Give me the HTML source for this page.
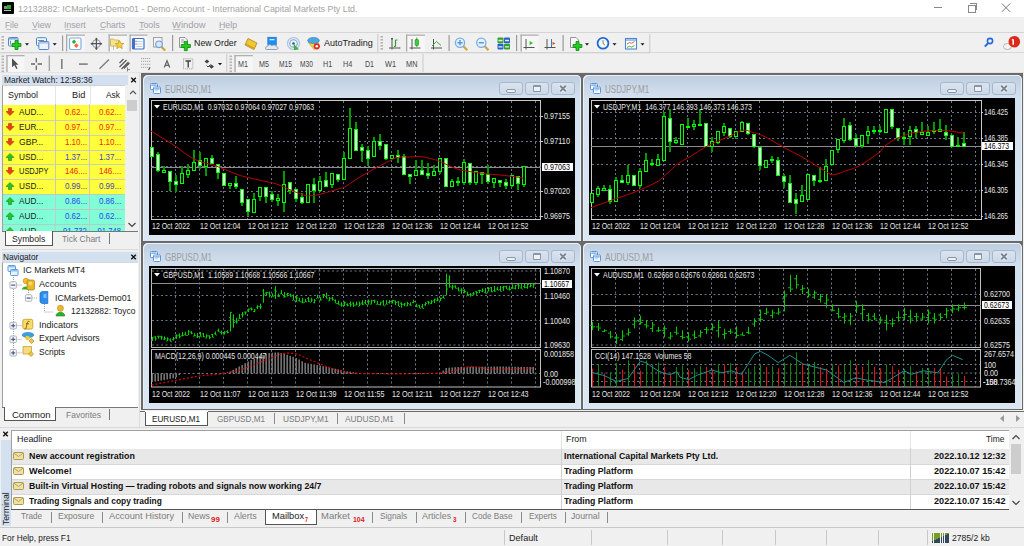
<!DOCTYPE html><html><head><meta charset="utf-8"><style>html,body{margin:0;padding:0;width:1024px;height:546px;overflow:hidden;position:relative;font-family:'Liberation Sans', sans-serif;background:#f0f0f0}</style></head><body>
<div style="position:absolute;left:0px;top:0px;width:1024px;height:546px;background:#f0f0f0"></div>
<div style="position:absolute;left:0px;top:0px;width:1024px;height:17px;background:#fff"></div>
<div style="position:absolute;left:1.5px;top:2px;width:12px;height:12px;background:#000;border-radius:1px"></div>
<div style="position:absolute;left:3.6px;top:6px;width:3px;height:3px;background:#8a8a8a"></div>
<div style="position:absolute;left:7px;top:5px;width:4px;height:4.3px;background:#20b020"></div>
<div style="position:absolute;left:3.5px;top:10px;width:7.5px;height:1px;background:#b8b8c8"></div>
<span id="t1" style="transform:scaleX(0.9036);transform-origin:0 0;position:absolute;left:17.60px;top:3.74px;font-size:9.8px;line-height:10.947px;color:#a3a3a3;font-weight:normal;white-space:nowrap;font-family:'Liberation Sans', sans-serif;">12132882: ICMarkets-Demo01 - Demo Account - International Capital Markets Pty Ltd.</span>
<div style="position:absolute;left:934px;top:7px;width:8px;height:1px;background:#888"></div>
<div style="position:absolute;left:968px;top:5px;width:6px;height:6px;border:1px solid #888;"></div>
<div style="position:absolute;left:970px;top:3px;width:6px;height:6px;border-top:1px solid #888;border-right:1px solid #888;"></div>
<svg style="position:absolute;left:1000px;top:2px" width="12" height="12"><path d="M1.8 1.5L10.2 9.9M10.2 1.5L1.8 9.9" stroke="#777" stroke-width="1"/></svg>
<span id="t2" style="transform:scaleX(0.8546);transform-origin:0 0;position:absolute;left:5.20px;top:19.94px;font-size:9.8px;line-height:10.947px;color:#a0a0a8;font-weight:normal;white-space:nowrap;font-family:'Liberation Sans', sans-serif;">File</span>
<div style="position:absolute;left:5.5px;top:29px;width:5px;height:1px;background:#c0c0c8"></div>
<span id="t3" style="transform:scaleX(0.9021);transform-origin:0 0;position:absolute;left:32.10px;top:19.94px;font-size:9.8px;line-height:10.947px;color:#a0a0a8;font-weight:normal;white-space:nowrap;font-family:'Liberation Sans', sans-serif;">View</span>
<div style="position:absolute;left:32.4px;top:29px;width:5px;height:1px;background:#c0c0c8"></div>
<span id="t4" style="transform:scaleX(0.8892);transform-origin:0 0;position:absolute;left:64.40px;top:19.94px;font-size:9.8px;line-height:10.947px;color:#a0a0a8;font-weight:normal;white-space:nowrap;font-family:'Liberation Sans', sans-serif;">Insert</span>
<div style="position:absolute;left:64.7px;top:29px;width:5px;height:1px;background:#c0c0c8"></div>
<span id="t5" style="transform:scaleX(0.8767);transform-origin:0 0;position:absolute;left:99.60px;top:19.94px;font-size:9.8px;line-height:10.947px;color:#a0a0a8;font-weight:normal;white-space:nowrap;font-family:'Liberation Sans', sans-serif;">Charts</span>
<div style="position:absolute;left:99.89999999999999px;top:29px;width:5px;height:1px;background:#c0c0c8"></div>
<span id="t6" style="transform:scaleX(0.9049);transform-origin:0 0;position:absolute;left:138.70px;top:19.94px;font-size:9.8px;line-height:10.947px;color:#a0a0a8;font-weight:normal;white-space:nowrap;font-family:'Liberation Sans', sans-serif;">Tools</span>
<div style="position:absolute;left:139.0px;top:29px;width:5px;height:1px;background:#c0c0c8"></div>
<span id="t7" style="transform:scaleX(0.9610);transform-origin:0 0;position:absolute;left:172.30px;top:19.94px;font-size:9.8px;line-height:10.947px;color:#a0a0a8;font-weight:normal;white-space:nowrap;font-family:'Liberation Sans', sans-serif;">Window</span>
<div style="position:absolute;left:172.60000000000002px;top:29px;width:8px;height:1px;background:#c0c0c8"></div>
<span id="t8" style="transform:scaleX(0.8980);transform-origin:0 0;position:absolute;left:219.10px;top:19.94px;font-size:9.8px;line-height:10.947px;color:#a0a0a8;font-weight:normal;white-space:nowrap;font-family:'Liberation Sans', sans-serif;">Help</span>
<div style="position:absolute;left:219.4px;top:29px;width:5px;height:1px;background:#c0c0c8"></div>
<div style="position:absolute;left:0px;top:32px;width:1024px;height:1px;background:#d5d5d5"></div>
<div style="position:absolute;left:0px;top:52px;width:1024px;height:1px;background:#d9d9d9"></div>
<div style="position:absolute;left:0px;top:72px;width:1024px;height:1px;background:#e3e3e3"></div>
<div style="position:absolute;left:2px;top:75px;width:125.5px;height:9.5px;background:#d2e0f0"></div>
<span id="t9" style="transform:scaleX(0.8557);transform-origin:0 0;position:absolute;left:4.00px;top:74.64px;font-size:9.8px;line-height:10.947px;color:#1a1a1a;font-weight:normal;white-space:nowrap;font-family:'Liberation Sans', sans-serif;">Market Watch: 12:58:36</span>
<svg style="position:absolute;left:130px;top:77px" width="8" height="7"><path d="M1.3 0.8L5.8 5.3M5.8 0.8L1.3 5.3" stroke="#111" stroke-width="1.4"/></svg>
<div style="position:absolute;left:2px;top:85px;width:123px;height:146px;background:#fff;border-left:1px solid #a0a0a0;border-top:1px solid #d0d0d0;box-sizing:border-box"></div>
<span id="t10" style="transform:scaleX(0.9182);transform-origin:0 0;position:absolute;left:7.70px;top:90.34px;font-size:9.8px;line-height:10.947px;color:#1a1a1a;font-weight:normal;white-space:nowrap;font-family:'Liberation Sans', sans-serif;">Symbol</span>
<span id="t11" style="transform:scaleX(0.9385);transform-origin:0 0;position:absolute;left:72.00px;top:90.34px;font-size:9.8px;line-height:10.947px;color:#1a1a1a;font-weight:normal;white-space:nowrap;font-family:'Liberation Sans', sans-serif;">Bid</span>
<span id="t12" style="transform:scaleX(0.8566);transform-origin:0 0;position:absolute;left:106.00px;top:90.34px;font-size:9.8px;line-height:10.947px;color:#1a1a1a;font-weight:normal;white-space:nowrap;font-family:'Liberation Sans', sans-serif;">Ask</span>
<div style="position:absolute;left:55px;top:86px;width:1px;height:18px;background:#e6e6e6"></div>
<div style="position:absolute;left:89.5px;top:86px;width:1px;height:18px;background:#e6e6e6"></div>
<div style="position:absolute;left:3px;top:104px;width:122px;height:127px;overflow:hidden">
<div style="position:absolute;left:0px;top:0.7999999999999972px;width:122px;height:15px;background:#ffff3c"></div>
<svg style="position:absolute;left:3.2px;top:3.799999999999997px" width="9" height="8"><path d="M2.5 0.5H5.5V3.5H8L4 7.5L0 3.5H2.5Z" fill="#e8401a" stroke="#b82a10" stroke-width="0.6"/></svg>
<span id="t13" style="transform:scaleX(0.8385);transform-origin:0 0;position:absolute;left:15.50px;top:2.84px;font-size:9.8px;line-height:10.947px;color:#1a1a1a;font-weight:normal;white-space:nowrap;font-family:'Liberation Sans', sans-serif;">AUD...</span>
<div style="position:absolute;left:83.80px;top:2.84px;width:0;height:0"><span id="t14" style="transform:scaleX(0.8188);transform-origin:100% 0;position:absolute;right:0;top:0;font-size:9.8px;line-height:10.947px;color:#f02a10;font-weight:normal;white-space:nowrap;font-family:'Liberation Sans', sans-serif;">0.62...</span></div>
<div style="position:absolute;left:118.00px;top:2.84px;width:0;height:0"><span id="t15" style="transform:scaleX(0.8188);transform-origin:100% 0;position:absolute;right:0;top:0;font-size:9.8px;line-height:10.947px;color:#f02a10;font-weight:normal;white-space:nowrap;font-family:'Liberation Sans', sans-serif;">0.62...</span></div>
<div style="position:absolute;left:0px;top:15.700000000000003px;width:122px;height:15px;background:#ffff3c"></div>
<div style="position:absolute;left:0px;top:15.700000000000003px;width:122px;height:1px;background:#cfcfb8"></div>
<svg style="position:absolute;left:3.2px;top:18.700000000000003px" width="9" height="8"><path d="M2.5 0.5H5.5V3.5H8L4 7.5L0 3.5H2.5Z" fill="#e8401a" stroke="#b82a10" stroke-width="0.6"/></svg>
<span id="t16" style="transform:scaleX(0.8385);transform-origin:0 0;position:absolute;left:15.50px;top:17.74px;font-size:9.8px;line-height:10.947px;color:#1a1a1a;font-weight:normal;white-space:nowrap;font-family:'Liberation Sans', sans-serif;">EUR...</span>
<div style="position:absolute;left:83.80px;top:17.74px;width:0;height:0"><span id="t17" style="transform:scaleX(0.8188);transform-origin:100% 0;position:absolute;right:0;top:0;font-size:9.8px;line-height:10.947px;color:#f02a10;font-weight:normal;white-space:nowrap;font-family:'Liberation Sans', sans-serif;">0.97...</span></div>
<div style="position:absolute;left:118.00px;top:17.74px;width:0;height:0"><span id="t18" style="transform:scaleX(0.8188);transform-origin:100% 0;position:absolute;right:0;top:0;font-size:9.8px;line-height:10.947px;color:#f02a10;font-weight:normal;white-space:nowrap;font-family:'Liberation Sans', sans-serif;">0.97...</span></div>
<div style="position:absolute;left:0px;top:30.599999999999994px;width:122px;height:15px;background:#ffff3c"></div>
<div style="position:absolute;left:0px;top:30.599999999999994px;width:122px;height:1px;background:#cfcfb8"></div>
<svg style="position:absolute;left:3.2px;top:33.599999999999994px" width="9" height="8"><path d="M2.5 0.5H5.5V3.5H8L4 7.5L0 3.5H2.5Z" fill="#e8401a" stroke="#b82a10" stroke-width="0.6"/></svg>
<span id="t19" style="transform:scaleX(0.8770);transform-origin:0 0;position:absolute;left:15.50px;top:32.64px;font-size:9.8px;line-height:10.947px;color:#1a1a1a;font-weight:normal;white-space:nowrap;font-family:'Liberation Sans', sans-serif;">GBP...</span>
<div style="position:absolute;left:83.80px;top:32.64px;width:0;height:0"><span id="t20" style="transform:scaleX(0.8188);transform-origin:100% 0;position:absolute;right:0;top:0;font-size:9.8px;line-height:10.947px;color:#f02a10;font-weight:normal;white-space:nowrap;font-family:'Liberation Sans', sans-serif;">1.10...</span></div>
<div style="position:absolute;left:118.00px;top:32.64px;width:0;height:0"><span id="t21" style="transform:scaleX(0.8188);transform-origin:100% 0;position:absolute;right:0;top:0;font-size:9.8px;line-height:10.947px;color:#f02a10;font-weight:normal;white-space:nowrap;font-family:'Liberation Sans', sans-serif;">1.10...</span></div>
<div style="position:absolute;left:0px;top:45.5px;width:122px;height:15px;background:#ffff3c"></div>
<div style="position:absolute;left:0px;top:45.5px;width:122px;height:1px;background:#cfcfb8"></div>
<svg style="position:absolute;left:3.2px;top:48.5px" width="9" height="8"><path d="M2.5 7.5H5.5V4.5H8L4 0.5L0 4.5H2.5Z" fill="#2cc22c" stroke="#138813" stroke-width="0.6"/></svg>
<span id="t22" style="transform:scaleX(0.8385);transform-origin:0 0;position:absolute;left:15.50px;top:47.54px;font-size:9.8px;line-height:10.947px;color:#1a1a1a;font-weight:normal;white-space:nowrap;font-family:'Liberation Sans', sans-serif;">USD...</span>
<div style="position:absolute;left:83.80px;top:47.54px;width:0;height:0"><span id="t23" style="transform:scaleX(0.8188);transform-origin:100% 0;position:absolute;right:0;top:0;font-size:9.8px;line-height:10.947px;color:#4646c0;font-weight:normal;white-space:nowrap;font-family:'Liberation Sans', sans-serif;">1.37...</span></div>
<div style="position:absolute;left:118.00px;top:47.54px;width:0;height:0"><span id="t24" style="transform:scaleX(0.8188);transform-origin:100% 0;position:absolute;right:0;top:0;font-size:9.8px;line-height:10.947px;color:#4646c0;font-weight:normal;white-space:nowrap;font-family:'Liberation Sans', sans-serif;">1.37...</span></div>
<div style="position:absolute;left:0px;top:60.400000000000006px;width:122px;height:15px;background:#ffff3c"></div>
<div style="position:absolute;left:0px;top:60.400000000000006px;width:122px;height:1px;background:#cfcfb8"></div>
<svg style="position:absolute;left:3.2px;top:63.400000000000006px" width="9" height="8"><path d="M2.5 0.5H5.5V3.5H8L4 7.5L0 3.5H2.5Z" fill="#e8401a" stroke="#b82a10" stroke-width="0.6"/></svg>
<span id="t25" style="transform:scaleX(0.7605);transform-origin:0 0;position:absolute;left:15.50px;top:62.44px;font-size:9.8px;line-height:10.947px;color:#1a1a1a;font-weight:normal;white-space:nowrap;font-family:'Liberation Sans', sans-serif;">USDJPY</span>
<div style="position:absolute;left:83.80px;top:62.44px;width:0;height:0"><span id="t26" style="transform:scaleX(0.8188);transform-origin:100% 0;position:absolute;right:0;top:0;font-size:9.8px;line-height:10.947px;color:#f02a10;font-weight:normal;white-space:nowrap;font-family:'Liberation Sans', sans-serif;">146....</span></div>
<div style="position:absolute;left:118.00px;top:62.44px;width:0;height:0"><span id="t27" style="transform:scaleX(0.8188);transform-origin:100% 0;position:absolute;right:0;top:0;font-size:9.8px;line-height:10.947px;color:#f02a10;font-weight:normal;white-space:nowrap;font-family:'Liberation Sans', sans-serif;">146....</span></div>
<div style="position:absolute;left:0px;top:75.30000000000001px;width:122px;height:15px;background:#ffff3c"></div>
<div style="position:absolute;left:0px;top:75.30000000000001px;width:122px;height:1px;background:#cfcfb8"></div>
<svg style="position:absolute;left:3.2px;top:78.30000000000001px" width="9" height="8"><path d="M2.5 7.5H5.5V4.5H8L4 0.5L0 4.5H2.5Z" fill="#2cc22c" stroke="#138813" stroke-width="0.6"/></svg>
<span id="t28" style="transform:scaleX(0.8385);transform-origin:0 0;position:absolute;left:15.50px;top:77.34px;font-size:9.8px;line-height:10.947px;color:#1a1a1a;font-weight:normal;white-space:nowrap;font-family:'Liberation Sans', sans-serif;">USD...</span>
<div style="position:absolute;left:83.80px;top:77.34px;width:0;height:0"><span id="t29" style="transform:scaleX(0.8188);transform-origin:100% 0;position:absolute;right:0;top:0;font-size:9.8px;line-height:10.947px;color:#4646c0;font-weight:normal;white-space:nowrap;font-family:'Liberation Sans', sans-serif;">0.99...</span></div>
<div style="position:absolute;left:118.00px;top:77.34px;width:0;height:0"><span id="t30" style="transform:scaleX(0.8188);transform-origin:100% 0;position:absolute;right:0;top:0;font-size:9.8px;line-height:10.947px;color:#4646c0;font-weight:normal;white-space:nowrap;font-family:'Liberation Sans', sans-serif;">0.99...</span></div>
<div style="position:absolute;left:0px;top:90.19999999999999px;width:122px;height:15px;background:#80ffd6"></div>
<div style="position:absolute;left:0px;top:90.19999999999999px;width:122px;height:1px;background:#b4ccc4"></div>
<svg style="position:absolute;left:3.2px;top:93.19999999999999px" width="9" height="8"><path d="M2.5 7.5H5.5V4.5H8L4 0.5L0 4.5H2.5Z" fill="#2cc22c" stroke="#138813" stroke-width="0.6"/></svg>
<span id="t31" style="transform:scaleX(0.8385);transform-origin:0 0;position:absolute;left:15.50px;top:92.24px;font-size:9.8px;line-height:10.947px;color:#1a1a1a;font-weight:normal;white-space:nowrap;font-family:'Liberation Sans', sans-serif;">AUD...</span>
<div style="position:absolute;left:83.80px;top:92.24px;width:0;height:0"><span id="t32" style="transform:scaleX(0.8188);transform-origin:100% 0;position:absolute;right:0;top:0;font-size:9.8px;line-height:10.947px;color:#2a46ee;font-weight:normal;white-space:nowrap;font-family:'Liberation Sans', sans-serif;">0.86...</span></div>
<div style="position:absolute;left:118.00px;top:92.24px;width:0;height:0"><span id="t33" style="transform:scaleX(0.8188);transform-origin:100% 0;position:absolute;right:0;top:0;font-size:9.8px;line-height:10.947px;color:#2a46ee;font-weight:normal;white-space:nowrap;font-family:'Liberation Sans', sans-serif;">0.86...</span></div>
<div style="position:absolute;left:0px;top:105.1px;width:122px;height:15px;background:#80ffd6"></div>
<div style="position:absolute;left:0px;top:105.1px;width:122px;height:1px;background:#b4ccc4"></div>
<svg style="position:absolute;left:3.2px;top:108.1px" width="9" height="8"><path d="M2.5 7.5H5.5V4.5H8L4 0.5L0 4.5H2.5Z" fill="#2cc22c" stroke="#138813" stroke-width="0.6"/></svg>
<span id="t34" style="transform:scaleX(0.8385);transform-origin:0 0;position:absolute;left:15.50px;top:107.14px;font-size:9.8px;line-height:10.947px;color:#1a1a1a;font-weight:normal;white-space:nowrap;font-family:'Liberation Sans', sans-serif;">AUD...</span>
<div style="position:absolute;left:83.80px;top:107.14px;width:0;height:0"><span id="t35" style="transform:scaleX(0.8188);transform-origin:100% 0;position:absolute;right:0;top:0;font-size:9.8px;line-height:10.947px;color:#2a46ee;font-weight:normal;white-space:nowrap;font-family:'Liberation Sans', sans-serif;">0.62...</span></div>
<div style="position:absolute;left:118.00px;top:107.14px;width:0;height:0"><span id="t36" style="transform:scaleX(0.8188);transform-origin:100% 0;position:absolute;right:0;top:0;font-size:9.8px;line-height:10.947px;color:#2a46ee;font-weight:normal;white-space:nowrap;font-family:'Liberation Sans', sans-serif;">0.62...</span></div>
<div style="position:absolute;left:0px;top:120.0px;width:122px;height:15px;background:#80ffd6"></div>
<div style="position:absolute;left:0px;top:120.0px;width:122px;height:1px;background:#b4ccc4"></div>
<svg style="position:absolute;left:3.2px;top:123.0px" width="9" height="8"><path d="M2.5 7.5H5.5V4.5H8L4 0.5L0 4.5H2.5Z" fill="#2cc22c" stroke="#138813" stroke-width="0.6"/></svg>
<span id="t37" style="transform:scaleX(0.8385);transform-origin:0 0;position:absolute;left:15.50px;top:122.04px;font-size:9.8px;line-height:10.947px;color:#1a1a1a;font-weight:normal;white-space:nowrap;font-family:'Liberation Sans', sans-serif;">AUD...</span>
<div style="position:absolute;left:83.80px;top:122.04px;width:0;height:0"><span id="t38" style="transform:scaleX(0.8008);transform-origin:100% 0;position:absolute;right:0;top:0;font-size:9.8px;line-height:10.947px;color:#2a46ee;font-weight:normal;white-space:nowrap;font-family:'Liberation Sans', sans-serif;">91.732</span></div>
<div style="position:absolute;left:118.00px;top:122.04px;width:0;height:0"><span id="t39" style="transform:scaleX(0.7808);transform-origin:100% 0;position:absolute;right:0;top:0;font-size:9.8px;line-height:10.947px;color:#2a46ee;font-weight:normal;white-space:nowrap;font-family:'Liberation Sans', sans-serif;">91.748</span></div>
<div style="position:absolute;left:51.7px;top:0px;width:1px;height:127px;background:#c8c8c8"></div>
<div style="position:absolute;left:85.9px;top:0px;width:1px;height:127px;background:#c8c8c8"></div>
</div>
<div style="position:absolute;left:125px;top:85px;width:13px;height:146px;background:#f0f0f0"></div>
<svg style="position:absolute;left:128px;top:89px" width="10" height="7"><path d="M2 5L5 2L8 5" stroke="#555" fill="none" stroke-width="1.1"/></svg>
<div style="position:absolute;left:126.5px;top:100px;width:10px;height:11px;background:#cdcdcd"></div>
<svg style="position:absolute;left:127px;top:221px" width="10" height="7"><path d="M1.5 2L5 5.5L8.5 2" stroke="#444" fill="none" stroke-width="1.2"/></svg>
<div style="position:absolute;left:2px;top:231px;width:136px;height:16px;background:#f0f0f0"></div>
<div style="position:absolute;left:2px;top:231px;width:136px;height:1px;background:#777"></div>
<div style="position:absolute;left:4.5px;top:231px;width:48.5px;height:14.5px;background:#fff;border:1px solid #555;border-top:none;box-sizing:border-box"></div>
<span id="t40" style="transform:scaleX(0.8862);transform-origin:0 0;position:absolute;left:12.00px;top:233.54px;font-size:9.8px;line-height:10.947px;color:#1a1a1a;font-weight:normal;white-space:nowrap;font-family:'Liberation Sans', sans-serif;">Symbols</span>
<span id="t41" style="transform:scaleX(0.8649);transform-origin:0 0;position:absolute;left:61.70px;top:233.54px;font-size:9.8px;line-height:10.947px;color:#7c7c7c;font-weight:normal;white-space:nowrap;font-family:'Liberation Sans', sans-serif;">Tick Chart</span>
<div style="position:absolute;left:108.5px;top:233px;width:1px;height:11px;background:#777"></div>
<div style="position:absolute;left:2px;top:249px;width:136px;height:1px;background:#dadada"></div>
<div style="position:absolute;left:139px;top:72px;width:1px;height:355px;background:#dcdcdc"></div>
<div style="position:absolute;left:2px;top:252px;width:136px;height:10px;background:#d2e0f0"></div>
<span id="t42" style="transform:scaleX(0.8393);transform-origin:0 0;position:absolute;left:3.40px;top:252.04px;font-size:9.8px;line-height:10.947px;color:#1a1a1a;font-weight:normal;white-space:nowrap;font-family:'Liberation Sans', sans-serif;">Navigator</span>
<svg style="position:absolute;left:130px;top:254px" width="8" height="7"><path d="M1.3 0.8L5.8 5.3M5.8 0.8L1.3 5.3" stroke="#111" stroke-width="1.4"/></svg>
<div style="position:absolute;left:2px;top:262px;width:136px;height:145px;background:#fff;border-left:1px solid #a0a0a0;border-top:1px solid #d8d8d8;box-sizing:border-box"></div>
<span id="t43" style="transform:scaleX(0.8897);transform-origin:0 0;position:absolute;left:23.00px;top:265.44px;font-size:9.8px;line-height:10.947px;color:#1a1a1a;font-weight:normal;white-space:nowrap;font-family:'Liberation Sans', sans-serif;">IC Markets MT4</span>
<span id="t44" style="transform:scaleX(0.9302);transform-origin:0 0;position:absolute;left:39.00px;top:279.04px;font-size:9.8px;line-height:10.947px;color:#1a1a1a;font-weight:normal;white-space:nowrap;font-family:'Liberation Sans', sans-serif;">Accounts</span>
<span id="t45" style="transform:scaleX(0.9007);transform-origin:0 0;position:absolute;left:54.50px;top:292.54px;font-size:9.8px;line-height:10.947px;color:#1a1a1a;font-weight:normal;white-space:nowrap;font-family:'Liberation Sans', sans-serif;">ICMarkets-Demo01</span>
<span id="t46" style="transform:scaleX(0.8663);transform-origin:0 0;position:absolute;left:70.50px;top:306.04px;font-size:9.8px;line-height:10.947px;color:#1a1a1a;font-weight:normal;white-space:nowrap;font-family:'Liberation Sans', sans-serif;">12132882: Toyco</span>
<span id="t47" style="transform:scaleX(0.9180);transform-origin:0 0;position:absolute;left:39.00px;top:319.64px;font-size:9.8px;line-height:10.947px;color:#1a1a1a;font-weight:normal;white-space:nowrap;font-family:'Liberation Sans', sans-serif;">Indicators</span>
<span id="t48" style="transform:scaleX(0.8918);transform-origin:0 0;position:absolute;left:39.00px;top:333.04px;font-size:9.8px;line-height:10.947px;color:#1a1a1a;font-weight:normal;white-space:nowrap;font-family:'Liberation Sans', sans-serif;">Expert Advisors</span>
<span id="t49" style="transform:scaleX(0.8680);transform-origin:0 0;position:absolute;left:39.00px;top:346.64px;font-size:9.8px;line-height:10.947px;color:#1a1a1a;font-weight:normal;white-space:nowrap;font-family:'Liberation Sans', sans-serif;">Scripts</span>
<div style="position:absolute;left:2px;top:407px;width:136px;height:1px;background:#777"></div>
<div style="position:absolute;left:4.4px;top:407px;width:52px;height:14px;background:#fff;border:1px solid #555;border-top:none;box-sizing:border-box"></div>
<span id="t50" style="transform:scaleX(0.9686);transform-origin:0 0;position:absolute;left:12.00px;top:409.54px;font-size:9.8px;line-height:10.947px;color:#1a1a1a;font-weight:normal;white-space:nowrap;font-family:'Liberation Sans', sans-serif;">Common</span>
<span id="t51" style="transform:scaleX(0.8686);transform-origin:0 0;position:absolute;left:65.70px;top:409.54px;font-size:9.8px;line-height:10.947px;color:#7c7c7c;font-weight:normal;white-space:nowrap;font-family:'Liberation Sans', sans-serif;">Favorites</span>
<div style="position:absolute;left:108.7px;top:409px;width:1px;height:11px;background:#777"></div>
<div style="position:absolute;left:141px;top:73px;width:882px;height:338px;background:#6a6a6a"></div>
<div style="position:absolute;left:143px;top:75px;width:438px;height:166px;border-radius:5px 5px 0 0;background:linear-gradient(#bccddf 0px,#cad8e8 12px,#d3e0ee 23px,#dbe6f2 100%);box-shadow:inset 1px 1px 0 #e9f0f8, inset -1px 0 0 #e9f0f8"></div>
<svg style="position:absolute;left:150px;top:83px" width="12" height="12"><rect x="0.5" y="0.5" width="7" height="6" rx="1" fill="#fff" stroke="#5a94dc"/><rect x="3.5" y="4" width="7" height="6.5" rx="1" fill="#fff" stroke="#5a94dc"/><rect x="1.3" y="1.3" width="5.4" height="1.8" fill="#8ab8ec"/><rect x="4.3" y="4.8" width="5.4" height="1.8" fill="#8ab8ec"/><rect x="5" y="7.3" width="3" height="1" fill="#a8c8f0"/></svg>
<span id="t52" style="transform:scaleX(0.7343);transform-origin:0 0;position:absolute;left:164.50px;top:83.09px;font-size:10.8px;line-height:12.064px;color:#9c9c9c;font-weight:normal;white-space:nowrap;font-family:'Liberation Sans', sans-serif;">EURUSD,M1</span>
<div style="position:absolute;left:551px;top:82px;width:24px;height:13px;box-sizing:border-box;border:1px solid #a8b8cc;border-radius:3px;background:linear-gradient(#d9e4f0,#cbd8e7)"></div>
<svg style="position:absolute;left:558px;top:84px" width="10" height="9"><path d="M2.2 1.8L7.8 7.4M7.8 1.8L2.2 7.4" stroke="#f4f6f8" stroke-width="3.6"/><path d="M2.2 1.8L7.8 7.4M7.8 1.8L2.2 7.4" stroke="#7a8594" stroke-width="2"/></svg>
<div style="position:absolute;left:525px;top:82px;width:24px;height:13px;box-sizing:border-box;border:1px solid #a8b8cc;border-radius:3px;background:linear-gradient(#d9e4f0,#cbd8e7)"></div>
<div style="position:absolute;left:533px;top:85px;width:8px;height:7px;box-sizing:border-box;border:1.5px solid #8a96a4;border-top-width:2.5px;background:#eef2f6;border-radius:1px"></div>
<div style="position:absolute;left:499px;top:82px;width:24px;height:13px;box-sizing:border-box;border:1px solid #a8b8cc;border-radius:3px;background:linear-gradient(#d9e4f0,#cbd8e7)"></div>
<div style="position:absolute;left:506px;top:89px;width:10px;height:4px;box-sizing:border-box;border:1px solid #8a96a4;background:#eef2f6;border-radius:2px"></div>
<div style="position:absolute;left:583px;top:75px;width:439px;height:166px;border-radius:5px 5px 0 0;background:linear-gradient(#bccddf 0px,#cad8e8 12px,#d3e0ee 23px,#dbe6f2 100%);box-shadow:inset 1px 1px 0 #e9f0f8, inset -1px 0 0 #e9f0f8"></div>
<svg style="position:absolute;left:590px;top:83px" width="12" height="12"><rect x="0.5" y="0.5" width="7" height="6" rx="1" fill="#fff" stroke="#5a94dc"/><rect x="3.5" y="4" width="7" height="6.5" rx="1" fill="#fff" stroke="#5a94dc"/><rect x="1.3" y="1.3" width="5.4" height="1.8" fill="#8ab8ec"/><rect x="4.3" y="4.8" width="5.4" height="1.8" fill="#8ab8ec"/><rect x="5" y="7.3" width="3" height="1" fill="#a8c8f0"/></svg>
<span id="t53" style="transform:scaleX(0.7481);transform-origin:0 0;position:absolute;left:604.50px;top:83.09px;font-size:10.8px;line-height:12.064px;color:#9c9c9c;font-weight:normal;white-space:nowrap;font-family:'Liberation Sans', sans-serif;">USDJPY,M1</span>
<div style="position:absolute;left:992px;top:82px;width:24px;height:13px;box-sizing:border-box;border:1px solid #a8b8cc;border-radius:3px;background:linear-gradient(#d9e4f0,#cbd8e7)"></div>
<svg style="position:absolute;left:999px;top:84px" width="10" height="9"><path d="M2.2 1.8L7.8 7.4M7.8 1.8L2.2 7.4" stroke="#f4f6f8" stroke-width="3.6"/><path d="M2.2 1.8L7.8 7.4M7.8 1.8L2.2 7.4" stroke="#7a8594" stroke-width="2"/></svg>
<div style="position:absolute;left:966px;top:82px;width:24px;height:13px;box-sizing:border-box;border:1px solid #a8b8cc;border-radius:3px;background:linear-gradient(#d9e4f0,#cbd8e7)"></div>
<div style="position:absolute;left:974px;top:85px;width:8px;height:7px;box-sizing:border-box;border:1.5px solid #8a96a4;border-top-width:2.5px;background:#eef2f6;border-radius:1px"></div>
<div style="position:absolute;left:940px;top:82px;width:24px;height:13px;box-sizing:border-box;border:1px solid #a8b8cc;border-radius:3px;background:linear-gradient(#d9e4f0,#cbd8e7)"></div>
<div style="position:absolute;left:947px;top:89px;width:10px;height:4px;box-sizing:border-box;border:1px solid #8a96a4;background:#eef2f6;border-radius:2px"></div>
<div style="position:absolute;left:143px;top:243px;width:438px;height:166px;border-radius:5px 5px 0 0;background:linear-gradient(#bccddf 0px,#cad8e8 12px,#d3e0ee 23px,#dbe6f2 100%);box-shadow:inset 1px 1px 0 #e9f0f8, inset -1px 0 0 #e9f0f8"></div>
<svg style="position:absolute;left:150px;top:251px" width="12" height="12"><rect x="0.5" y="0.5" width="7" height="6" rx="1" fill="#fff" stroke="#5a94dc"/><rect x="3.5" y="4" width="7" height="6.5" rx="1" fill="#fff" stroke="#5a94dc"/><rect x="1.3" y="1.3" width="5.4" height="1.8" fill="#8ab8ec"/><rect x="4.3" y="4.8" width="5.4" height="1.8" fill="#8ab8ec"/><rect x="5" y="7.3" width="3" height="1" fill="#a8c8f0"/></svg>
<span id="t54" style="transform:scaleX(0.7389);transform-origin:0 0;position:absolute;left:164.50px;top:251.09px;font-size:10.8px;line-height:12.064px;color:#9c9c9c;font-weight:normal;white-space:nowrap;font-family:'Liberation Sans', sans-serif;">GBPUSD,M1</span>
<div style="position:absolute;left:551px;top:250px;width:24px;height:13px;box-sizing:border-box;border:1px solid #a8b8cc;border-radius:3px;background:linear-gradient(#d9e4f0,#cbd8e7)"></div>
<svg style="position:absolute;left:558px;top:252px" width="10" height="9"><path d="M2.2 1.8L7.8 7.4M7.8 1.8L2.2 7.4" stroke="#f4f6f8" stroke-width="3.6"/><path d="M2.2 1.8L7.8 7.4M7.8 1.8L2.2 7.4" stroke="#7a8594" stroke-width="2"/></svg>
<div style="position:absolute;left:525px;top:250px;width:24px;height:13px;box-sizing:border-box;border:1px solid #a8b8cc;border-radius:3px;background:linear-gradient(#d9e4f0,#cbd8e7)"></div>
<div style="position:absolute;left:533px;top:253px;width:8px;height:7px;box-sizing:border-box;border:1.5px solid #8a96a4;border-top-width:2.5px;background:#eef2f6;border-radius:1px"></div>
<div style="position:absolute;left:499px;top:250px;width:24px;height:13px;box-sizing:border-box;border:1px solid #a8b8cc;border-radius:3px;background:linear-gradient(#d9e4f0,#cbd8e7)"></div>
<div style="position:absolute;left:506px;top:257px;width:10px;height:4px;box-sizing:border-box;border:1px solid #8a96a4;background:#eef2f6;border-radius:2px"></div>
<div style="position:absolute;left:583px;top:243px;width:439px;height:166px;border-radius:5px 5px 0 0;background:linear-gradient(#bccddf 0px,#cad8e8 12px,#d3e0ee 23px,#dbe6f2 100%);box-shadow:inset 1px 1px 0 #e9f0f8, inset -1px 0 0 #e9f0f8"></div>
<svg style="position:absolute;left:590px;top:251px" width="12" height="12"><rect x="0.5" y="0.5" width="7" height="6" rx="1" fill="#fff" stroke="#5a94dc"/><rect x="3.5" y="4" width="7" height="6.5" rx="1" fill="#fff" stroke="#5a94dc"/><rect x="1.3" y="1.3" width="5.4" height="1.8" fill="#8ab8ec"/><rect x="4.3" y="4.8" width="5.4" height="1.8" fill="#8ab8ec"/><rect x="5" y="7.3" width="3" height="1" fill="#a8c8f0"/></svg>
<span id="t55" style="transform:scaleX(0.7674);transform-origin:0 0;position:absolute;left:604.50px;top:251.09px;font-size:10.8px;line-height:12.064px;color:#9c9c9c;font-weight:normal;white-space:nowrap;font-family:'Liberation Sans', sans-serif;">AUDUSD,M1</span>
<div style="position:absolute;left:992px;top:250px;width:24px;height:13px;box-sizing:border-box;border:1px solid #a8b8cc;border-radius:3px;background:linear-gradient(#d9e4f0,#cbd8e7)"></div>
<svg style="position:absolute;left:999px;top:252px" width="10" height="9"><path d="M2.2 1.8L7.8 7.4M7.8 1.8L2.2 7.4" stroke="#f4f6f8" stroke-width="3.6"/><path d="M2.2 1.8L7.8 7.4M7.8 1.8L2.2 7.4" stroke="#7a8594" stroke-width="2"/></svg>
<div style="position:absolute;left:966px;top:250px;width:24px;height:13px;box-sizing:border-box;border:1px solid #a8b8cc;border-radius:3px;background:linear-gradient(#d9e4f0,#cbd8e7)"></div>
<div style="position:absolute;left:974px;top:253px;width:8px;height:7px;box-sizing:border-box;border:1.5px solid #8a96a4;border-top-width:2.5px;background:#eef2f6;border-radius:1px"></div>
<div style="position:absolute;left:940px;top:250px;width:24px;height:13px;box-sizing:border-box;border:1px solid #a8b8cc;border-radius:3px;background:linear-gradient(#d9e4f0,#cbd8e7)"></div>
<div style="position:absolute;left:947px;top:257px;width:10px;height:4px;box-sizing:border-box;border:1px solid #8a96a4;background:#eef2f6;border-radius:2px"></div>
<div style="position:absolute;left:149px;top:98px;width:426px;height:137px;background:#000"></div>
<div style="position:absolute;left:589px;top:98px;width:426px;height:137px;background:#000"></div>
<div style="position:absolute;left:149px;top:266px;width:426px;height:137px;background:#000"></div>
<div style="position:absolute;left:589px;top:266px;width:426px;height:137px;background:#000"></div>
<div style="position:absolute;left:140px;top:410px;width:884px;height:18px;background:#f0f0f0"></div>
<div style="position:absolute;left:144.8px;top:411.5px;width:63px;height:14.3px;background:#fff;border:1px solid #555;border-top:none;box-sizing:border-box"></div>
<div style="position:absolute;left:140px;top:411px;width:884px;height:1px;background:#6a6a6a"></div>
<div style="position:absolute;left:144.8px;top:411px;width:63px;height:1px;background:#fff"></div>
<span id="t56" style="transform:scaleX(0.8318);transform-origin:0 0;position:absolute;left:152.00px;top:413.54px;font-size:9.8px;line-height:10.947px;color:#1a1a1a;font-weight:normal;white-space:nowrap;font-family:'Liberation Sans', sans-serif;">EURUSD,M1</span>
<span id="t57" style="transform:scaleX(0.8316);transform-origin:0 0;position:absolute;left:217.00px;top:413.54px;font-size:9.8px;line-height:10.947px;color:#7c7c7c;font-weight:normal;white-space:nowrap;font-family:'Liberation Sans', sans-serif;">GBPUSD,M1</span>
<div style="position:absolute;left:273.7px;top:413px;width:1px;height:11px;background:#8a8a8a"></div>
<span id="t58" style="transform:scaleX(0.8468);transform-origin:0 0;position:absolute;left:283.00px;top:413.54px;font-size:9.8px;line-height:10.947px;color:#7c7c7c;font-weight:normal;white-space:nowrap;font-family:'Liberation Sans', sans-serif;">USDJPY,M1</span>
<div style="position:absolute;left:337px;top:413px;width:1px;height:11px;background:#8a8a8a"></div>
<span id="t59" style="transform:scaleX(0.8492);transform-origin:0 0;position:absolute;left:345.00px;top:413.54px;font-size:9.8px;line-height:10.947px;color:#7c7c7c;font-weight:normal;white-space:nowrap;font-family:'Liberation Sans', sans-serif;">AUDUSD,M1</span>
<div style="position:absolute;left:404px;top:413px;width:1px;height:11px;background:#8a8a8a"></div>
<svg style="position:absolute;left:998px;top:414px" width="24" height="9"><path d="M6 1L2 4.5L6 8Z" fill="#999"/><path d="M18 1L22 4.5L18 8Z" fill="#999"/></svg>
<div style="position:absolute;left:0px;top:427px;width:1024px;height:1px;background:#d9d9d9"></div>
<div style="position:absolute;left:0px;top:428px;width:1024px;height:99px;background:#f0f0f0"></div>
<svg style="position:absolute;left:2px;top:431px" width="8" height="7"><path d="M1.3 0.8L5.8 5.3M5.8 0.8L1.3 5.3" stroke="#111" stroke-width="1.4"/></svg>
<div style="position:absolute;left:1px;top:440px;width:10px;height:86px;background:#d2e0f0"></div>
<div style="position:absolute;left:1px;top:526px;width:86px;height:10px;transform-origin:0 0;transform:rotate(-90deg);font-family:'Liberation Sans', sans-serif;font-size:9.6px;line-height:10px;color:#1a1a1a;white-space:nowrap"><span style="display:inline-block;transform:scaleX(0.9);transform-origin:0 0;margin-left:1px">Terminal</span></div>
<div style="position:absolute;left:11px;top:430px;width:998px;height:79px;background:#fff;border-top:1px solid #a0a0a0;border-left:1px solid #a0a0a0;box-sizing:border-box"></div>
<span id="t60" style="transform:scaleX(0.9102);transform-origin:0 0;position:absolute;left:16.60px;top:434.34px;font-size:9.8px;line-height:10.947px;color:#1a1a1a;font-weight:normal;white-space:nowrap;font-family:'Liberation Sans', sans-serif;">Headline</span>
<span id="t61" style="transform:scaleX(0.9012);transform-origin:0 0;position:absolute;left:565.80px;top:434.34px;font-size:9.8px;line-height:10.947px;color:#1a1a1a;font-weight:normal;white-space:nowrap;font-family:'Liberation Sans', sans-serif;">From</span>
<span id="t62" style="transform:scaleX(0.8636);transform-origin:0 0;position:absolute;left:985.70px;top:434.34px;font-size:9.8px;line-height:10.947px;color:#1a1a1a;font-weight:normal;white-space:nowrap;font-family:'Liberation Sans', sans-serif;">Time</span>
<div style="position:absolute;left:560.5px;top:431px;width:1px;height:17px;background:#e5e5e5"></div>
<div style="position:absolute;left:910px;top:431px;width:1px;height:17px;background:#e5e5e5"></div>
<div style="position:absolute;left:12px;top:448.5px;width:997px;height:15px;background:#e8e8e8"></div>
<svg style="position:absolute;left:13px;top:452.0px" width="11" height="8"><rect x="0.5" y="0.5" width="10" height="7" rx="1" fill="#efe0a8" stroke="#b09a50" stroke-width="1"/><path d="M0.8 1L5.5 4.5L10.2 1" stroke="#b09a50" fill="none" stroke-width="0.9"/></svg>
<span id="t63" style="transform:scaleX(0.9048);transform-origin:0 0;position:absolute;left:28.60px;top:451.04px;font-size:9.8px;line-height:10.947px;color:#111;font-weight:bold;white-space:nowrap;font-family:'Liberation Sans', sans-serif;">New account registration</span>
<span id="t64" style="transform:scaleX(0.8935);transform-origin:0 0;position:absolute;left:564.40px;top:451.04px;font-size:9.8px;line-height:10.947px;color:#111;font-weight:bold;white-space:nowrap;font-family:'Liberation Sans', sans-serif;">International Capital Markets Pty Ltd.</span>
<span id="t65" style="transform:scaleX(0.9308);transform-origin:0 0;position:absolute;left:934.30px;top:451.04px;font-size:9.8px;line-height:10.947px;color:#111;font-weight:bold;white-space:nowrap;font-family:'Liberation Sans', sans-serif;">2022.10.12 12:32</span>
<div style="position:absolute;left:12px;top:463.5px;width:997px;height:15px;background:#fff"></div>
<div style="position:absolute;left:12px;top:463.5px;width:997px;height:1px;background:#d8d8d8"></div>
<svg style="position:absolute;left:13px;top:467.0px" width="11" height="8"><rect x="0.5" y="0.5" width="10" height="7" rx="1" fill="#efe0a8" stroke="#b09a50" stroke-width="1"/><path d="M0.8 1L5.5 4.5L10.2 1" stroke="#b09a50" fill="none" stroke-width="0.9"/></svg>
<span id="t66" style="transform:scaleX(0.9282);transform-origin:0 0;position:absolute;left:28.60px;top:466.04px;font-size:9.8px;line-height:10.947px;color:#111;font-weight:bold;white-space:nowrap;font-family:'Liberation Sans', sans-serif;">Welcome!</span>
<span id="t67" style="transform:scaleX(0.8877);transform-origin:0 0;position:absolute;left:564.40px;top:466.04px;font-size:9.8px;line-height:10.947px;color:#111;font-weight:bold;white-space:nowrap;font-family:'Liberation Sans', sans-serif;">Trading Platform</span>
<span id="t68" style="transform:scaleX(0.9308);transform-origin:0 0;position:absolute;left:934.30px;top:466.04px;font-size:9.8px;line-height:10.947px;color:#111;font-weight:bold;white-space:nowrap;font-family:'Liberation Sans', sans-serif;">2022.10.07 15:42</span>
<div style="position:absolute;left:12px;top:478.5px;width:997px;height:15px;background:#e8e8e8"></div>
<div style="position:absolute;left:12px;top:478.5px;width:997px;height:1px;background:#d8d8d8"></div>
<svg style="position:absolute;left:13px;top:482.0px" width="11" height="8"><rect x="0.5" y="0.5" width="10" height="7" rx="1" fill="#efe0a8" stroke="#b09a50" stroke-width="1"/><path d="M0.8 1L5.5 4.5L10.2 1" stroke="#b09a50" fill="none" stroke-width="0.9"/></svg>
<span id="t69" style="transform:scaleX(0.8899);transform-origin:0 0;position:absolute;left:28.60px;top:481.04px;font-size:9.8px;line-height:10.947px;color:#111;font-weight:bold;white-space:nowrap;font-family:'Liberation Sans', sans-serif;">Built-in Virtual Hosting &mdash; trading robots and signals now working 24/7</span>
<span id="t70" style="transform:scaleX(0.8877);transform-origin:0 0;position:absolute;left:564.40px;top:481.04px;font-size:9.8px;line-height:10.947px;color:#111;font-weight:bold;white-space:nowrap;font-family:'Liberation Sans', sans-serif;">Trading Platform</span>
<span id="t71" style="transform:scaleX(0.9308);transform-origin:0 0;position:absolute;left:934.30px;top:481.04px;font-size:9.8px;line-height:10.947px;color:#111;font-weight:bold;white-space:nowrap;font-family:'Liberation Sans', sans-serif;">2022.10.07 15:42</span>
<div style="position:absolute;left:12px;top:493.5px;width:997px;height:15px;background:#fff"></div>
<div style="position:absolute;left:12px;top:493.5px;width:997px;height:1px;background:#d8d8d8"></div>
<svg style="position:absolute;left:13px;top:497.0px" width="11" height="8"><rect x="0.5" y="0.5" width="10" height="7" rx="1" fill="#efe0a8" stroke="#b09a50" stroke-width="1"/><path d="M0.8 1L5.5 4.5L10.2 1" stroke="#b09a50" fill="none" stroke-width="0.9"/></svg>
<span id="t72" style="transform:scaleX(0.8590);transform-origin:0 0;position:absolute;left:28.60px;top:496.04px;font-size:9.8px;line-height:10.947px;color:#111;font-weight:bold;white-space:nowrap;font-family:'Liberation Sans', sans-serif;">Trading Signals and copy trading</span>
<span id="t73" style="transform:scaleX(0.8877);transform-origin:0 0;position:absolute;left:564.40px;top:496.04px;font-size:9.8px;line-height:10.947px;color:#111;font-weight:bold;white-space:nowrap;font-family:'Liberation Sans', sans-serif;">Trading Platform</span>
<span id="t74" style="transform:scaleX(0.9308);transform-origin:0 0;position:absolute;left:934.30px;top:496.04px;font-size:9.8px;line-height:10.947px;color:#111;font-weight:bold;white-space:nowrap;font-family:'Liberation Sans', sans-serif;">2022.10.07 15:42</span>
<div style="position:absolute;left:560.5px;top:448px;width:1px;height:61px;background:#d0d0d0"></div>
<div style="position:absolute;left:910px;top:448px;width:1px;height:61px;background:#d0d0d0"></div>
<div style="position:absolute;left:11px;top:508.5px;width:998px;height:1.5px;background:#555"></div>
<div style="position:absolute;left:1009px;top:430px;width:13px;height:79px;background:#f0f0f0"></div>
<svg style="position:absolute;left:1011px;top:434px" width="10" height="7"><path d="M1.5 5L5 1.5L8.5 5" stroke="#444" fill="none" stroke-width="1.2"/></svg>
<div style="position:absolute;left:1010.5px;top:443.5px;width:10px;height:30px;background:#cdcdcd"></div>
<svg style="position:absolute;left:1011px;top:499px" width="10" height="7"><path d="M1.5 2L5 5.5L8.5 2" stroke="#444" fill="none" stroke-width="1.2"/></svg>
<div style="position:absolute;left:264.8px;top:509.5px;width:52px;height:15.5px;background:#fff;border:1px solid #555;border-top:none;box-sizing:border-box"></div>
<span id="t75" style="transform:scaleX(0.8322);transform-origin:0 0;position:absolute;left:21.00px;top:511.34px;font-size:9.8px;line-height:10.947px;color:#7c7c7c;font-weight:normal;white-space:nowrap;font-family:'Liberation Sans', sans-serif;">Trade</span>
<div style="position:absolute;left:50.5px;top:512px;width:1px;height:11px;background:#8a8a8a"></div>
<span id="t76" style="transform:scaleX(0.8746);transform-origin:0 0;position:absolute;left:57.80px;top:511.34px;font-size:9.8px;line-height:10.947px;color:#7c7c7c;font-weight:normal;white-space:nowrap;font-family:'Liberation Sans', sans-serif;">Exposure</span>
<div style="position:absolute;left:101.6px;top:512px;width:1px;height:11px;background:#8a8a8a"></div>
<span id="t77" style="transform:scaleX(0.9488);transform-origin:0 0;position:absolute;left:108.60px;top:511.34px;font-size:9.8px;line-height:10.947px;color:#7c7c7c;font-weight:normal;white-space:nowrap;font-family:'Liberation Sans', sans-serif;">Account History</span>
<div style="position:absolute;left:181.6px;top:512px;width:1px;height:11px;background:#8a8a8a"></div>
<span id="t78" style="transform:scaleX(0.8939);transform-origin:0 0;position:absolute;left:188.30px;top:511.34px;font-size:9.8px;line-height:10.947px;color:#7c7c7c;font-weight:normal;white-space:nowrap;font-family:'Liberation Sans', sans-serif;">News</span>
<span id="t79" style="transform:scaleX(1.1287);transform-origin:0 0;position:absolute;left:211.00px;top:515.87px;font-size:7px;line-height:7.819px;color:#e02020;font-weight:bold;white-space:nowrap;font-family:'Liberation Sans', sans-serif;">99</span>
<div style="position:absolute;left:227px;top:512px;width:1px;height:11px;background:#8a8a8a"></div>
<span id="t80" style="transform:scaleX(0.9023);transform-origin:0 0;position:absolute;left:234.00px;top:511.34px;font-size:9.8px;line-height:10.947px;color:#7c7c7c;font-weight:normal;white-space:nowrap;font-family:'Liberation Sans', sans-serif;">Alerts</span>
<span id="t81" style="transform:scaleX(0.9507);transform-origin:0 0;position:absolute;left:271.70px;top:511.34px;font-size:9.8px;line-height:10.947px;color:#1a1a1a;font-weight:normal;white-space:nowrap;font-family:'Liberation Sans', sans-serif;">Mailbox</span>
<span id="t82" style="transform:scaleX(0.7680);transform-origin:0 0;position:absolute;left:305.00px;top:515.87px;font-size:7px;line-height:7.819px;color:#e02020;font-weight:bold;white-space:nowrap;font-family:'Liberation Sans', sans-serif;">7</span>
<span id="t83" style="transform:scaleX(0.9682);transform-origin:0 0;position:absolute;left:321.40px;top:511.34px;font-size:9.8px;line-height:10.947px;color:#7c7c7c;font-weight:normal;white-space:nowrap;font-family:'Liberation Sans', sans-serif;">Market</span>
<span id="t84" style="transform:scaleX(0.9925);transform-origin:0 0;position:absolute;left:353.30px;top:515.87px;font-size:7px;line-height:7.819px;color:#e02020;font-weight:bold;white-space:nowrap;font-family:'Liberation Sans', sans-serif;">104</span>
<div style="position:absolute;left:372.2px;top:512px;width:1px;height:11px;background:#8a8a8a"></div>
<span id="t85" style="transform:scaleX(0.8463);transform-origin:0 0;position:absolute;left:379.80px;top:511.34px;font-size:9.8px;line-height:10.947px;color:#7c7c7c;font-weight:normal;white-space:nowrap;font-family:'Liberation Sans', sans-serif;">Signals</span>
<div style="position:absolute;left:415.9px;top:512px;width:1px;height:11px;background:#8a8a8a"></div>
<span id="t86" style="transform:scaleX(0.9089);transform-origin:0 0;position:absolute;left:422.30px;top:511.34px;font-size:9.8px;line-height:10.947px;color:#7c7c7c;font-weight:normal;white-space:nowrap;font-family:'Liberation Sans', sans-serif;">Articles</span>
<span id="t87" style="transform:scaleX(0.8960);transform-origin:0 0;position:absolute;left:453.00px;top:515.87px;font-size:7px;line-height:7.819px;color:#e02020;font-weight:bold;white-space:nowrap;font-family:'Liberation Sans', sans-serif;">3</span>
<div style="position:absolute;left:464.5px;top:512px;width:1px;height:11px;background:#8a8a8a"></div>
<span id="t88" style="transform:scaleX(0.8353);transform-origin:0 0;position:absolute;left:472.10px;top:511.34px;font-size:9.8px;line-height:10.947px;color:#7c7c7c;font-weight:normal;white-space:nowrap;font-family:'Liberation Sans', sans-serif;">Code Base</span>
<div style="position:absolute;left:521px;top:512px;width:1px;height:11px;background:#8a8a8a"></div>
<span id="t89" style="transform:scaleX(0.8399);transform-origin:0 0;position:absolute;left:528.60px;top:511.34px;font-size:9.8px;line-height:10.947px;color:#7c7c7c;font-weight:normal;white-space:nowrap;font-family:'Liberation Sans', sans-serif;">Experts</span>
<div style="position:absolute;left:564.7px;top:512px;width:1px;height:11px;background:#8a8a8a"></div>
<span id="t90" style="transform:scaleX(0.8898);transform-origin:0 0;position:absolute;left:571.40px;top:511.34px;font-size:9.8px;line-height:10.947px;color:#7c7c7c;font-weight:normal;white-space:nowrap;font-family:'Liberation Sans', sans-serif;">Journal</span>
<div style="position:absolute;left:607.3px;top:512px;width:1px;height:11px;background:#8a8a8a"></div>
<div style="position:absolute;left:0px;top:527px;width:1024px;height:1px;background:#c9c9c9"></div>
<div style="position:absolute;left:0px;top:528px;width:1024px;height:18px;background:#f0f0f0"></div>
<span id="t91" style="transform:scaleX(0.8444);transform-origin:0 0;position:absolute;left:1.80px;top:533.04px;font-size:9.8px;line-height:10.947px;color:#222;font-weight:normal;white-space:nowrap;font-family:'Liberation Sans', sans-serif;">For Help, press F1</span>
<div style="position:absolute;left:504.3px;top:530px;width:1px;height:15px;background:#c8c8c8"></div>
<div style="position:absolute;left:591.3px;top:530px;width:1px;height:15px;background:#c8c8c8"></div>
<div style="position:absolute;left:667px;top:530px;width:1px;height:15px;background:#c8c8c8"></div>
<div style="position:absolute;left:722px;top:530px;width:1px;height:15px;background:#c8c8c8"></div>
<div style="position:absolute;left:775px;top:530px;width:1px;height:15px;background:#c8c8c8"></div>
<div style="position:absolute;left:825.5px;top:530px;width:1px;height:15px;background:#c8c8c8"></div>
<div style="position:absolute;left:878.2px;top:530px;width:1px;height:15px;background:#c8c8c8"></div>
<div style="position:absolute;left:927px;top:530px;width:1px;height:15px;background:#c8c8c8"></div>
<span id="t92" style="transform:scaleX(0.9276);transform-origin:0 0;position:absolute;left:508.70px;top:533.04px;font-size:9.8px;line-height:10.947px;color:#222;font-weight:normal;white-space:nowrap;font-family:'Liberation Sans', sans-serif;">Default</span>
<span id="t93" style="transform:scaleX(0.8758);transform-origin:0 0;position:absolute;left:952.00px;top:533.04px;font-size:9.8px;line-height:10.947px;color:#222;font-weight:normal;white-space:nowrap;font-family:'Liberation Sans', sans-serif;">2785/2 kb</span>
<div style="position:absolute;left:931.8px;top:533px;width:1.5px;height:8.0px;background:#7a9a2a"></div>
<div style="position:absolute;left:931.8px;top:541.0px;width:1.5px;height:2.0px;background:#2e4a60"></div>
<div style="position:absolute;left:934.0px;top:533px;width:1.5px;height:6.95px;background:#7a9a2a"></div>
<div style="position:absolute;left:934.0px;top:539.95px;width:1.5px;height:3.05px;background:#2e4a60"></div>
<div style="position:absolute;left:936.1999999999999px;top:533px;width:1.5px;height:5.9px;background:#7a9a2a"></div>
<div style="position:absolute;left:936.1999999999999px;top:538.9px;width:1.5px;height:4.1px;background:#2e4a60"></div>
<div style="position:absolute;left:938.4px;top:533px;width:1.5px;height:4.85px;background:#7a9a2a"></div>
<div style="position:absolute;left:938.4px;top:537.85px;width:1.5px;height:5.15px;background:#2e4a60"></div>
<div style="position:absolute;left:940.5999999999999px;top:533px;width:1.5px;height:3.8px;background:#7a9a2a"></div>
<div style="position:absolute;left:940.5999999999999px;top:536.8px;width:1.5px;height:6.2px;background:#2e4a60"></div>
<div style="position:absolute;left:942.8px;top:533px;width:1.5px;height:2.75px;background:#7a9a2a"></div>
<div style="position:absolute;left:942.8px;top:535.75px;width:1.5px;height:7.25px;background:#2e4a60"></div>
<div style="position:absolute;left:945.0px;top:533px;width:1.5px;height:1.6999999999999993px;background:#7a9a2a"></div>
<div style="position:absolute;left:945.0px;top:534.7px;width:1.5px;height:8.3px;background:#2e4a60"></div>
<div style="position:absolute;left:947.1999999999999px;top:533px;width:1.5px;height:0.6499999999999986px;background:#7a9a2a"></div>
<div style="position:absolute;left:947.1999999999999px;top:533.65px;width:1.5px;height:9.350000000000001px;background:#2e4a60"></div>
<svg style="position:absolute;left:0;top:0" width="1024" height="546" shape-rendering="crispEdges"><line x1="175.5" y1="101" x2="175.5" y2="219" stroke="#6a7484" stroke-width="1" stroke-dasharray="2,2.5"/><line x1="199.5" y1="101" x2="199.5" y2="219" stroke="#6a7484" stroke-width="1" stroke-dasharray="2,2.5"/><line x1="223.5" y1="101" x2="223.5" y2="219" stroke="#6a7484" stroke-width="1" stroke-dasharray="2,2.5"/><line x1="247.5" y1="101" x2="247.5" y2="219" stroke="#6a7484" stroke-width="1" stroke-dasharray="2,2.5"/><line x1="271.5" y1="101" x2="271.5" y2="219" stroke="#6a7484" stroke-width="1" stroke-dasharray="2,2.5"/><line x1="295.5" y1="101" x2="295.5" y2="219" stroke="#6a7484" stroke-width="1" stroke-dasharray="2,2.5"/><line x1="319.5" y1="101" x2="319.5" y2="219" stroke="#6a7484" stroke-width="1" stroke-dasharray="2,2.5"/><line x1="343.5" y1="101" x2="343.5" y2="219" stroke="#6a7484" stroke-width="1" stroke-dasharray="2,2.5"/><line x1="367.5" y1="101" x2="367.5" y2="219" stroke="#6a7484" stroke-width="1" stroke-dasharray="2,2.5"/><line x1="391.5" y1="101" x2="391.5" y2="219" stroke="#6a7484" stroke-width="1" stroke-dasharray="2,2.5"/><line x1="415.5" y1="101" x2="415.5" y2="219" stroke="#6a7484" stroke-width="1" stroke-dasharray="2,2.5"/><line x1="439.5" y1="101" x2="439.5" y2="219" stroke="#6a7484" stroke-width="1" stroke-dasharray="2,2.5"/><line x1="463.5" y1="101" x2="463.5" y2="219" stroke="#6a7484" stroke-width="1" stroke-dasharray="2,2.5"/><line x1="487.5" y1="101" x2="487.5" y2="219" stroke="#6a7484" stroke-width="1" stroke-dasharray="2,2.5"/><line x1="511.5" y1="101" x2="511.5" y2="219" stroke="#6a7484" stroke-width="1" stroke-dasharray="2,2.5"/><line x1="535.5" y1="101" x2="535.5" y2="219" stroke="#6a7484" stroke-width="1" stroke-dasharray="2,2.5"/><line x1="152" y1="116.5" x2="540" y2="116.5" stroke="#6a7484" stroke-width="1" stroke-dasharray="2,2.5"/><line x1="152" y1="141.5" x2="540" y2="141.5" stroke="#6a7484" stroke-width="1" stroke-dasharray="2,2.5"/><line x1="152" y1="166.5" x2="540" y2="166.5" stroke="#6a7484" stroke-width="1" stroke-dasharray="2,2.5"/><line x1="152" y1="191.5" x2="540" y2="191.5" stroke="#6a7484" stroke-width="1" stroke-dasharray="2,2.5"/><line x1="152" y1="216.5" x2="540" y2="216.5" stroke="#6a7484" stroke-width="1" stroke-dasharray="2,2.5"/><rect x="151.5" y="100.5" width="389" height="119" fill="none" stroke="#c8c8c8" stroke-width="1"/><rect x="151" y="167" width="390" height="1" fill="#8c8c8c"/><rect x="151" y="147" width="2" height="9" fill="#009a00"/><rect x="150" y="147" width="4" height="10" fill="#00ff00"/><rect x="151" y="148" width="2" height="8" fill="#fff"/><rect x="157" y="152" width="2" height="20" fill="#009a00"/><rect x="156" y="154" width="4" height="17" fill="#00ff00"/><rect x="157" y="155" width="2" height="15" fill="#fff"/><rect x="163" y="166" width="2" height="6" fill="#009a00"/><rect x="162" y="170" width="4" height="3" fill="#00ff00"/><rect x="163" y="171" width="2" height="1" fill="#000"/><rect x="169" y="171" width="2" height="20" fill="#009a00"/><rect x="168" y="171" width="4" height="11" fill="#00ff00"/><rect x="169" y="172" width="2" height="9" fill="#fff"/><rect x="175" y="175" width="2" height="17" fill="#009a00"/><rect x="174" y="181" width="4" height="4" fill="#00ff00"/><rect x="175" y="182" width="2" height="2" fill="#fff"/><rect x="181" y="166" width="2" height="17" fill="#009a00"/><rect x="180" y="173" width="4" height="11" fill="#00ff00"/><rect x="181" y="174" width="2" height="9" fill="#000"/><rect x="187" y="164" width="2" height="14" fill="#009a00"/><rect x="186" y="170" width="4" height="5" fill="#00ff00"/><rect x="187" y="171" width="2" height="3" fill="#000"/><rect x="193" y="150" width="2" height="20" fill="#009a00"/><rect x="192" y="162" width="4" height="9" fill="#00ff00"/><rect x="193" y="163" width="2" height="7" fill="#000"/><rect x="199" y="152" width="2" height="17" fill="#009a00"/><rect x="198" y="160" width="4" height="6" fill="#00ff00"/><rect x="199" y="161" width="2" height="4" fill="#fff"/><rect x="205" y="158" width="2" height="18" fill="#009a00"/><rect x="204" y="158" width="4" height="9" fill="#00ff00"/><rect x="205" y="159" width="2" height="7" fill="#000"/><rect x="211" y="155" width="2" height="8" fill="#009a00"/><rect x="210" y="158" width="4" height="6" fill="#00ff00"/><rect x="211" y="159" width="2" height="4" fill="#fff"/><rect x="217" y="164" width="2" height="15" fill="#009a00"/><rect x="216" y="164" width="4" height="9" fill="#00ff00"/><rect x="217" y="165" width="2" height="7" fill="#fff"/><rect x="223" y="173" width="2" height="12" fill="#009a00"/><rect x="222" y="173" width="4" height="13" fill="#00ff00"/><rect x="223" y="174" width="2" height="11" fill="#fff"/><rect x="229" y="183" width="2" height="6" fill="#009a00"/><rect x="228" y="183" width="4" height="3" fill="#00ff00"/><rect x="229" y="184" width="2" height="1" fill="#000"/><rect x="235" y="176" width="2" height="13" fill="#009a00"/><rect x="234" y="183" width="4" height="4" fill="#00ff00"/><rect x="235" y="184" width="2" height="2" fill="#fff"/><rect x="241" y="189" width="2" height="17" fill="#009a00"/><rect x="240" y="189" width="4" height="14" fill="#00ff00"/><rect x="241" y="190" width="2" height="12" fill="#fff"/><rect x="247" y="199" width="2" height="17" fill="#009a00"/><rect x="246" y="199" width="4" height="13" fill="#00ff00"/><rect x="247" y="200" width="2" height="11" fill="#fff"/><rect x="253" y="193" width="2" height="20" fill="#009a00"/><rect x="252" y="199" width="4" height="14" fill="#00ff00"/><rect x="253" y="200" width="2" height="12" fill="#000"/><rect x="259" y="187" width="2" height="14" fill="#009a00"/><rect x="258" y="187" width="4" height="10" fill="#00ff00"/><rect x="259" y="188" width="2" height="8" fill="#000"/><rect x="265" y="187" width="2" height="16" fill="#009a00"/><rect x="264" y="187" width="4" height="10" fill="#00ff00"/><rect x="265" y="188" width="2" height="8" fill="#fff"/><rect x="271" y="191" width="2" height="11" fill="#009a00"/><rect x="270" y="194" width="4" height="6" fill="#00ff00"/><rect x="271" y="195" width="2" height="4" fill="#fff"/><rect x="277" y="194" width="2" height="12" fill="#009a00"/><rect x="276" y="198" width="4" height="3" fill="#00ff00"/><rect x="277" y="199" width="2" height="1" fill="#000"/><rect x="283" y="171" width="2" height="41" fill="#009a00"/><rect x="282" y="184" width="4" height="19" fill="#00ff00"/><rect x="283" y="185" width="2" height="17" fill="#000"/><rect x="289" y="182" width="2" height="12" fill="#009a00"/><rect x="288" y="182" width="4" height="9" fill="#00ff00"/><rect x="289" y="183" width="2" height="7" fill="#fff"/><rect x="295" y="189" width="2" height="13" fill="#009a00"/><rect x="294" y="189" width="4" height="10" fill="#00ff00"/><rect x="295" y="190" width="2" height="8" fill="#fff"/><rect x="301" y="193" width="2" height="11" fill="#009a00"/><rect x="300" y="197" width="4" height="6" fill="#00ff00"/><rect x="301" y="198" width="2" height="4" fill="#fff"/><rect x="307" y="184" width="2" height="18" fill="#009a00"/><rect x="306" y="184" width="4" height="19" fill="#00ff00"/><rect x="307" y="185" width="2" height="17" fill="#000"/><rect x="313" y="178" width="2" height="25" fill="#009a00"/><rect x="312" y="184" width="4" height="7" fill="#00ff00"/><rect x="313" y="185" width="2" height="5" fill="#fff"/><rect x="319" y="176" width="2" height="14" fill="#009a00"/><rect x="318" y="181" width="4" height="10" fill="#00ff00"/><rect x="319" y="182" width="2" height="8" fill="#000"/><rect x="325" y="172" width="2" height="15" fill="#009a00"/><rect x="324" y="180" width="4" height="7" fill="#00ff00"/><rect x="325" y="181" width="2" height="5" fill="#fff"/><rect x="331" y="173" width="2" height="15" fill="#009a00"/><rect x="330" y="173" width="4" height="12" fill="#00ff00"/><rect x="331" y="174" width="2" height="10" fill="#000"/><rect x="337" y="174" width="2" height="8" fill="#009a00"/><rect x="336" y="174" width="4" height="6" fill="#00ff00"/><rect x="337" y="175" width="2" height="4" fill="#fff"/><rect x="343" y="152" width="2" height="27" fill="#009a00"/><rect x="342" y="158" width="4" height="22" fill="#00ff00"/><rect x="343" y="159" width="2" height="20" fill="#000"/><rect x="349" y="108" width="2" height="50" fill="#009a00"/><rect x="348" y="128" width="4" height="31" fill="#00ff00"/><rect x="349" y="129" width="2" height="29" fill="#000"/><rect x="355" y="122" width="2" height="28" fill="#009a00"/><rect x="354" y="129" width="4" height="22" fill="#00ff00"/><rect x="355" y="130" width="2" height="20" fill="#fff"/><rect x="361" y="144" width="2" height="18" fill="#009a00"/><rect x="360" y="147" width="4" height="4" fill="#00ff00"/><rect x="361" y="148" width="2" height="2" fill="#fff"/><rect x="367" y="146" width="2" height="20" fill="#009a00"/><rect x="366" y="150" width="4" height="9" fill="#00ff00"/><rect x="367" y="151" width="2" height="7" fill="#fff"/><rect x="373" y="137" width="2" height="19" fill="#009a00"/><rect x="372" y="141" width="4" height="16" fill="#00ff00"/><rect x="373" y="142" width="2" height="14" fill="#000"/><rect x="379" y="134" width="2" height="16" fill="#009a00"/><rect x="378" y="141" width="4" height="5" fill="#00ff00"/><rect x="379" y="142" width="2" height="3" fill="#fff"/><rect x="385" y="144" width="2" height="16" fill="#009a00"/><rect x="384" y="144" width="4" height="15" fill="#00ff00"/><rect x="385" y="145" width="2" height="13" fill="#fff"/><rect x="391" y="155" width="2" height="4" fill="#009a00"/><rect x="390" y="155" width="4" height="4" fill="#00ff00"/><rect x="391" y="156" width="2" height="2" fill="#000"/><rect x="397" y="150" width="2" height="13" fill="#009a00"/><rect x="396" y="155" width="4" height="3" fill="#00ff00"/><rect x="397" y="156" width="2" height="1" fill="#fff"/><rect x="403" y="154" width="2" height="20" fill="#009a00"/><rect x="402" y="156" width="4" height="19" fill="#00ff00"/><rect x="403" y="157" width="2" height="17" fill="#fff"/><rect x="409" y="174" width="2" height="10" fill="#009a00"/><rect x="408" y="174" width="4" height="3" fill="#00ff00"/><rect x="409" y="175" width="2" height="1" fill="#fff"/><rect x="415" y="160" width="2" height="15" fill="#009a00"/><rect x="414" y="170" width="4" height="6" fill="#00ff00"/><rect x="415" y="171" width="2" height="4" fill="#000"/><rect x="421" y="160" width="2" height="15" fill="#009a00"/><rect x="420" y="170" width="4" height="5" fill="#00ff00"/><rect x="421" y="171" width="2" height="3" fill="#fff"/><rect x="427" y="163" width="2" height="16" fill="#009a00"/><rect x="426" y="173" width="4" height="3" fill="#00ff00"/><rect x="427" y="174" width="2" height="1" fill="#fff"/><rect x="433" y="165" width="2" height="10" fill="#009a00"/><rect x="432" y="171" width="4" height="5" fill="#00ff00"/><rect x="433" y="172" width="2" height="3" fill="#000"/><rect x="439" y="158" width="2" height="16" fill="#009a00"/><rect x="438" y="158" width="4" height="14" fill="#00ff00"/><rect x="439" y="159" width="2" height="12" fill="#000"/><rect x="445" y="158" width="2" height="28" fill="#009a00"/><rect x="444" y="158" width="4" height="29" fill="#00ff00"/><rect x="445" y="159" width="2" height="27" fill="#fff"/><rect x="451" y="179" width="2" height="7" fill="#009a00"/><rect x="450" y="181" width="4" height="6" fill="#00ff00"/><rect x="451" y="182" width="2" height="4" fill="#000"/><rect x="457" y="177" width="2" height="9" fill="#009a00"/><rect x="456" y="181" width="4" height="2" fill="#00ff00"/><rect x="463" y="159" width="2" height="26" fill="#009a00"/><rect x="462" y="162" width="4" height="21" fill="#00ff00"/><rect x="463" y="163" width="2" height="19" fill="#000"/><rect x="469" y="163" width="2" height="22" fill="#009a00"/><rect x="468" y="163" width="4" height="20" fill="#00ff00"/><rect x="469" y="164" width="2" height="18" fill="#fff"/><rect x="475" y="171" width="2" height="14" fill="#009a00"/><rect x="474" y="171" width="4" height="12" fill="#00ff00"/><rect x="475" y="172" width="2" height="10" fill="#000"/><rect x="481" y="172" width="2" height="12" fill="#009a00"/><rect x="480" y="172" width="4" height="3" fill="#00ff00"/><rect x="481" y="173" width="2" height="1" fill="#fff"/><rect x="487" y="165" width="2" height="19" fill="#009a00"/><rect x="486" y="174" width="4" height="8" fill="#00ff00"/><rect x="487" y="175" width="2" height="6" fill="#fff"/><rect x="493" y="178" width="2" height="10" fill="#009a00"/><rect x="492" y="178" width="4" height="5" fill="#00ff00"/><rect x="493" y="179" width="2" height="3" fill="#000"/><rect x="499" y="180" width="2" height="7" fill="#009a00"/><rect x="498" y="180" width="4" height="3" fill="#00ff00"/><rect x="499" y="181" width="2" height="1" fill="#fff"/><rect x="505" y="179" width="2" height="10" fill="#009a00"/><rect x="504" y="182" width="4" height="4" fill="#00ff00"/><rect x="505" y="183" width="2" height="2" fill="#fff"/><rect x="511" y="175" width="2" height="12" fill="#009a00"/><rect x="510" y="175" width="4" height="11" fill="#00ff00"/><rect x="511" y="176" width="2" height="9" fill="#000"/><rect x="517" y="176" width="2" height="14" fill="#009a00"/><rect x="516" y="176" width="4" height="8" fill="#00ff00"/><rect x="517" y="177" width="2" height="6" fill="#fff"/><rect x="523" y="166" width="2" height="21" fill="#009a00"/><rect x="522" y="166" width="4" height="19" fill="#00ff00"/><rect x="523" y="167" width="2" height="17" fill="#000"/><line x1="615.5" y1="101" x2="615.5" y2="219" stroke="#6a7484" stroke-width="1" stroke-dasharray="2,2.5"/><line x1="639.5" y1="101" x2="639.5" y2="219" stroke="#6a7484" stroke-width="1" stroke-dasharray="2,2.5"/><line x1="663.5" y1="101" x2="663.5" y2="219" stroke="#6a7484" stroke-width="1" stroke-dasharray="2,2.5"/><line x1="687.5" y1="101" x2="687.5" y2="219" stroke="#6a7484" stroke-width="1" stroke-dasharray="2,2.5"/><line x1="711.5" y1="101" x2="711.5" y2="219" stroke="#6a7484" stroke-width="1" stroke-dasharray="2,2.5"/><line x1="735.5" y1="101" x2="735.5" y2="219" stroke="#6a7484" stroke-width="1" stroke-dasharray="2,2.5"/><line x1="759.5" y1="101" x2="759.5" y2="219" stroke="#6a7484" stroke-width="1" stroke-dasharray="2,2.5"/><line x1="783.5" y1="101" x2="783.5" y2="219" stroke="#6a7484" stroke-width="1" stroke-dasharray="2,2.5"/><line x1="807.5" y1="101" x2="807.5" y2="219" stroke="#6a7484" stroke-width="1" stroke-dasharray="2,2.5"/><line x1="831.5" y1="101" x2="831.5" y2="219" stroke="#6a7484" stroke-width="1" stroke-dasharray="2,2.5"/><line x1="855.5" y1="101" x2="855.5" y2="219" stroke="#6a7484" stroke-width="1" stroke-dasharray="2,2.5"/><line x1="879.5" y1="101" x2="879.5" y2="219" stroke="#6a7484" stroke-width="1" stroke-dasharray="2,2.5"/><line x1="903.5" y1="101" x2="903.5" y2="219" stroke="#6a7484" stroke-width="1" stroke-dasharray="2,2.5"/><line x1="927.5" y1="101" x2="927.5" y2="219" stroke="#6a7484" stroke-width="1" stroke-dasharray="2,2.5"/><line x1="951.5" y1="101" x2="951.5" y2="219" stroke="#6a7484" stroke-width="1" stroke-dasharray="2,2.5"/><line x1="975.5" y1="101" x2="975.5" y2="219" stroke="#6a7484" stroke-width="1" stroke-dasharray="2,2.5"/><line x1="592" y1="112.5" x2="980" y2="112.5" stroke="#6a7484" stroke-width="1" stroke-dasharray="2,2.5"/><line x1="592" y1="138.5" x2="980" y2="138.5" stroke="#6a7484" stroke-width="1" stroke-dasharray="2,2.5"/><line x1="592" y1="164.5" x2="980" y2="164.5" stroke="#6a7484" stroke-width="1" stroke-dasharray="2,2.5"/><line x1="592" y1="190.5" x2="980" y2="190.5" stroke="#6a7484" stroke-width="1" stroke-dasharray="2,2.5"/><line x1="592" y1="215.5" x2="980" y2="215.5" stroke="#6a7484" stroke-width="1" stroke-dasharray="2,2.5"/><rect x="591.5" y="100.5" width="389.5" height="119" fill="none" stroke="#c8c8c8" stroke-width="1"/><rect x="591" y="146" width="390" height="1" fill="#8c8c8c"/><rect x="591" y="193" width="2" height="9" fill="#009a00"/><rect x="590" y="193" width="4" height="10" fill="#00ff00"/><rect x="591" y="194" width="2" height="8" fill="#000"/><rect x="597" y="186" width="2" height="11" fill="#009a00"/><rect x="596" y="188" width="4" height="7" fill="#00ff00"/><rect x="597" y="189" width="2" height="5" fill="#000"/><rect x="603" y="185" width="2" height="5" fill="#009a00"/><rect x="602" y="188" width="4" height="3" fill="#00ff00"/><rect x="603" y="189" width="2" height="1" fill="#000"/><rect x="609" y="185" width="2" height="19" fill="#009a00"/><rect x="608" y="189" width="4" height="13" fill="#00ff00"/><rect x="609" y="190" width="2" height="11" fill="#fff"/><rect x="615" y="177" width="2" height="24" fill="#009a00"/><rect x="614" y="180" width="4" height="22" fill="#00ff00"/><rect x="615" y="181" width="2" height="20" fill="#000"/><rect x="621" y="175" width="2" height="7" fill="#009a00"/><rect x="620" y="180" width="4" height="3" fill="#00ff00"/><rect x="621" y="181" width="2" height="1" fill="#fff"/><rect x="627" y="165" width="2" height="20" fill="#009a00"/><rect x="626" y="175" width="4" height="8" fill="#00ff00"/><rect x="627" y="176" width="2" height="6" fill="#000"/><rect x="633" y="175" width="2" height="10" fill="#009a00"/><rect x="632" y="175" width="4" height="11" fill="#00ff00"/><rect x="633" y="176" width="2" height="9" fill="#fff"/><rect x="639" y="168" width="2" height="20" fill="#009a00"/><rect x="638" y="171" width="4" height="15" fill="#00ff00"/><rect x="639" y="172" width="2" height="13" fill="#000"/><rect x="645" y="153" width="2" height="18" fill="#009a00"/><rect x="644" y="160" width="4" height="12" fill="#00ff00"/><rect x="645" y="161" width="2" height="10" fill="#000"/><rect x="651" y="159" width="2" height="7" fill="#009a00"/><rect x="650" y="163" width="4" height="2" fill="#00ff00"/><rect x="657" y="154" width="2" height="12" fill="#009a00"/><rect x="656" y="159" width="4" height="7" fill="#00ff00"/><rect x="657" y="160" width="2" height="5" fill="#000"/><rect x="663" y="112" width="2" height="48" fill="#009a00"/><rect x="662" y="116" width="4" height="45" fill="#00ff00"/><rect x="663" y="117" width="2" height="43" fill="#000"/><rect x="669" y="109" width="2" height="43" fill="#009a00"/><rect x="668" y="118" width="4" height="24" fill="#00ff00"/><rect x="669" y="119" width="2" height="22" fill="#fff"/><rect x="675" y="137" width="2" height="7" fill="#009a00"/><rect x="674" y="140" width="4" height="3" fill="#00ff00"/><rect x="675" y="141" width="2" height="1" fill="#000"/><rect x="681" y="124" width="2" height="21" fill="#009a00"/><rect x="680" y="124" width="4" height="21" fill="#00ff00"/><rect x="681" y="125" width="2" height="19" fill="#000"/><rect x="687" y="118" width="2" height="10" fill="#009a00"/><rect x="686" y="126" width="4" height="2" fill="#00ff00"/><rect x="693" y="120" width="2" height="10" fill="#009a00"/><rect x="692" y="124" width="4" height="3" fill="#00ff00"/><rect x="693" y="125" width="2" height="1" fill="#000"/><rect x="699" y="109" width="2" height="17" fill="#009a00"/><rect x="698" y="124" width="4" height="2" fill="#00ff00"/><rect x="705" y="123" width="2" height="23" fill="#009a00"/><rect x="704" y="123" width="4" height="24" fill="#00ff00"/><rect x="705" y="124" width="2" height="22" fill="#fff"/><rect x="711" y="137" width="2" height="15" fill="#009a00"/><rect x="710" y="141" width="4" height="6" fill="#00ff00"/><rect x="711" y="142" width="2" height="4" fill="#000"/><rect x="717" y="131" width="2" height="13" fill="#009a00"/><rect x="716" y="131" width="4" height="12" fill="#00ff00"/><rect x="717" y="132" width="2" height="10" fill="#000"/><rect x="723" y="123" width="2" height="13" fill="#009a00"/><rect x="722" y="126" width="4" height="7" fill="#00ff00"/><rect x="723" y="127" width="2" height="5" fill="#000"/><rect x="729" y="128" width="2" height="10" fill="#009a00"/><rect x="728" y="128" width="4" height="9" fill="#00ff00"/><rect x="729" y="129" width="2" height="7" fill="#fff"/><rect x="735" y="131" width="2" height="6" fill="#009a00"/><rect x="734" y="131" width="4" height="6" fill="#00ff00"/><rect x="735" y="132" width="2" height="4" fill="#000"/><rect x="741" y="121" width="2" height="10" fill="#009a00"/><rect x="740" y="122" width="4" height="10" fill="#00ff00"/><rect x="741" y="123" width="2" height="8" fill="#000"/><rect x="747" y="123" width="2" height="12" fill="#009a00"/><rect x="746" y="123" width="4" height="11" fill="#00ff00"/><rect x="747" y="124" width="2" height="9" fill="#fff"/><rect x="753" y="134" width="2" height="14" fill="#009a00"/><rect x="752" y="134" width="4" height="13" fill="#00ff00"/><rect x="753" y="135" width="2" height="11" fill="#fff"/><rect x="759" y="147" width="2" height="23" fill="#009a00"/><rect x="758" y="147" width="4" height="19" fill="#00ff00"/><rect x="759" y="148" width="2" height="17" fill="#fff"/><rect x="765" y="160" width="2" height="8" fill="#009a00"/><rect x="764" y="160" width="4" height="8" fill="#00ff00"/><rect x="765" y="161" width="2" height="6" fill="#000"/><rect x="771" y="156" width="2" height="7" fill="#009a00"/><rect x="770" y="159" width="4" height="2" fill="#00ff00"/><rect x="777" y="157" width="2" height="18" fill="#009a00"/><rect x="776" y="160" width="4" height="16" fill="#00ff00"/><rect x="777" y="161" width="2" height="14" fill="#fff"/><rect x="783" y="174" width="2" height="14" fill="#009a00"/><rect x="782" y="176" width="4" height="6" fill="#00ff00"/><rect x="783" y="177" width="2" height="4" fill="#fff"/><rect x="789" y="175" width="2" height="27" fill="#009a00"/><rect x="788" y="183" width="4" height="20" fill="#00ff00"/><rect x="789" y="184" width="2" height="18" fill="#fff"/><rect x="795" y="193" width="2" height="21" fill="#009a00"/><rect x="794" y="199" width="4" height="5" fill="#00ff00"/><rect x="795" y="200" width="2" height="3" fill="#fff"/><rect x="801" y="185" width="2" height="16" fill="#009a00"/><rect x="800" y="195" width="4" height="7" fill="#00ff00"/><rect x="801" y="196" width="2" height="5" fill="#000"/><rect x="807" y="174" width="2" height="25" fill="#009a00"/><rect x="806" y="174" width="4" height="26" fill="#00ff00"/><rect x="807" y="175" width="2" height="24" fill="#000"/><rect x="813" y="175" width="2" height="11" fill="#009a00"/><rect x="812" y="175" width="4" height="6" fill="#00ff00"/><rect x="813" y="176" width="2" height="4" fill="#fff"/><rect x="819" y="167" width="2" height="16" fill="#009a00"/><rect x="818" y="180" width="4" height="2" fill="#00ff00"/><rect x="825" y="159" width="2" height="21" fill="#009a00"/><rect x="824" y="166" width="4" height="15" fill="#00ff00"/><rect x="825" y="167" width="2" height="13" fill="#000"/><rect x="831" y="150" width="2" height="14" fill="#009a00"/><rect x="830" y="150" width="4" height="15" fill="#00ff00"/><rect x="831" y="151" width="2" height="13" fill="#000"/><rect x="837" y="139" width="2" height="14" fill="#009a00"/><rect x="836" y="139" width="4" height="11" fill="#00ff00"/><rect x="837" y="140" width="2" height="9" fill="#000"/><rect x="843" y="118" width="2" height="25" fill="#009a00"/><rect x="842" y="126" width="4" height="15" fill="#00ff00"/><rect x="843" y="127" width="2" height="13" fill="#000"/><rect x="849" y="122" width="2" height="19" fill="#009a00"/><rect x="848" y="125" width="4" height="15" fill="#00ff00"/><rect x="849" y="126" width="2" height="13" fill="#fff"/><rect x="855" y="134" width="2" height="11" fill="#009a00"/><rect x="854" y="138" width="4" height="8" fill="#00ff00"/><rect x="855" y="139" width="2" height="6" fill="#fff"/><rect x="861" y="135" width="2" height="13" fill="#009a00"/><rect x="860" y="135" width="4" height="11" fill="#00ff00"/><rect x="861" y="136" width="2" height="9" fill="#000"/><rect x="867" y="126" width="2" height="18" fill="#009a00"/><rect x="866" y="131" width="4" height="5" fill="#00ff00"/><rect x="867" y="132" width="2" height="3" fill="#000"/><rect x="873" y="126" width="2" height="8" fill="#009a00"/><rect x="872" y="130" width="4" height="2" fill="#00ff00"/><rect x="879" y="126" width="2" height="7" fill="#009a00"/><rect x="878" y="130" width="4" height="2" fill="#00ff00"/><rect x="885" y="109" width="2" height="23" fill="#009a00"/><rect x="884" y="109" width="4" height="24" fill="#00ff00"/><rect x="885" y="110" width="2" height="22" fill="#000"/><rect x="891" y="109" width="2" height="20" fill="#009a00"/><rect x="890" y="109" width="4" height="18" fill="#00ff00"/><rect x="891" y="110" width="2" height="16" fill="#fff"/><rect x="897" y="128" width="2" height="13" fill="#009a00"/><rect x="896" y="128" width="4" height="10" fill="#00ff00"/><rect x="897" y="129" width="2" height="8" fill="#fff"/><rect x="903" y="132" width="2" height="13" fill="#009a00"/><rect x="902" y="137" width="4" height="2" fill="#00ff00"/><rect x="909" y="126" width="2" height="19" fill="#009a00"/><rect x="908" y="130" width="4" height="7" fill="#00ff00"/><rect x="909" y="131" width="2" height="5" fill="#000"/><rect x="915" y="126" width="2" height="12" fill="#009a00"/><rect x="914" y="129" width="4" height="4" fill="#00ff00"/><rect x="915" y="130" width="2" height="2" fill="#fff"/><rect x="921" y="122" width="2" height="12" fill="#009a00"/><rect x="920" y="132" width="4" height="3" fill="#00ff00"/><rect x="921" y="133" width="2" height="1" fill="#000"/><rect x="927" y="126" width="2" height="9" fill="#009a00"/><rect x="926" y="132" width="4" height="4" fill="#00ff00"/><rect x="927" y="133" width="2" height="2" fill="#000"/><rect x="933" y="122" width="2" height="12" fill="#009a00"/><rect x="932" y="130" width="4" height="2" fill="#00ff00"/><rect x="939" y="119" width="2" height="12" fill="#009a00"/><rect x="938" y="129" width="4" height="3" fill="#00ff00"/><rect x="939" y="130" width="2" height="1" fill="#000"/><rect x="945" y="125" width="2" height="15" fill="#009a00"/><rect x="944" y="132" width="4" height="4" fill="#00ff00"/><rect x="945" y="133" width="2" height="2" fill="#fff"/><rect x="951" y="135" width="2" height="11" fill="#009a00"/><rect x="950" y="135" width="4" height="12" fill="#00ff00"/><rect x="951" y="136" width="2" height="10" fill="#fff"/><rect x="957" y="137" width="2" height="9" fill="#009a00"/><rect x="956" y="145" width="4" height="2" fill="#00ff00"/><rect x="963" y="132" width="2" height="14" fill="#009a00"/><rect x="962" y="143" width="4" height="4" fill="#00ff00"/><rect x="963" y="144" width="2" height="2" fill="#fff"/></svg>
<svg style="position:absolute;left:0;top:0" width="1024" height="546"><line x1="175.5" y1="269" x2="175.5" y2="347" stroke="#6a7484" stroke-dasharray="2,2.5"/><line x1="175.5" y1="350" x2="175.5" y2="387" stroke="#6a7484" stroke-dasharray="2,2.5"/><line x1="199.5" y1="269" x2="199.5" y2="347" stroke="#6a7484" stroke-dasharray="2,2.5"/><line x1="199.5" y1="350" x2="199.5" y2="387" stroke="#6a7484" stroke-dasharray="2,2.5"/><line x1="223.5" y1="269" x2="223.5" y2="347" stroke="#6a7484" stroke-dasharray="2,2.5"/><line x1="223.5" y1="350" x2="223.5" y2="387" stroke="#6a7484" stroke-dasharray="2,2.5"/><line x1="247.5" y1="269" x2="247.5" y2="347" stroke="#6a7484" stroke-dasharray="2,2.5"/><line x1="247.5" y1="350" x2="247.5" y2="387" stroke="#6a7484" stroke-dasharray="2,2.5"/><line x1="271.5" y1="269" x2="271.5" y2="347" stroke="#6a7484" stroke-dasharray="2,2.5"/><line x1="271.5" y1="350" x2="271.5" y2="387" stroke="#6a7484" stroke-dasharray="2,2.5"/><line x1="295.5" y1="269" x2="295.5" y2="347" stroke="#6a7484" stroke-dasharray="2,2.5"/><line x1="295.5" y1="350" x2="295.5" y2="387" stroke="#6a7484" stroke-dasharray="2,2.5"/><line x1="319.5" y1="269" x2="319.5" y2="347" stroke="#6a7484" stroke-dasharray="2,2.5"/><line x1="319.5" y1="350" x2="319.5" y2="387" stroke="#6a7484" stroke-dasharray="2,2.5"/><line x1="343.5" y1="269" x2="343.5" y2="347" stroke="#6a7484" stroke-dasharray="2,2.5"/><line x1="343.5" y1="350" x2="343.5" y2="387" stroke="#6a7484" stroke-dasharray="2,2.5"/><line x1="367.5" y1="269" x2="367.5" y2="347" stroke="#6a7484" stroke-dasharray="2,2.5"/><line x1="367.5" y1="350" x2="367.5" y2="387" stroke="#6a7484" stroke-dasharray="2,2.5"/><line x1="391.5" y1="269" x2="391.5" y2="347" stroke="#6a7484" stroke-dasharray="2,2.5"/><line x1="391.5" y1="350" x2="391.5" y2="387" stroke="#6a7484" stroke-dasharray="2,2.5"/><line x1="415.5" y1="269" x2="415.5" y2="347" stroke="#6a7484" stroke-dasharray="2,2.5"/><line x1="415.5" y1="350" x2="415.5" y2="387" stroke="#6a7484" stroke-dasharray="2,2.5"/><line x1="439.5" y1="269" x2="439.5" y2="347" stroke="#6a7484" stroke-dasharray="2,2.5"/><line x1="439.5" y1="350" x2="439.5" y2="387" stroke="#6a7484" stroke-dasharray="2,2.5"/><line x1="463.5" y1="269" x2="463.5" y2="347" stroke="#6a7484" stroke-dasharray="2,2.5"/><line x1="463.5" y1="350" x2="463.5" y2="387" stroke="#6a7484" stroke-dasharray="2,2.5"/><line x1="487.5" y1="269" x2="487.5" y2="347" stroke="#6a7484" stroke-dasharray="2,2.5"/><line x1="487.5" y1="350" x2="487.5" y2="387" stroke="#6a7484" stroke-dasharray="2,2.5"/><line x1="511.5" y1="269" x2="511.5" y2="347" stroke="#6a7484" stroke-dasharray="2,2.5"/><line x1="511.5" y1="350" x2="511.5" y2="387" stroke="#6a7484" stroke-dasharray="2,2.5"/><line x1="535.5" y1="269" x2="535.5" y2="347" stroke="#6a7484" stroke-dasharray="2,2.5"/><line x1="535.5" y1="350" x2="535.5" y2="387" stroke="#6a7484" stroke-dasharray="2,2.5"/><line x1="152" y1="271" x2="540" y2="271" stroke="#6a7484" stroke-dasharray="2,2.5"/><line x1="152" y1="295.5" x2="540" y2="295.5" stroke="#6a7484" stroke-dasharray="2,2.5"/><line x1="152" y1="320.5" x2="540" y2="320.5" stroke="#6a7484" stroke-dasharray="2,2.5"/><line x1="152" y1="345" x2="540" y2="345" stroke="#6a7484" stroke-dasharray="2,2.5"/><line x1="152" y1="373.5" x2="540" y2="373.5" stroke="#6a7484" stroke-dasharray="2,2.5"/><rect x="151.5" y="268.5" width="389" height="79" fill="none" stroke="#c0c0c0"/><rect x="151.5" y="349.5" width="389" height="37.5" fill="none" stroke="#c0c0c0"/><rect x="151" y="283" width="390" height="1" fill="#8c8c8c"/><line x1="615.5" y1="269" x2="615.5" y2="347" stroke="#6a7484" stroke-dasharray="2,2.5"/><line x1="615.5" y1="350" x2="615.5" y2="387" stroke="#6a7484" stroke-dasharray="2,2.5"/><line x1="639.5" y1="269" x2="639.5" y2="347" stroke="#6a7484" stroke-dasharray="2,2.5"/><line x1="639.5" y1="350" x2="639.5" y2="387" stroke="#6a7484" stroke-dasharray="2,2.5"/><line x1="663.5" y1="269" x2="663.5" y2="347" stroke="#6a7484" stroke-dasharray="2,2.5"/><line x1="663.5" y1="350" x2="663.5" y2="387" stroke="#6a7484" stroke-dasharray="2,2.5"/><line x1="687.5" y1="269" x2="687.5" y2="347" stroke="#6a7484" stroke-dasharray="2,2.5"/><line x1="687.5" y1="350" x2="687.5" y2="387" stroke="#6a7484" stroke-dasharray="2,2.5"/><line x1="711.5" y1="269" x2="711.5" y2="347" stroke="#6a7484" stroke-dasharray="2,2.5"/><line x1="711.5" y1="350" x2="711.5" y2="387" stroke="#6a7484" stroke-dasharray="2,2.5"/><line x1="735.5" y1="269" x2="735.5" y2="347" stroke="#6a7484" stroke-dasharray="2,2.5"/><line x1="735.5" y1="350" x2="735.5" y2="387" stroke="#6a7484" stroke-dasharray="2,2.5"/><line x1="759.5" y1="269" x2="759.5" y2="347" stroke="#6a7484" stroke-dasharray="2,2.5"/><line x1="759.5" y1="350" x2="759.5" y2="387" stroke="#6a7484" stroke-dasharray="2,2.5"/><line x1="783.5" y1="269" x2="783.5" y2="347" stroke="#6a7484" stroke-dasharray="2,2.5"/><line x1="783.5" y1="350" x2="783.5" y2="387" stroke="#6a7484" stroke-dasharray="2,2.5"/><line x1="807.5" y1="269" x2="807.5" y2="347" stroke="#6a7484" stroke-dasharray="2,2.5"/><line x1="807.5" y1="350" x2="807.5" y2="387" stroke="#6a7484" stroke-dasharray="2,2.5"/><line x1="831.5" y1="269" x2="831.5" y2="347" stroke="#6a7484" stroke-dasharray="2,2.5"/><line x1="831.5" y1="350" x2="831.5" y2="387" stroke="#6a7484" stroke-dasharray="2,2.5"/><line x1="855.5" y1="269" x2="855.5" y2="347" stroke="#6a7484" stroke-dasharray="2,2.5"/><line x1="855.5" y1="350" x2="855.5" y2="387" stroke="#6a7484" stroke-dasharray="2,2.5"/><line x1="879.5" y1="269" x2="879.5" y2="347" stroke="#6a7484" stroke-dasharray="2,2.5"/><line x1="879.5" y1="350" x2="879.5" y2="387" stroke="#6a7484" stroke-dasharray="2,2.5"/><line x1="903.5" y1="269" x2="903.5" y2="347" stroke="#6a7484" stroke-dasharray="2,2.5"/><line x1="903.5" y1="350" x2="903.5" y2="387" stroke="#6a7484" stroke-dasharray="2,2.5"/><line x1="927.5" y1="269" x2="927.5" y2="347" stroke="#6a7484" stroke-dasharray="2,2.5"/><line x1="927.5" y1="350" x2="927.5" y2="387" stroke="#6a7484" stroke-dasharray="2,2.5"/><line x1="951.5" y1="269" x2="951.5" y2="347" stroke="#6a7484" stroke-dasharray="2,2.5"/><line x1="951.5" y1="350" x2="951.5" y2="387" stroke="#6a7484" stroke-dasharray="2,2.5"/><line x1="975.5" y1="269" x2="975.5" y2="347" stroke="#6a7484" stroke-dasharray="2,2.5"/><line x1="975.5" y1="350" x2="975.5" y2="387" stroke="#6a7484" stroke-dasharray="2,2.5"/><line x1="592" y1="294.5" x2="980" y2="294.5" stroke="#6a7484" stroke-dasharray="2,2.5"/><line x1="592" y1="320.5" x2="980" y2="320.5" stroke="#6a7484" stroke-dasharray="2,2.5"/><line x1="592" y1="345" x2="980" y2="345" stroke="#6a7484" stroke-dasharray="2,2.5"/><line x1="592" y1="364.5" x2="980" y2="364.5" stroke="#6a7484" stroke-dasharray="2,2.5"/><line x1="592" y1="373" x2="980" y2="373" stroke="#6a7484" stroke-dasharray="2,2.5"/><line x1="592" y1="381.5" x2="980" y2="381.5" stroke="#6a7484" stroke-dasharray="2,2.5"/><rect x="591.5" y="268.5" width="389" height="79" fill="none" stroke="#c0c0c0"/><rect x="591.5" y="349.5" width="389" height="37.5" fill="none" stroke="#c0c0c0"/><rect x="591" y="305" width="390" height="1" fill="#8c8c8c"/><rect x="152" y="337.0" width="1" height="4.0" fill="#00d400"/><rect x="151" y="339.6" width="1" height="1" fill="#00b000"/><rect x="153" y="337.3" width="1" height="1" fill="#00b000"/><rect x="155" y="336.1" width="1" height="4.6" fill="#00d400"/><rect x="154" y="336.4" width="1" height="1" fill="#00b000"/><rect x="156" y="338.4" width="1" height="1" fill="#00b000"/><rect x="158" y="335.6" width="1" height="3.1" fill="#00d400"/><rect x="157" y="335.8" width="1" height="1" fill="#00b000"/><rect x="159" y="335.8" width="1" height="1" fill="#00b000"/><rect x="161" y="335.7" width="1" height="4.1" fill="#00d400"/><rect x="160" y="336.2" width="1" height="1" fill="#00b000"/><rect x="162" y="336.6" width="1" height="1" fill="#00b000"/><rect x="164" y="336.4" width="1" height="3.8" fill="#00d400"/><rect x="163" y="338.6" width="1" height="1" fill="#00b000"/><rect x="165" y="337.9" width="1" height="1" fill="#00b000"/><rect x="167" y="337.3" width="1" height="3.7" fill="#00d400"/><rect x="166" y="340.5" width="1" height="1" fill="#00b000"/><rect x="168" y="338.4" width="1" height="1" fill="#00b000"/><rect x="170" y="338.4" width="1" height="3.4" fill="#00d400"/><rect x="169" y="339.5" width="1" height="1" fill="#00b000"/><rect x="171" y="341.2" width="1" height="1" fill="#00b000"/><rect x="173" y="336.9" width="1" height="3.5" fill="#00d400"/><rect x="172" y="339.2" width="1" height="1" fill="#00b000"/><rect x="174" y="338.3" width="1" height="1" fill="#00b000"/><rect x="176" y="334.3" width="1" height="4.6" fill="#00d400"/><rect x="175" y="334.6" width="1" height="1" fill="#00b000"/><rect x="177" y="335.3" width="1" height="1" fill="#00b000"/><rect x="179" y="333.3" width="1" height="5.0" fill="#00d400"/><rect x="178" y="334.8" width="1" height="1" fill="#00b000"/><rect x="180" y="336.2" width="1" height="1" fill="#00b000"/><rect x="182" y="331.9" width="1" height="4.4" fill="#00d400"/><rect x="181" y="335.3" width="1" height="1" fill="#00b000"/><rect x="183" y="334.9" width="1" height="1" fill="#00b000"/><rect x="185" y="331.9" width="1" height="3.7" fill="#00d400"/><rect x="184" y="333.8" width="1" height="1" fill="#00b000"/><rect x="186" y="335.1" width="1" height="1" fill="#00b000"/><rect x="188" y="330.1" width="1" height="4.9" fill="#00d400"/><rect x="187" y="334.9" width="1" height="1" fill="#00b000"/><rect x="189" y="330.7" width="1" height="1" fill="#00b000"/><rect x="191" y="331.1" width="1" height="3.1" fill="#00d400"/><rect x="190" y="331.6" width="1" height="1" fill="#00b000"/><rect x="192" y="332.7" width="1" height="1" fill="#00b000"/><rect x="194" y="333.2" width="1" height="3.1" fill="#00d400"/><rect x="193" y="335.6" width="1" height="1" fill="#00b000"/><rect x="195" y="335.0" width="1" height="1" fill="#00b000"/><rect x="197" y="333.0" width="1" height="4.9" fill="#00d400"/><rect x="196" y="336.5" width="1" height="1" fill="#00b000"/><rect x="198" y="336.0" width="1" height="1" fill="#00b000"/><rect x="200" y="332.0" width="1" height="4.6" fill="#00d400"/><rect x="199" y="335.9" width="1" height="1" fill="#00b000"/><rect x="201" y="336.3" width="1" height="1" fill="#00b000"/><rect x="203" y="333.1" width="1" height="4.3" fill="#00d400"/><rect x="202" y="333.4" width="1" height="1" fill="#00b000"/><rect x="204" y="336.1" width="1" height="1" fill="#00b000"/><rect x="206" y="334.2" width="1" height="4.1" fill="#00d400"/><rect x="205" y="337.6" width="1" height="1" fill="#00b000"/><rect x="207" y="335.4" width="1" height="1" fill="#00b000"/><rect x="209" y="335.3" width="1" height="3.8" fill="#00d400"/><rect x="208" y="335.4" width="1" height="1" fill="#00b000"/><rect x="210" y="337.1" width="1" height="1" fill="#00b000"/><rect x="212" y="333.9" width="1" height="3.5" fill="#00d400"/><rect x="211" y="334.1" width="1" height="1" fill="#00b000"/><rect x="213" y="336.6" width="1" height="1" fill="#00b000"/><rect x="215" y="331.5" width="1" height="3.4" fill="#00d400"/><rect x="214" y="332.9" width="1" height="1" fill="#00b000"/><rect x="216" y="334.5" width="1" height="1" fill="#00b000"/><rect x="218" y="328.6" width="1" height="3.2" fill="#00d400"/><rect x="217" y="330.3" width="1" height="1" fill="#00b000"/><rect x="219" y="331.4" width="1" height="1" fill="#00b000"/><rect x="221" y="330.7" width="1" height="3.8" fill="#00d400"/><rect x="220" y="331.8" width="1" height="1" fill="#00b000"/><rect x="222" y="332.3" width="1" height="1" fill="#00b000"/><rect x="224" y="331.1" width="1" height="3.4" fill="#00d400"/><rect x="223" y="334.3" width="1" height="1" fill="#00b000"/><rect x="225" y="331.6" width="1" height="1" fill="#00b000"/><rect x="227" y="330.3" width="1" height="3.1" fill="#00d400"/><rect x="226" y="331.0" width="1" height="1" fill="#00b000"/><rect x="228" y="331.8" width="1" height="1" fill="#00b000"/><rect x="230" y="311.8" width="1" height="19.7" fill="#00d400"/><rect x="229" y="317.0" width="1" height="1" fill="#00b000"/><rect x="231" y="311.9" width="1" height="1" fill="#00b000"/><rect x="233" y="314.4" width="1" height="13.4" fill="#00d400"/><rect x="232" y="319.3" width="1" height="1" fill="#00b000"/><rect x="234" y="322.0" width="1" height="1" fill="#00b000"/><rect x="236" y="317.8" width="1" height="5.9" fill="#00d400"/><rect x="235" y="320.8" width="1" height="1" fill="#00b000"/><rect x="237" y="321.4" width="1" height="1" fill="#00b000"/><rect x="239" y="313.9" width="1" height="5.0" fill="#00d400"/><rect x="238" y="318.5" width="1" height="1" fill="#00b000"/><rect x="240" y="317.9" width="1" height="1" fill="#00b000"/><rect x="242" y="312.0" width="1" height="5.6" fill="#00d400"/><rect x="241" y="314.2" width="1" height="1" fill="#00b000"/><rect x="243" y="314.3" width="1" height="1" fill="#00b000"/><rect x="245" y="311.4" width="1" height="3.3" fill="#00d400"/><rect x="244" y="311.6" width="1" height="1" fill="#00b000"/><rect x="246" y="311.6" width="1" height="1" fill="#00b000"/><rect x="248" y="308.5" width="1" height="3.6" fill="#00d400"/><rect x="247" y="309.8" width="1" height="1" fill="#00b000"/><rect x="249" y="308.7" width="1" height="1" fill="#00b000"/><rect x="251" y="307.5" width="1" height="3.0" fill="#00d400"/><rect x="250" y="307.8" width="1" height="1" fill="#00b000"/><rect x="252" y="308.6" width="1" height="1" fill="#00b000"/><rect x="254" y="309.1" width="1" height="3.1" fill="#00d400"/><rect x="253" y="311.0" width="1" height="1" fill="#00b000"/><rect x="255" y="309.5" width="1" height="1" fill="#00b000"/><rect x="257" y="305.3" width="1" height="3.8" fill="#00d400"/><rect x="256" y="306.7" width="1" height="1" fill="#00b000"/><rect x="258" y="305.8" width="1" height="1" fill="#00b000"/><rect x="260" y="303.7" width="1" height="5.5" fill="#00d400"/><rect x="259" y="306.2" width="1" height="1" fill="#00b000"/><rect x="261" y="306.3" width="1" height="1" fill="#00b000"/><rect x="263" y="289.0" width="1" height="13.8" fill="#00d400"/><rect x="262" y="290.4" width="1" height="1" fill="#00b000"/><rect x="264" y="293.7" width="1" height="1" fill="#00b000"/><rect x="266" y="291.9" width="1" height="3.8" fill="#00d400"/><rect x="265" y="292.5" width="1" height="1" fill="#00b000"/><rect x="267" y="292.0" width="1" height="1" fill="#00b000"/><rect x="269" y="291.6" width="1" height="5.9" fill="#00d400"/><rect x="268" y="292.5" width="1" height="1" fill="#00b000"/><rect x="270" y="294.8" width="1" height="1" fill="#00b000"/><rect x="272" y="293.4" width="1" height="3.1" fill="#00d400"/><rect x="271" y="296.5" width="1" height="1" fill="#00b000"/><rect x="273" y="296.1" width="1" height="1" fill="#00b000"/><rect x="275" y="286.1" width="1" height="12.9" fill="#00d400"/><rect x="274" y="289.5" width="1" height="1" fill="#00b000"/><rect x="276" y="290.8" width="1" height="1" fill="#00b000"/><rect x="278" y="293.5" width="1" height="3.5" fill="#00d400"/><rect x="277" y="295.3" width="1" height="1" fill="#00b000"/><rect x="279" y="296.2" width="1" height="1" fill="#00b000"/><rect x="281" y="290.1" width="1" height="4.0" fill="#00d400"/><rect x="280" y="293.3" width="1" height="1" fill="#00b000"/><rect x="282" y="294.0" width="1" height="1" fill="#00b000"/><rect x="284" y="292.0" width="1" height="5.6" fill="#00d400"/><rect x="283" y="296.5" width="1" height="1" fill="#00b000"/><rect x="285" y="296.1" width="1" height="1" fill="#00b000"/><rect x="287" y="292.8" width="1" height="3.7" fill="#00d400"/><rect x="286" y="294.1" width="1" height="1" fill="#00b000"/><rect x="288" y="292.9" width="1" height="1" fill="#00b000"/><rect x="290" y="293.6" width="1" height="3.1" fill="#00d400"/><rect x="289" y="294.4" width="1" height="1" fill="#00b000"/><rect x="291" y="295.7" width="1" height="1" fill="#00b000"/><rect x="293" y="294.4" width="1" height="5.9" fill="#00d400"/><rect x="292" y="299.9" width="1" height="1" fill="#00b000"/><rect x="294" y="300.2" width="1" height="1" fill="#00b000"/><rect x="296" y="296.1" width="1" height="5.9" fill="#00d400"/><rect x="295" y="297.4" width="1" height="1" fill="#00b000"/><rect x="297" y="297.5" width="1" height="1" fill="#00b000"/><rect x="299" y="297.9" width="1" height="3.6" fill="#00d400"/><rect x="298" y="300.2" width="1" height="1" fill="#00b000"/><rect x="300" y="301.2" width="1" height="1" fill="#00b000"/><rect x="302" y="297.8" width="1" height="5.5" fill="#00d400"/><rect x="301" y="301.4" width="1" height="1" fill="#00b000"/><rect x="303" y="302.2" width="1" height="1" fill="#00b000"/><rect x="305" y="298.8" width="1" height="3.3" fill="#00d400"/><rect x="304" y="301.8" width="1" height="1" fill="#00b000"/><rect x="306" y="301.3" width="1" height="1" fill="#00b000"/><rect x="308" y="297.0" width="1" height="4.9" fill="#00d400"/><rect x="307" y="297.9" width="1" height="1" fill="#00b000"/><rect x="309" y="300.8" width="1" height="1" fill="#00b000"/><rect x="311" y="297.9" width="1" height="4.0" fill="#00d400"/><rect x="310" y="301.8" width="1" height="1" fill="#00b000"/><rect x="312" y="299.5" width="1" height="1" fill="#00b000"/><rect x="314" y="299.1" width="1" height="4.2" fill="#00d400"/><rect x="313" y="302.2" width="1" height="1" fill="#00b000"/><rect x="315" y="299.8" width="1" height="1" fill="#00b000"/><rect x="317" y="294.8" width="1" height="3.4" fill="#00d400"/><rect x="316" y="297.8" width="1" height="1" fill="#00b000"/><rect x="318" y="297.5" width="1" height="1" fill="#00b000"/><rect x="320" y="297.2" width="1" height="3.4" fill="#00d400"/><rect x="319" y="300.5" width="1" height="1" fill="#00b000"/><rect x="321" y="299.4" width="1" height="1" fill="#00b000"/><rect x="323" y="294.0" width="1" height="4.1" fill="#00d400"/><rect x="322" y="294.5" width="1" height="1" fill="#00b000"/><rect x="324" y="294.0" width="1" height="1" fill="#00b000"/><rect x="326" y="292.7" width="1" height="5.9" fill="#00d400"/><rect x="325" y="295.8" width="1" height="1" fill="#00b000"/><rect x="327" y="298.2" width="1" height="1" fill="#00b000"/><rect x="329" y="296.9" width="1" height="4.3" fill="#00d400"/><rect x="328" y="300.4" width="1" height="1" fill="#00b000"/><rect x="330" y="297.8" width="1" height="1" fill="#00b000"/><rect x="332" y="296.7" width="1" height="3.8" fill="#00d400"/><rect x="331" y="297.6" width="1" height="1" fill="#00b000"/><rect x="333" y="298.9" width="1" height="1" fill="#00b000"/><rect x="335" y="299.4" width="1" height="3.8" fill="#00d400"/><rect x="334" y="299.9" width="1" height="1" fill="#00b000"/><rect x="336" y="302.9" width="1" height="1" fill="#00b000"/><rect x="338" y="300.6" width="1" height="4.1" fill="#00d400"/><rect x="337" y="303.0" width="1" height="1" fill="#00b000"/><rect x="339" y="304.3" width="1" height="1" fill="#00b000"/><rect x="341" y="302.3" width="1" height="4.3" fill="#00d400"/><rect x="340" y="304.5" width="1" height="1" fill="#00b000"/><rect x="342" y="304.6" width="1" height="1" fill="#00b000"/><rect x="344" y="301.4" width="1" height="4.6" fill="#00d400"/><rect x="343" y="303.4" width="1" height="1" fill="#00b000"/><rect x="345" y="302.3" width="1" height="1" fill="#00b000"/><rect x="347" y="303.3" width="1" height="3.0" fill="#00d400"/><rect x="346" y="303.9" width="1" height="1" fill="#00b000"/><rect x="348" y="304.8" width="1" height="1" fill="#00b000"/><rect x="350" y="301.5" width="1" height="5.2" fill="#00d400"/><rect x="349" y="303.2" width="1" height="1" fill="#00b000"/><rect x="351" y="304.2" width="1" height="1" fill="#00b000"/><rect x="353" y="302.2" width="1" height="4.7" fill="#00d400"/><rect x="352" y="302.7" width="1" height="1" fill="#00b000"/><rect x="354" y="304.8" width="1" height="1" fill="#00b000"/><rect x="356" y="301.6" width="1" height="3.7" fill="#00d400"/><rect x="355" y="304.5" width="1" height="1" fill="#00b000"/><rect x="357" y="303.5" width="1" height="1" fill="#00b000"/><rect x="359" y="301.6" width="1" height="4.7" fill="#00d400"/><rect x="358" y="305.8" width="1" height="1" fill="#00b000"/><rect x="360" y="303.6" width="1" height="1" fill="#00b000"/><rect x="362" y="300.2" width="1" height="4.8" fill="#00d400"/><rect x="361" y="302.7" width="1" height="1" fill="#00b000"/><rect x="363" y="303.6" width="1" height="1" fill="#00b000"/><rect x="365" y="299.8" width="1" height="4.4" fill="#00d400"/><rect x="364" y="301.9" width="1" height="1" fill="#00b000"/><rect x="366" y="303.9" width="1" height="1" fill="#00b000"/><rect x="368" y="299.5" width="1" height="5.1" fill="#00d400"/><rect x="367" y="304.3" width="1" height="1" fill="#00b000"/><rect x="369" y="300.8" width="1" height="1" fill="#00b000"/><rect x="371" y="299.7" width="1" height="4.7" fill="#00d400"/><rect x="370" y="303.7" width="1" height="1" fill="#00b000"/><rect x="372" y="300.4" width="1" height="1" fill="#00b000"/><rect x="374" y="299.7" width="1" height="3.4" fill="#00d400"/><rect x="373" y="300.0" width="1" height="1" fill="#00b000"/><rect x="375" y="300.5" width="1" height="1" fill="#00b000"/><rect x="377" y="301.2" width="1" height="3.2" fill="#00d400"/><rect x="376" y="303.8" width="1" height="1" fill="#00b000"/><rect x="378" y="304.1" width="1" height="1" fill="#00b000"/><rect x="380" y="301.8" width="1" height="3.5" fill="#00d400"/><rect x="379" y="304.1" width="1" height="1" fill="#00b000"/><rect x="381" y="302.3" width="1" height="1" fill="#00b000"/><rect x="383" y="300.1" width="1" height="5.6" fill="#00d400"/><rect x="382" y="301.3" width="1" height="1" fill="#00b000"/><rect x="384" y="305.5" width="1" height="1" fill="#00b000"/><rect x="386" y="300.2" width="1" height="4.2" fill="#00d400"/><rect x="385" y="304.4" width="1" height="1" fill="#00b000"/><rect x="387" y="303.7" width="1" height="1" fill="#00b000"/><rect x="389" y="300.1" width="1" height="3.5" fill="#00d400"/><rect x="388" y="301.9" width="1" height="1" fill="#00b000"/><rect x="390" y="301.2" width="1" height="1" fill="#00b000"/><rect x="392" y="299.9" width="1" height="3.6" fill="#00d400"/><rect x="391" y="302.5" width="1" height="1" fill="#00b000"/><rect x="393" y="300.0" width="1" height="1" fill="#00b000"/><rect x="395" y="300.5" width="1" height="4.7" fill="#00d400"/><rect x="394" y="300.5" width="1" height="1" fill="#00b000"/><rect x="396" y="302.0" width="1" height="1" fill="#00b000"/><rect x="398" y="301.2" width="1" height="4.9" fill="#00d400"/><rect x="397" y="301.5" width="1" height="1" fill="#00b000"/><rect x="399" y="306.0" width="1" height="1" fill="#00b000"/><rect x="401" y="302.3" width="1" height="5.4" fill="#00d400"/><rect x="400" y="302.9" width="1" height="1" fill="#00b000"/><rect x="402" y="303.8" width="1" height="1" fill="#00b000"/><rect x="404" y="303.0" width="1" height="3.1" fill="#00d400"/><rect x="403" y="303.8" width="1" height="1" fill="#00b000"/><rect x="405" y="303.4" width="1" height="1" fill="#00b000"/><rect x="407" y="301.9" width="1" height="4.3" fill="#00d400"/><rect x="406" y="305.4" width="1" height="1" fill="#00b000"/><rect x="408" y="303.0" width="1" height="1" fill="#00b000"/><rect x="410" y="302.3" width="1" height="3.4" fill="#00d400"/><rect x="409" y="304.3" width="1" height="1" fill="#00b000"/><rect x="411" y="304.8" width="1" height="1" fill="#00b000"/><rect x="413" y="299.7" width="1" height="3.3" fill="#00d400"/><rect x="412" y="302.0" width="1" height="1" fill="#00b000"/><rect x="414" y="301.1" width="1" height="1" fill="#00b000"/><rect x="416" y="303.7" width="1" height="3.2" fill="#00d400"/><rect x="415" y="305.7" width="1" height="1" fill="#00b000"/><rect x="417" y="306.3" width="1" height="1" fill="#00b000"/><rect x="419" y="304.9" width="1" height="3.3" fill="#00d400"/><rect x="418" y="305.1" width="1" height="1" fill="#00b000"/><rect x="420" y="307.7" width="1" height="1" fill="#00b000"/><rect x="422" y="304.0" width="1" height="4.4" fill="#00d400"/><rect x="421" y="306.4" width="1" height="1" fill="#00b000"/><rect x="423" y="308.0" width="1" height="1" fill="#00b000"/><rect x="425" y="302.2" width="1" height="3.8" fill="#00d400"/><rect x="424" y="304.2" width="1" height="1" fill="#00b000"/><rect x="426" y="303.1" width="1" height="1" fill="#00b000"/><rect x="428" y="301.1" width="1" height="3.3" fill="#00d400"/><rect x="427" y="301.3" width="1" height="1" fill="#00b000"/><rect x="429" y="301.8" width="1" height="1" fill="#00b000"/><rect x="431" y="300.1" width="1" height="3.9" fill="#00d400"/><rect x="430" y="303.1" width="1" height="1" fill="#00b000"/><rect x="432" y="301.2" width="1" height="1" fill="#00b000"/><rect x="434" y="298.6" width="1" height="4.5" fill="#00d400"/><rect x="433" y="300.2" width="1" height="1" fill="#00b000"/><rect x="435" y="298.7" width="1" height="1" fill="#00b000"/><rect x="437" y="297.4" width="1" height="3.8" fill="#00d400"/><rect x="436" y="300.1" width="1" height="1" fill="#00b000"/><rect x="438" y="299.4" width="1" height="1" fill="#00b000"/><rect x="440" y="297.5" width="1" height="3.6" fill="#00d400"/><rect x="439" y="300.8" width="1" height="1" fill="#00b000"/><rect x="441" y="297.9" width="1" height="1" fill="#00b000"/><rect x="443" y="295.3" width="1" height="3.0" fill="#00d400"/><rect x="442" y="296.8" width="1" height="1" fill="#00b000"/><rect x="444" y="297.8" width="1" height="1" fill="#00b000"/><rect x="446" y="273.7" width="1" height="21.5" fill="#00d400"/><rect x="445" y="284.6" width="1" height="1" fill="#00b000"/><rect x="447" y="288.5" width="1" height="1" fill="#00b000"/><rect x="449" y="275.2" width="1" height="12.5" fill="#00d400"/><rect x="448" y="279.5" width="1" height="1" fill="#00b000"/><rect x="450" y="285.6" width="1" height="1" fill="#00b000"/><rect x="452" y="284.6" width="1" height="5.1" fill="#00d400"/><rect x="451" y="286.7" width="1" height="1" fill="#00b000"/><rect x="453" y="286.4" width="1" height="1" fill="#00b000"/><rect x="455" y="285.3" width="1" height="3.2" fill="#00d400"/><rect x="454" y="285.6" width="1" height="1" fill="#00b000"/><rect x="456" y="287.7" width="1" height="1" fill="#00b000"/><rect x="458" y="287.4" width="1" height="3.8" fill="#00d400"/><rect x="457" y="287.7" width="1" height="1" fill="#00b000"/><rect x="459" y="290.6" width="1" height="1" fill="#00b000"/><rect x="461" y="288.2" width="1" height="5.6" fill="#00d400"/><rect x="460" y="289.8" width="1" height="1" fill="#00b000"/><rect x="462" y="289.6" width="1" height="1" fill="#00b000"/><rect x="464" y="289.3" width="1" height="3.9" fill="#00d400"/><rect x="463" y="289.9" width="1" height="1" fill="#00b000"/><rect x="465" y="291.0" width="1" height="1" fill="#00b000"/><rect x="467" y="291.8" width="1" height="3.8" fill="#00d400"/><rect x="466" y="295.5" width="1" height="1" fill="#00b000"/><rect x="468" y="293.9" width="1" height="1" fill="#00b000"/><rect x="470" y="293.0" width="1" height="3.7" fill="#00d400"/><rect x="469" y="294.2" width="1" height="1" fill="#00b000"/><rect x="471" y="294.3" width="1" height="1" fill="#00b000"/><rect x="473" y="291.9" width="1" height="3.0" fill="#00d400"/><rect x="472" y="293.3" width="1" height="1" fill="#00b000"/><rect x="474" y="293.4" width="1" height="1" fill="#00b000"/><rect x="476" y="291.1" width="1" height="3.6" fill="#00d400"/><rect x="475" y="291.2" width="1" height="1" fill="#00b000"/><rect x="477" y="292.1" width="1" height="1" fill="#00b000"/><rect x="479" y="289.8" width="1" height="3.3" fill="#00d400"/><rect x="478" y="290.0" width="1" height="1" fill="#00b000"/><rect x="480" y="289.9" width="1" height="1" fill="#00b000"/><rect x="482" y="288.3" width="1" height="3.9" fill="#00d400"/><rect x="481" y="290.6" width="1" height="1" fill="#00b000"/><rect x="483" y="290.4" width="1" height="1" fill="#00b000"/><rect x="485" y="288.1" width="1" height="5.3" fill="#00d400"/><rect x="484" y="291.9" width="1" height="1" fill="#00b000"/><rect x="486" y="292.8" width="1" height="1" fill="#00b000"/><rect x="488" y="287.3" width="1" height="4.2" fill="#00d400"/><rect x="487" y="291.4" width="1" height="1" fill="#00b000"/><rect x="489" y="287.9" width="1" height="1" fill="#00b000"/><rect x="491" y="287.0" width="1" height="5.2" fill="#00d400"/><rect x="490" y="287.2" width="1" height="1" fill="#00b000"/><rect x="492" y="291.3" width="1" height="1" fill="#00b000"/><rect x="494" y="286.0" width="1" height="5.7" fill="#00d400"/><rect x="493" y="290.2" width="1" height="1" fill="#00b000"/><rect x="495" y="290.6" width="1" height="1" fill="#00b000"/><rect x="497" y="286.8" width="1" height="3.4" fill="#00d400"/><rect x="496" y="288.5" width="1" height="1" fill="#00b000"/><rect x="498" y="289.6" width="1" height="1" fill="#00b000"/><rect x="500" y="286.0" width="1" height="5.4" fill="#00d400"/><rect x="499" y="289.2" width="1" height="1" fill="#00b000"/><rect x="501" y="290.8" width="1" height="1" fill="#00b000"/><rect x="503" y="285.9" width="1" height="5.0" fill="#00d400"/><rect x="502" y="287.1" width="1" height="1" fill="#00b000"/><rect x="504" y="286.1" width="1" height="1" fill="#00b000"/><rect x="506" y="285.8" width="1" height="3.4" fill="#00d400"/><rect x="505" y="286.2" width="1" height="1" fill="#00b000"/><rect x="507" y="288.6" width="1" height="1" fill="#00b000"/><rect x="509" y="285.7" width="1" height="4.7" fill="#00d400"/><rect x="508" y="288.6" width="1" height="1" fill="#00b000"/><rect x="510" y="288.9" width="1" height="1" fill="#00b000"/><rect x="512" y="284.3" width="1" height="4.5" fill="#00d400"/><rect x="511" y="287.9" width="1" height="1" fill="#00b000"/><rect x="513" y="287.6" width="1" height="1" fill="#00b000"/><rect x="515" y="284.8" width="1" height="4.5" fill="#00d400"/><rect x="514" y="287.8" width="1" height="1" fill="#00b000"/><rect x="516" y="285.1" width="1" height="1" fill="#00b000"/><rect x="518" y="283.8" width="1" height="5.2" fill="#00d400"/><rect x="517" y="284.2" width="1" height="1" fill="#00b000"/><rect x="519" y="285.2" width="1" height="1" fill="#00b000"/><rect x="521" y="283.5" width="1" height="5.2" fill="#00d400"/><rect x="520" y="287.4" width="1" height="1" fill="#00b000"/><rect x="522" y="288.6" width="1" height="1" fill="#00b000"/><rect x="524" y="283.8" width="1" height="4.5" fill="#00d400"/><rect x="523" y="285.9" width="1" height="1" fill="#00b000"/><rect x="525" y="286.9" width="1" height="1" fill="#00b000"/><rect x="527" y="283.5" width="1" height="5.3" fill="#00d400"/><rect x="526" y="286.9" width="1" height="1" fill="#00b000"/><rect x="528" y="283.9" width="1" height="1" fill="#00b000"/><rect x="530" y="283.8" width="1" height="3.4" fill="#00d400"/><rect x="529" y="286.3" width="1" height="1" fill="#00b000"/><rect x="531" y="284.8" width="1" height="1" fill="#00b000"/><rect x="533" y="283.1" width="1" height="4.7" fill="#00d400"/><rect x="532" y="283.3" width="1" height="1" fill="#00b000"/><rect x="534" y="284.3" width="1" height="1" fill="#00b000"/><rect x="151.5" y="373.5" width="1.3" height="8.5" fill="#8e8e8e"/><rect x="154.5" y="373.5" width="1.3" height="8.0" fill="#8e8e8e"/><rect x="157.5" y="373.5" width="1.3" height="7.6" fill="#8e8e8e"/><rect x="160.5" y="373.5" width="1.3" height="7.1" fill="#8e8e8e"/><rect x="163.5" y="373.5" width="1.3" height="6.7" fill="#8e8e8e"/><rect x="166.5" y="373.5" width="1.3" height="6.0" fill="#8e8e8e"/><rect x="169.5" y="373.5" width="1.3" height="5.3" fill="#8e8e8e"/><rect x="172.5" y="373.5" width="1.3" height="4.6" fill="#8e8e8e"/><rect x="175.5" y="373.5" width="1.3" height="3.9" fill="#8e8e8e"/><rect x="178.5" y="373.5" width="1.3" height="1.6" fill="#8e8e8e"/><rect x="229.5" y="371.5" width="1.3" height="2.0" fill="#8e8e8e"/><rect x="232.5" y="369.8" width="1.3" height="3.7" fill="#8e8e8e"/><rect x="235.5" y="368.2" width="1.3" height="5.3" fill="#8e8e8e"/><rect x="238.5" y="366.5" width="1.3" height="7.0" fill="#8e8e8e"/><rect x="241.5" y="364.9" width="1.3" height="8.6" fill="#8e8e8e"/><rect x="244.5" y="363.2" width="1.3" height="10.3" fill="#8e8e8e"/><rect x="247.5" y="361.5" width="1.3" height="12.0" fill="#8e8e8e"/><rect x="250.5" y="359.9" width="1.3" height="13.6" fill="#8e8e8e"/><rect x="253.5" y="358.5" width="1.3" height="15.0" fill="#8e8e8e"/><rect x="256.5" y="357.2" width="1.3" height="16.3" fill="#8e8e8e"/><rect x="259.5" y="355.9" width="1.3" height="17.6" fill="#8e8e8e"/><rect x="262.5" y="354.9" width="1.3" height="18.6" fill="#8e8e8e"/><rect x="265.5" y="353.9" width="1.3" height="19.6" fill="#8e8e8e"/><rect x="268.5" y="353.0" width="1.3" height="20.5" fill="#8e8e8e"/><rect x="271.5" y="352.7" width="1.3" height="20.8" fill="#8e8e8e"/><rect x="274.5" y="352.5" width="1.3" height="21.0" fill="#8e8e8e"/><rect x="277.5" y="352.4" width="1.3" height="21.1" fill="#8e8e8e"/><rect x="280.5" y="353.1" width="1.3" height="20.4" fill="#8e8e8e"/><rect x="283.5" y="353.9" width="1.3" height="19.6" fill="#8e8e8e"/><rect x="286.5" y="354.7" width="1.3" height="18.8" fill="#8e8e8e"/><rect x="289.5" y="355.8" width="1.3" height="17.7" fill="#8e8e8e"/><rect x="292.5" y="356.8" width="1.3" height="16.7" fill="#8e8e8e"/><rect x="295.5" y="357.9" width="1.3" height="15.6" fill="#8e8e8e"/><rect x="298.5" y="359.5" width="1.3" height="14.0" fill="#8e8e8e"/><rect x="301.5" y="361.2" width="1.3" height="12.3" fill="#8e8e8e"/><rect x="304.5" y="362.8" width="1.3" height="10.7" fill="#8e8e8e"/><rect x="307.5" y="363.4" width="1.3" height="10.1" fill="#8e8e8e"/><rect x="310.5" y="363.9" width="1.3" height="9.6" fill="#8e8e8e"/><rect x="313.5" y="364.4" width="1.3" height="9.1" fill="#8e8e8e"/><rect x="316.5" y="365.0" width="1.3" height="8.5" fill="#8e8e8e"/><rect x="319.5" y="365.6" width="1.3" height="7.9" fill="#8e8e8e"/><rect x="322.5" y="366.2" width="1.3" height="7.3" fill="#8e8e8e"/><rect x="325.5" y="366.7" width="1.3" height="6.8" fill="#8e8e8e"/><rect x="328.5" y="367.3" width="1.3" height="6.2" fill="#8e8e8e"/><rect x="331.5" y="368.0" width="1.3" height="5.5" fill="#8e8e8e"/><rect x="334.5" y="368.7" width="1.3" height="4.8" fill="#8e8e8e"/><rect x="337.5" y="369.4" width="1.3" height="4.1" fill="#8e8e8e"/><rect x="340.5" y="370.1" width="1.3" height="3.4" fill="#8e8e8e"/><rect x="343.5" y="370.8" width="1.3" height="2.7" fill="#8e8e8e"/><rect x="346.5" y="371.3" width="1.3" height="2.2" fill="#8e8e8e"/><rect x="349.5" y="371.7" width="1.3" height="1.8" fill="#8e8e8e"/><rect x="352.5" y="372.2" width="1.3" height="1.3" fill="#8e8e8e"/><rect x="355.5" y="372.6" width="1.3" height="0.9" fill="#8e8e8e"/><rect x="442.5" y="370.6" width="1.3" height="2.9" fill="#8e8e8e"/><rect x="445.5" y="368.0" width="1.3" height="5.5" fill="#8e8e8e"/><rect x="448.5" y="367.7" width="1.3" height="5.8" fill="#8e8e8e"/><rect x="451.5" y="367.5" width="1.3" height="6.0" fill="#8e8e8e"/><rect x="454.5" y="367.2" width="1.3" height="6.3" fill="#8e8e8e"/><rect x="457.5" y="367.0" width="1.3" height="6.5" fill="#8e8e8e"/><rect x="460.5" y="366.8" width="1.3" height="6.7" fill="#8e8e8e"/><rect x="463.5" y="366.8" width="1.3" height="6.7" fill="#8e8e8e"/><rect x="466.5" y="366.7" width="1.3" height="6.8" fill="#8e8e8e"/><rect x="469.5" y="366.7" width="1.3" height="6.8" fill="#8e8e8e"/><rect x="472.5" y="366.7" width="1.3" height="6.8" fill="#8e8e8e"/><rect x="475.5" y="366.7" width="1.3" height="6.8" fill="#8e8e8e"/><rect x="478.5" y="366.7" width="1.3" height="6.8" fill="#8e8e8e"/><rect x="481.5" y="366.6" width="1.3" height="6.9" fill="#8e8e8e"/><rect x="484.5" y="366.6" width="1.3" height="6.9" fill="#8e8e8e"/><rect x="487.5" y="366.6" width="1.3" height="6.9" fill="#8e8e8e"/><rect x="490.5" y="366.6" width="1.3" height="6.9" fill="#8e8e8e"/><rect x="493.5" y="366.5" width="1.3" height="7.0" fill="#8e8e8e"/><rect x="496.5" y="366.5" width="1.3" height="7.0" fill="#8e8e8e"/><rect x="499.5" y="366.5" width="1.3" height="7.0" fill="#8e8e8e"/><rect x="502.5" y="366.5" width="1.3" height="7.0" fill="#8e8e8e"/><rect x="505.5" y="366.6" width="1.3" height="6.9" fill="#8e8e8e"/><rect x="508.5" y="366.6" width="1.3" height="6.9" fill="#8e8e8e"/><rect x="511.5" y="366.7" width="1.3" height="6.8" fill="#8e8e8e"/><rect x="514.5" y="366.7" width="1.3" height="6.8" fill="#8e8e8e"/><rect x="517.5" y="366.8" width="1.3" height="6.7" fill="#8e8e8e"/><rect x="520.5" y="366.8" width="1.3" height="6.7" fill="#8e8e8e"/><rect x="523.5" y="366.9" width="1.3" height="6.6" fill="#8e8e8e"/><rect x="526.5" y="366.9" width="1.3" height="6.6" fill="#8e8e8e"/><rect x="529.5" y="367.0" width="1.3" height="6.5" fill="#8e8e8e"/><rect x="532.5" y="367.0" width="1.3" height="6.5" fill="#8e8e8e"/><rect x="592" y="322.0" width="1" height="8.2" fill="#00cc00"/><rect x="590" y="324.8" width="2" height="1" fill="#00b800"/><rect x="593" y="326.3" width="2" height="1" fill="#00b800"/><rect x="598" y="323.0" width="1" height="8.0" fill="#00cc00"/><rect x="596" y="326.4" width="2" height="1" fill="#00b800"/><rect x="599" y="327.5" width="2" height="1" fill="#00b800"/><rect x="604" y="329.3" width="1" height="2.7" fill="#00cc00"/><rect x="602" y="330.9" width="2" height="1" fill="#00b800"/><rect x="605" y="329.9" width="2" height="1" fill="#00b800"/><rect x="610" y="331.0" width="1" height="7.5" fill="#00cc00"/><rect x="608" y="332.6" width="2" height="1" fill="#00b800"/><rect x="611" y="336.3" width="2" height="1" fill="#00b800"/><rect x="616" y="333.9" width="1" height="10.1" fill="#00cc00"/><rect x="614" y="337.5" width="2" height="1" fill="#00b800"/><rect x="617" y="337.3" width="2" height="1" fill="#00b800"/><rect x="622" y="330.2" width="1" height="11.0" fill="#00cc00"/><rect x="620" y="339.0" width="2" height="1" fill="#00b800"/><rect x="623" y="335.5" width="2" height="1" fill="#00b800"/><rect x="628" y="328.4" width="1" height="7.3" fill="#00cc00"/><rect x="626" y="333.5" width="2" height="1" fill="#00b800"/><rect x="629" y="331.9" width="2" height="1" fill="#00b800"/><rect x="634" y="317.4" width="1" height="11.0" fill="#00cc00"/><rect x="632" y="323.8" width="2" height="1" fill="#00b800"/><rect x="635" y="320.6" width="2" height="1" fill="#00b800"/><rect x="640" y="315.6" width="1" height="9.1" fill="#00cc00"/><rect x="638" y="320.9" width="2" height="1" fill="#00b800"/><rect x="641" y="322.2" width="2" height="1" fill="#00b800"/><rect x="646" y="320.0" width="1" height="8.4" fill="#00cc00"/><rect x="644" y="324.3" width="2" height="1" fill="#00b800"/><rect x="647" y="325.4" width="2" height="1" fill="#00b800"/><rect x="652" y="322.0" width="1" height="10.0" fill="#00cc00"/><rect x="650" y="328.0" width="2" height="1" fill="#00b800"/><rect x="653" y="324.4" width="2" height="1" fill="#00b800"/><rect x="658" y="327.0" width="1" height="5.0" fill="#00cc00"/><rect x="656" y="330.3" width="2" height="1" fill="#00b800"/><rect x="659" y="329.8" width="2" height="1" fill="#00b800"/><rect x="664" y="325.6" width="1" height="11.9" fill="#00cc00"/><rect x="662" y="330.1" width="2" height="1" fill="#00b800"/><rect x="665" y="328.2" width="2" height="1" fill="#00b800"/><rect x="670" y="332.0" width="1" height="7.4" fill="#00cc00"/><rect x="668" y="337.3" width="2" height="1" fill="#00b800"/><rect x="671" y="335.6" width="2" height="1" fill="#00b800"/><rect x="676" y="326.6" width="1" height="8.2" fill="#00cc00"/><rect x="674" y="331.8" width="2" height="1" fill="#00b800"/><rect x="677" y="332.6" width="2" height="1" fill="#00b800"/><rect x="682" y="330.2" width="1" height="9.2" fill="#00cc00"/><rect x="680" y="336.0" width="2" height="1" fill="#00b800"/><rect x="683" y="337.1" width="2" height="1" fill="#00b800"/><rect x="688" y="332.2" width="1" height="9.4" fill="#00cc00"/><rect x="686" y="336.3" width="2" height="1" fill="#00b800"/><rect x="689" y="338.6" width="2" height="1" fill="#00b800"/><rect x="694" y="330.5" width="1" height="8.5" fill="#00cc00"/><rect x="692" y="334.5" width="2" height="1" fill="#00b800"/><rect x="695" y="337.0" width="2" height="1" fill="#00b800"/><rect x="700" y="330.0" width="1" height="7.4" fill="#00cc00"/><rect x="698" y="335.4" width="2" height="1" fill="#00b800"/><rect x="701" y="331.9" width="2" height="1" fill="#00b800"/><rect x="706" y="327.0" width="1" height="7.0" fill="#00cc00"/><rect x="704" y="329.0" width="2" height="1" fill="#00b800"/><rect x="707" y="329.3" width="2" height="1" fill="#00b800"/><rect x="712" y="323.5" width="1" height="7.0" fill="#00cc00"/><rect x="710" y="329.0" width="2" height="1" fill="#00b800"/><rect x="713" y="326.7" width="2" height="1" fill="#00b800"/><rect x="718" y="320.7" width="1" height="16.7" fill="#00cc00"/><rect x="716" y="330.3" width="2" height="1" fill="#00b800"/><rect x="719" y="327.1" width="2" height="1" fill="#00b800"/><rect x="724" y="328.7" width="1" height="10.3" fill="#00cc00"/><rect x="722" y="333.9" width="2" height="1" fill="#00b800"/><rect x="725" y="333.1" width="2" height="1" fill="#00b800"/><rect x="730" y="328.7" width="1" height="5.3" fill="#00cc00"/><rect x="728" y="330.9" width="2" height="1" fill="#00b800"/><rect x="731" y="331.6" width="2" height="1" fill="#00b800"/><rect x="736" y="326.3" width="1" height="11.7" fill="#00cc00"/><rect x="734" y="332.7" width="2" height="1" fill="#00b800"/><rect x="737" y="335.0" width="2" height="1" fill="#00b800"/><rect x="742" y="332.2" width="1" height="3.5" fill="#00cc00"/><rect x="740" y="334.3" width="2" height="1" fill="#00b800"/><rect x="743" y="334.9" width="2" height="1" fill="#00b800"/><rect x="748" y="327.0" width="1" height="7.0" fill="#00cc00"/><rect x="746" y="332.0" width="2" height="1" fill="#00b800"/><rect x="749" y="332.6" width="2" height="1" fill="#00b800"/><rect x="754" y="318.3" width="1" height="8.7" fill="#00cc00"/><rect x="752" y="323.5" width="2" height="1" fill="#00b800"/><rect x="755" y="320.9" width="2" height="1" fill="#00b800"/><rect x="760" y="309.6" width="1" height="12.2" fill="#00cc00"/><rect x="758" y="318.3" width="2" height="1" fill="#00b800"/><rect x="761" y="319.1" width="2" height="1" fill="#00b800"/><rect x="766" y="307.8" width="1" height="7.0" fill="#00cc00"/><rect x="764" y="313.0" width="2" height="1" fill="#00b800"/><rect x="767" y="311.6" width="2" height="1" fill="#00b800"/><rect x="772" y="309.6" width="1" height="8.7" fill="#00cc00"/><rect x="770" y="315.1" width="2" height="1" fill="#00b800"/><rect x="773" y="312.4" width="2" height="1" fill="#00b800"/><rect x="778" y="307.8" width="1" height="7.0" fill="#00cc00"/><rect x="776" y="312.7" width="2" height="1" fill="#00b800"/><rect x="779" y="311.6" width="2" height="1" fill="#00b800"/><rect x="784" y="290.5" width="1" height="20.8" fill="#00cc00"/><rect x="782" y="298.2" width="2" height="1" fill="#00b800"/><rect x="785" y="295.5" width="2" height="1" fill="#00b800"/><rect x="790" y="274.8" width="1" height="17.4" fill="#00cc00"/><rect x="788" y="287.2" width="2" height="1" fill="#00b800"/><rect x="791" y="288.6" width="2" height="1" fill="#00b800"/><rect x="796" y="274.8" width="1" height="13.9" fill="#00cc00"/><rect x="794" y="278.3" width="2" height="1" fill="#00b800"/><rect x="797" y="284.3" width="2" height="1" fill="#00b800"/><rect x="802" y="285.2" width="1" height="8.8" fill="#00cc00"/><rect x="800" y="289.1" width="2" height="1" fill="#00b800"/><rect x="803" y="287.8" width="2" height="1" fill="#00b800"/><rect x="808" y="288.7" width="1" height="8.7" fill="#00cc00"/><rect x="806" y="292.0" width="2" height="1" fill="#00b800"/><rect x="809" y="294.5" width="2" height="1" fill="#00b800"/><rect x="814" y="290.4" width="1" height="8.6" fill="#00cc00"/><rect x="812" y="296.6" width="2" height="1" fill="#00b800"/><rect x="815" y="292.3" width="2" height="1" fill="#00b800"/><rect x="820" y="294.0" width="1" height="8.6" fill="#00cc00"/><rect x="818" y="298.9" width="2" height="1" fill="#00b800"/><rect x="821" y="296.0" width="2" height="1" fill="#00b800"/><rect x="826" y="294.0" width="1" height="13.8" fill="#00cc00"/><rect x="824" y="302.7" width="2" height="1" fill="#00b800"/><rect x="827" y="299.5" width="2" height="1" fill="#00b800"/><rect x="832" y="304.3" width="1" height="7.0" fill="#00cc00"/><rect x="830" y="309.4" width="2" height="1" fill="#00b800"/><rect x="833" y="309.8" width="2" height="1" fill="#00b800"/><rect x="838" y="307.8" width="1" height="10.5" fill="#00cc00"/><rect x="836" y="313.1" width="2" height="1" fill="#00b800"/><rect x="839" y="316.2" width="2" height="1" fill="#00b800"/><rect x="844" y="313.0" width="1" height="10.5" fill="#00cc00"/><rect x="842" y="317.1" width="2" height="1" fill="#00b800"/><rect x="845" y="315.6" width="2" height="1" fill="#00b800"/><rect x="850" y="313.0" width="1" height="12.2" fill="#00cc00"/><rect x="848" y="319.8" width="2" height="1" fill="#00b800"/><rect x="851" y="315.7" width="2" height="1" fill="#00b800"/><rect x="856" y="300.9" width="1" height="12.1" fill="#00cc00"/><rect x="854" y="304.8" width="2" height="1" fill="#00b800"/><rect x="857" y="306.3" width="2" height="1" fill="#00b800"/><rect x="862" y="304.3" width="1" height="15.7" fill="#00cc00"/><rect x="860" y="313.2" width="2" height="1" fill="#00b800"/><rect x="863" y="308.9" width="2" height="1" fill="#00b800"/><rect x="868" y="313.0" width="1" height="8.7" fill="#00cc00"/><rect x="866" y="315.0" width="2" height="1" fill="#00b800"/><rect x="869" y="319.3" width="2" height="1" fill="#00b800"/><rect x="874" y="313.0" width="1" height="7.0" fill="#00cc00"/><rect x="872" y="315.7" width="2" height="1" fill="#00b800"/><rect x="875" y="318.4" width="2" height="1" fill="#00b800"/><rect x="880" y="316.5" width="1" height="7.0" fill="#00cc00"/><rect x="878" y="321.7" width="2" height="1" fill="#00b800"/><rect x="881" y="319.5" width="2" height="1" fill="#00b800"/><rect x="886" y="314.8" width="1" height="15.6" fill="#00cc00"/><rect x="884" y="322.2" width="2" height="1" fill="#00b800"/><rect x="887" y="322.8" width="2" height="1" fill="#00b800"/><rect x="892" y="318.3" width="1" height="8.7" fill="#00cc00"/><rect x="890" y="323.4" width="2" height="1" fill="#00b800"/><rect x="893" y="323.1" width="2" height="1" fill="#00b800"/><rect x="898" y="311.3" width="1" height="10.4" fill="#00cc00"/><rect x="896" y="316.9" width="2" height="1" fill="#00b800"/><rect x="899" y="317.2" width="2" height="1" fill="#00b800"/><rect x="904" y="307.8" width="1" height="12.2" fill="#00cc00"/><rect x="902" y="317.1" width="2" height="1" fill="#00b800"/><rect x="905" y="314.0" width="2" height="1" fill="#00b800"/><rect x="910" y="309.6" width="1" height="13.9" fill="#00cc00"/><rect x="908" y="316.0" width="2" height="1" fill="#00b800"/><rect x="911" y="318.4" width="2" height="1" fill="#00b800"/><rect x="916" y="313.0" width="1" height="8.7" fill="#00cc00"/><rect x="914" y="316.0" width="2" height="1" fill="#00b800"/><rect x="917" y="316.3" width="2" height="1" fill="#00b800"/><rect x="922" y="313.0" width="1" height="7.0" fill="#00cc00"/><rect x="920" y="318.5" width="2" height="1" fill="#00b800"/><rect x="923" y="316.6" width="2" height="1" fill="#00b800"/><rect x="928" y="309.6" width="1" height="13.9" fill="#00cc00"/><rect x="926" y="317.0" width="2" height="1" fill="#00b800"/><rect x="929" y="312.5" width="2" height="1" fill="#00b800"/><rect x="934" y="313.0" width="1" height="10.5" fill="#00cc00"/><rect x="932" y="317.7" width="2" height="1" fill="#00b800"/><rect x="935" y="318.8" width="2" height="1" fill="#00b800"/><rect x="940" y="313.0" width="1" height="7.0" fill="#00cc00"/><rect x="938" y="314.5" width="2" height="1" fill="#00b800"/><rect x="941" y="317.0" width="2" height="1" fill="#00b800"/><rect x="946" y="307.8" width="1" height="10.5" fill="#00cc00"/><rect x="944" y="313.9" width="2" height="1" fill="#00b800"/><rect x="947" y="310.3" width="2" height="1" fill="#00b800"/><rect x="952" y="304.3" width="1" height="8.7" fill="#00cc00"/><rect x="950" y="309.3" width="2" height="1" fill="#00b800"/><rect x="953" y="308.5" width="2" height="1" fill="#00b800"/><rect x="958" y="304.3" width="1" height="7.0" fill="#00cc00"/><rect x="956" y="308.6" width="2" height="1" fill="#00b800"/><rect x="959" y="307.2" width="2" height="1" fill="#00b800"/><rect x="964" y="302.6" width="1" height="7.0" fill="#00cc00"/><rect x="962" y="307.0" width="2" height="1" fill="#00b800"/><rect x="965" y="307.1" width="2" height="1" fill="#00b800"/><rect x="592" y="368.7" width="1" height="17.3" fill="#e81010"/><rect x="598" y="364.0" width="1" height="22.0" fill="#0a8a0a"/><rect x="604" y="373.3" width="1" height="12.7" fill="#e81010"/><rect x="610" y="372.3" width="1" height="13.7" fill="#0a8a0a"/><rect x="616" y="363.2" width="1" height="22.8" fill="#0a8a0a"/><rect x="622" y="369.6" width="1" height="16.4" fill="#e81010"/><rect x="628" y="360.4" width="1" height="25.6" fill="#0a8a0a"/><rect x="634" y="364.0" width="1" height="22.0" fill="#e81010"/><rect x="640" y="370.5" width="1" height="15.5" fill="#e81010"/><rect x="646" y="360.4" width="1" height="25.6" fill="#0a8a0a"/><rect x="652" y="365.0" width="1" height="21.0" fill="#0a8a0a"/><rect x="658" y="362.3" width="1" height="23.7" fill="#0a8a0a"/><rect x="664" y="366.8" width="1" height="19.2" fill="#e81010"/><rect x="670" y="373.3" width="1" height="12.7" fill="#e81010"/><rect x="676" y="366.8" width="1" height="19.2" fill="#0a8a0a"/><rect x="682" y="365.5" width="1" height="20.5" fill="#0a8a0a"/><rect x="688" y="369.9" width="1" height="16.1" fill="#e81010"/><rect x="694" y="368.4" width="1" height="17.6" fill="#0a8a0a"/><rect x="700" y="366.1" width="1" height="19.9" fill="#0a8a0a"/><rect x="706" y="367.0" width="1" height="19.0" fill="#e81010"/><rect x="712" y="369.9" width="1" height="16.1" fill="#e81010"/><rect x="718" y="364.0" width="1" height="22.0" fill="#0a8a0a"/><rect x="724" y="364.9" width="1" height="21.1" fill="#e81010"/><rect x="730" y="363.2" width="1" height="22.8" fill="#0a8a0a"/><rect x="736" y="367.0" width="1" height="19.0" fill="#e81010"/><rect x="742" y="371.4" width="1" height="14.6" fill="#e81010"/><rect x="748" y="368.4" width="1" height="17.6" fill="#0a8a0a"/><rect x="754" y="366.1" width="1" height="19.9" fill="#0a8a0a"/><rect x="760" y="364.0" width="1" height="22.0" fill="#0a8a0a"/><rect x="766" y="367.0" width="1" height="19.0" fill="#e81010"/><rect x="772" y="366.1" width="1" height="19.9" fill="#0a8a0a"/><rect x="778" y="368.4" width="1" height="17.6" fill="#e81010"/><rect x="784" y="362.6" width="1" height="23.4" fill="#0a8a0a"/><rect x="790" y="363.2" width="1" height="22.8" fill="#0a8a0a"/><rect x="796" y="352.3" width="1" height="33.7" fill="#0a8a0a"/><rect x="802" y="364.0" width="1" height="22.0" fill="#e81010"/><rect x="808" y="364.9" width="1" height="21.1" fill="#0a8a0a"/><rect x="814" y="362.0" width="1" height="24.0" fill="#0a8a0a"/><rect x="820" y="367.0" width="1" height="19.0" fill="#e81010"/><rect x="826" y="368.4" width="1" height="17.6" fill="#e81010"/><rect x="832" y="364.9" width="1" height="21.1" fill="#0a8a0a"/><rect x="838" y="365.5" width="1" height="20.5" fill="#e81010"/><rect x="844" y="364.9" width="1" height="21.1" fill="#0a8a0a"/><rect x="850" y="360.2" width="1" height="25.8" fill="#0a8a0a"/><rect x="856" y="364.9" width="1" height="21.1" fill="#e81010"/><rect x="862" y="367.0" width="1" height="19.0" fill="#e81010"/><rect x="868" y="360.2" width="1" height="25.8" fill="#0a8a0a"/><rect x="874" y="367.0" width="1" height="19.0" fill="#e81010"/><rect x="880" y="368.4" width="1" height="17.6" fill="#e81010"/><rect x="886" y="364.9" width="1" height="21.1" fill="#0a8a0a"/><rect x="892" y="366.1" width="1" height="19.9" fill="#e81010"/><rect x="898" y="369.9" width="1" height="16.1" fill="#e81010"/><rect x="904" y="369.0" width="1" height="17.0" fill="#0a8a0a"/><rect x="910" y="366.1" width="1" height="19.9" fill="#0a8a0a"/><rect x="916" y="371.4" width="1" height="14.6" fill="#e81010"/><rect x="922" y="367.9" width="1" height="18.1" fill="#0a8a0a"/><rect x="928" y="367.9" width="1" height="18.1" fill="#0a8a0a"/><rect x="934" y="367.9" width="1" height="18.1" fill="#e81010"/><rect x="940" y="369.0" width="1" height="17.0" fill="#e81010"/><rect x="946" y="376.6" width="1" height="9.4" fill="#e81010"/><rect x="952" y="374.3" width="1" height="11.7" fill="#0a8a0a"/><rect x="958" y="373.7" width="1" height="12.3" fill="#0a8a0a"/><rect x="964" y="375.8" width="1" height="10.2" fill="#e81010"/><polyline points="151.5,385.0 154.0,384.5 157.5,383.8 161.7,383.0 166.2,382.2 170.7,381.3 175.0,380.5 179.1,379.7 183.4,378.9 187.7,378.1 192.0,377.3 196.1,376.6 200.0,376.0 203.6,375.5 207.0,375.2 210.2,374.9 213.4,374.7 216.7,374.4 220.0,373.9 223.4,373.3 226.9,372.7 230.4,372.1 234.0,371.3 237.5,370.5 241.0,369.5 244.6,368.3 248.3,367.0 252.0,365.6 255.6,364.1 259.0,362.7 262.0,361.5 264.7,360.4 267.1,359.4 269.3,358.5 271.3,357.7 273.2,356.9 275.0,356.2 276.6,355.6 277.9,355.0 279.1,354.5 280.2,354.1 281.5,353.8 283.0,353.5 284.8,353.3 286.8,353.2 288.9,353.2 291.0,353.3 293.1,353.4 295.0,353.7 296.8,354.1 298.4,354.7 300.1,355.3 301.7,356.0 303.3,356.8 305.0,357.5 306.6,358.2 308.0,358.9 309.5,359.6 311.2,360.3 313.3,361.2 316.0,362.3 319.5,363.7 323.6,365.3 328.2,367.1 332.9,368.8 337.6,370.3 342.0,371.5 345.5,372.3 348.3,372.8 351.0,373.2 354.4,373.4 359.1,373.5 366.0,373.6 376.0,373.7 388.6,373.8 402.7,373.8 416.9,373.7 429.7,373.4 440.0,373.0 447.4,372.2 453.0,371.1 457.3,369.8 460.9,368.6 464.5,367.6 468.5,367.0 472.8,366.9 476.7,367.2 480.5,367.7 484.5,368.3 488.9,368.7 494.0,369.0 500.3,369.0 507.7,368.9 515.6,368.6 523.1,368.4 529.5,368.1 534.0,368.0" fill="none" stroke="#e00000" stroke-width="1.2" stroke-dasharray="2,2"/><polyline points="592.0,372.5 604.0,375.5 616.4,381.5 628.0,378.5 640.6,361.0 646.6,363.0 652.0,367.0 658.5,371.0 664.0,373.3 670.4,374.5 676.8,371.5 680.0,377.2 688.8,379.6 697.6,375.0 712.2,370.0 721.0,372.8 731.3,370.8 741.5,374.3 754.7,353.8 760.6,351.4 768.0,355.3 778.2,362.6 789.9,355.3 803.0,364.0 826.5,370.0 844.0,382.5 855.8,377.8 867.5,380.2 885.0,382.5 904.0,370.8 911.5,374.3 923.2,370.8 937.8,372.8 946.6,359.6 952.5,355.3 962.7,359.6" fill="none" stroke="#1f9090" stroke-width="1"/></svg>
<svg style="position:absolute;left:154px;top:273px" width="6" height="4"><path d="M0 0H6L3 3.5Z" fill="#fff"/></svg>
<span id="t94" style="transform:scaleX(0.8109);transform-origin:0 0;position:absolute;left:163.00px;top:270.80px;font-size:8.6px;line-height:9.606px;color:#e8e8e8;font-weight:normal;white-space:nowrap;font-family:'Liberation Sans', sans-serif;">GBPUSD,M1&nbsp;&nbsp;1.10589 1.10668 1.10566 1.10667</span>
<span id="t95" style="transform:scaleX(0.8188);transform-origin:0 0;position:absolute;left:154.80px;top:352.00px;font-size:8.6px;line-height:9.606px;color:#e8e8e8;font-weight:normal;white-space:nowrap;font-family:'Liberation Sans', sans-serif;">MACD(12,26,9) 0.000445 0.000447</span>
<span id="t96" style="transform:scaleX(0.8400);transform-origin:0 0;position:absolute;left:543.70px;top:267.30px;font-size:8.6px;line-height:9.606px;color:#e8e8e8;font-weight:normal;white-space:nowrap;font-family:'Liberation Sans', sans-serif;">1.10870</span>
<span id="t97" style="transform:scaleX(0.8400);transform-origin:0 0;position:absolute;left:543.70px;top:291.70px;font-size:8.6px;line-height:9.606px;color:#e8e8e8;font-weight:normal;white-space:nowrap;font-family:'Liberation Sans', sans-serif;">1.10460</span>
<span id="t98" style="transform:scaleX(0.8400);transform-origin:0 0;position:absolute;left:543.70px;top:316.70px;font-size:8.6px;line-height:9.606px;color:#e8e8e8;font-weight:normal;white-space:nowrap;font-family:'Liberation Sans', sans-serif;">1.10040</span>
<span id="t99" style="transform:scaleX(0.8400);transform-origin:0 0;position:absolute;left:543.70px;top:341.10px;font-size:8.6px;line-height:9.606px;color:#e8e8e8;font-weight:normal;white-space:nowrap;font-family:'Liberation Sans', sans-serif;">1.09630</span>
<span id="t100" style="transform:scaleX(0.8400);transform-origin:0 0;position:absolute;left:543.70px;top:350.10px;font-size:8.6px;line-height:9.606px;color:#e8e8e8;font-weight:normal;white-space:nowrap;font-family:'Liberation Sans', sans-serif;">0.001858</span>
<span id="t101" style="transform:scaleX(0.8400);transform-origin:0 0;position:absolute;left:543.70px;top:369.60px;font-size:8.6px;line-height:9.606px;color:#e8e8e8;font-weight:normal;white-space:nowrap;font-family:'Liberation Sans', sans-serif;">0.00</span>
<span id="t102" style="transform:scaleX(0.8400);transform-origin:0 0;position:absolute;left:542.70px;top:378.00px;font-size:8.6px;line-height:9.606px;color:#e8e8e8;font-weight:normal;white-space:nowrap;font-family:'Liberation Sans', sans-serif;">-0.000998</span>
<div style="position:absolute;left:542px;top:279.5px;width:30px;height:8px;background:#fff"></div>
<span id="t103" style="transform:scaleX(0.8044);transform-origin:0 0;position:absolute;left:544.00px;top:279.50px;font-size:8.6px;line-height:9.606px;color:#000;font-weight:normal;white-space:nowrap;font-family:'Liberation Sans', sans-serif;">1.10667</span>
<span id="t104" style="transform:scaleX(0.8115);transform-origin:0 0;position:absolute;left:151.50px;top:390.00px;font-size:8.6px;line-height:9.606px;color:#e8e8e8;font-weight:normal;white-space:nowrap;font-family:'Liberation Sans', sans-serif;">12 Oct 2022</span>
<span id="t105" style="transform:scaleX(0.8337);transform-origin:0 0;position:absolute;left:199.50px;top:390.00px;font-size:8.6px;line-height:9.606px;color:#e8e8e8;font-weight:normal;white-space:nowrap;font-family:'Liberation Sans', sans-serif;">12 Oct 11:07</span>
<span id="t106" style="transform:scaleX(0.8337);transform-origin:0 0;position:absolute;left:247.50px;top:390.00px;font-size:8.6px;line-height:9.606px;color:#e8e8e8;font-weight:normal;white-space:nowrap;font-family:'Liberation Sans', sans-serif;">12 Oct 11:23</span>
<span id="t107" style="transform:scaleX(0.8337);transform-origin:0 0;position:absolute;left:295.50px;top:390.00px;font-size:8.6px;line-height:9.606px;color:#e8e8e8;font-weight:normal;white-space:nowrap;font-family:'Liberation Sans', sans-serif;">12 Oct 11:39</span>
<span id="t108" style="transform:scaleX(0.8337);transform-origin:0 0;position:absolute;left:343.50px;top:390.00px;font-size:8.6px;line-height:9.606px;color:#e8e8e8;font-weight:normal;white-space:nowrap;font-family:'Liberation Sans', sans-serif;">12 Oct 11:55</span>
<span id="t109" style="transform:scaleX(0.8337);transform-origin:0 0;position:absolute;left:391.50px;top:390.00px;font-size:8.6px;line-height:9.606px;color:#e8e8e8;font-weight:normal;white-space:nowrap;font-family:'Liberation Sans', sans-serif;">12 Oct 12:11</span>
<span id="t110" style="transform:scaleX(0.8229);transform-origin:0 0;position:absolute;left:439.50px;top:390.00px;font-size:8.6px;line-height:9.606px;color:#e8e8e8;font-weight:normal;white-space:nowrap;font-family:'Liberation Sans', sans-serif;">12 Oct 12:27</span>
<span id="t111" style="transform:scaleX(0.8229);transform-origin:0 0;position:absolute;left:487.50px;top:390.00px;font-size:8.6px;line-height:9.606px;color:#e8e8e8;font-weight:normal;white-space:nowrap;font-family:'Liberation Sans', sans-serif;">12 Oct 12:43</span>
<svg style="position:absolute;left:594px;top:273px" width="6" height="4"><path d="M0 0H6L3 3.5Z" fill="#fff"/></svg>
<span id="t112" style="transform:scaleX(0.8099);transform-origin:0 0;position:absolute;left:603.00px;top:270.80px;font-size:8.6px;line-height:9.606px;color:#e8e8e8;font-weight:normal;white-space:nowrap;font-family:'Liberation Sans', sans-serif;">AUDUSD,M1&nbsp;&nbsp;0.62668 0.62676 0.62661 0.62673</span>
<span id="t113" style="transform:scaleX(0.8178);transform-origin:0 0;position:absolute;left:594.80px;top:352.00px;font-size:8.6px;line-height:9.606px;color:#e8e8e8;font-weight:normal;white-space:nowrap;font-family:'Liberation Sans', sans-serif;">CCI(14) 147.1528&nbsp;&nbsp;Volumes 58</span>
<span id="t114" style="transform:scaleX(0.8400);transform-origin:0 0;position:absolute;left:983.70px;top:289.90px;font-size:8.6px;line-height:9.606px;color:#e8e8e8;font-weight:normal;white-space:nowrap;font-family:'Liberation Sans', sans-serif;">0.62700</span>
<span id="t115" style="transform:scaleX(0.8400);transform-origin:0 0;position:absolute;left:983.70px;top:316.70px;font-size:8.6px;line-height:9.606px;color:#e8e8e8;font-weight:normal;white-space:nowrap;font-family:'Liberation Sans', sans-serif;">0.62635</span>
<span id="t116" style="transform:scaleX(0.8400);transform-origin:0 0;position:absolute;left:983.70px;top:341.00px;font-size:8.6px;line-height:9.606px;color:#e8e8e8;font-weight:normal;white-space:nowrap;font-family:'Liberation Sans', sans-serif;">0.62575</span>
<span id="t117" style="transform:scaleX(0.8400);transform-origin:0 0;position:absolute;left:983.70px;top:350.00px;font-size:8.6px;line-height:9.606px;color:#e8e8e8;font-weight:normal;white-space:nowrap;font-family:'Liberation Sans', sans-serif;">267.6574</span>
<span id="t118" style="transform:scaleX(0.8400);transform-origin:0 0;position:absolute;left:983.70px;top:360.50px;font-size:8.6px;line-height:9.606px;color:#e8e8e8;font-weight:normal;white-space:nowrap;font-family:'Liberation Sans', sans-serif;">100</span>
<span id="t119" style="transform:scaleX(0.8400);transform-origin:0 0;position:absolute;left:983.70px;top:369.20px;font-size:8.6px;line-height:9.606px;color:#e8e8e8;font-weight:normal;white-space:nowrap;font-family:'Liberation Sans', sans-serif;">0.00</span>
<span id="t120" style="transform:scaleX(0.8400);transform-origin:0 0;position:absolute;left:982.70px;top:378.00px;font-size:8.6px;line-height:9.606px;color:#e8e8e8;font-weight:normal;white-space:nowrap;font-family:'Liberation Sans', sans-serif;">-100</span>
<span id="t121" style="transform:scaleX(0.8400);transform-origin:0 0;position:absolute;left:982.70px;top:378.00px;font-size:8.6px;line-height:9.606px;color:#e8e8e8;font-weight:normal;white-space:nowrap;font-family:'Liberation Sans', sans-serif;">-158.7364</span>
<div style="position:absolute;left:982px;top:301.4px;width:30px;height:8px;background:#fff"></div>
<span id="t122" style="transform:scaleX(0.8044);transform-origin:0 0;position:absolute;left:984.00px;top:301.40px;font-size:8.6px;line-height:9.606px;color:#000;font-weight:normal;white-space:nowrap;font-family:'Liberation Sans', sans-serif;">0.62673</span>
<span id="t123" style="transform:scaleX(0.8115);transform-origin:0 0;position:absolute;left:591.50px;top:390.00px;font-size:8.6px;line-height:9.606px;color:#e8e8e8;font-weight:normal;white-space:nowrap;font-family:'Liberation Sans', sans-serif;">12 Oct 2022</span>
<span id="t124" style="transform:scaleX(0.8229);transform-origin:0 0;position:absolute;left:639.50px;top:390.00px;font-size:8.6px;line-height:9.606px;color:#e8e8e8;font-weight:normal;white-space:nowrap;font-family:'Liberation Sans', sans-serif;">12 Oct 12:04</span>
<span id="t125" style="transform:scaleX(0.8229);transform-origin:0 0;position:absolute;left:687.50px;top:390.00px;font-size:8.6px;line-height:9.606px;color:#e8e8e8;font-weight:normal;white-space:nowrap;font-family:'Liberation Sans', sans-serif;">12 Oct 12:12</span>
<span id="t126" style="transform:scaleX(0.8229);transform-origin:0 0;position:absolute;left:735.50px;top:390.00px;font-size:8.6px;line-height:9.606px;color:#e8e8e8;font-weight:normal;white-space:nowrap;font-family:'Liberation Sans', sans-serif;">12 Oct 12:20</span>
<span id="t127" style="transform:scaleX(0.8229);transform-origin:0 0;position:absolute;left:783.50px;top:390.00px;font-size:8.6px;line-height:9.606px;color:#e8e8e8;font-weight:normal;white-space:nowrap;font-family:'Liberation Sans', sans-serif;">12 Oct 12:28</span>
<span id="t128" style="transform:scaleX(0.8229);transform-origin:0 0;position:absolute;left:831.50px;top:390.00px;font-size:8.6px;line-height:9.606px;color:#e8e8e8;font-weight:normal;white-space:nowrap;font-family:'Liberation Sans', sans-serif;">12 Oct 12:36</span>
<span id="t129" style="transform:scaleX(0.8229);transform-origin:0 0;position:absolute;left:879.50px;top:390.00px;font-size:8.6px;line-height:9.606px;color:#e8e8e8;font-weight:normal;white-space:nowrap;font-family:'Liberation Sans', sans-serif;">12 Oct 12:44</span>
<span id="t130" style="transform:scaleX(0.8229);transform-origin:0 0;position:absolute;left:927.50px;top:390.00px;font-size:8.6px;line-height:9.606px;color:#e8e8e8;font-weight:normal;white-space:nowrap;font-family:'Liberation Sans', sans-serif;">12 Oct 12:52</span>
<svg style="position:absolute;left:0;top:0" width="1024" height="546"><clipPath id="ca"><rect x="151" y="101" width="389" height="118"/></clipPath><clipPath id="cb"><rect x="591" y="101" width="389" height="118"/></clipPath><g clip-path="url(#ca)"><polyline points="151.0,131.0 153.3,132.4 156.4,134.3 160.1,136.6 164.1,139.0 168.2,141.6 172.0,144.0 175.6,146.5 179.3,149.1 182.9,151.9 186.6,154.5 190.3,156.9 194.0,159.0 197.7,160.6 201.3,161.9 205.0,162.9 208.7,163.8 212.3,164.8 216.0,166.0 219.8,167.4 223.7,169.0 227.6,170.6 231.4,172.1 234.9,173.5 238.0,174.7 240.5,175.6 242.6,176.2 244.3,176.7 246.0,177.1 247.8,177.5 250.0,178.0 252.6,178.6 255.5,179.3 258.6,179.9 261.6,180.6 264.5,181.2 267.0,181.8 269.0,182.2 270.6,182.5 272.1,182.8 273.6,183.2 275.5,183.7 278.0,184.6 281.4,185.9 285.5,187.7 290.0,189.7 294.5,191.6 298.6,193.3 302.0,194.5 304.5,195.2 306.5,195.7 308.0,195.9 309.5,195.9 311.1,195.8 313.0,195.6 315.4,195.3 318.0,194.7 320.7,194.0 323.5,193.3 326.1,192.6 328.5,191.9 330.7,191.3 332.9,190.6 334.9,190.0 336.8,189.4 338.5,188.9 340.0,188.4 341.1,188.1 341.7,188.1 342.2,188.1 342.7,188.0 343.5,187.6 345.0,186.8 347.1,185.5 349.6,183.9 352.4,182.0 355.5,179.9 358.7,177.8 362.0,175.8 365.5,173.8 369.3,171.6 373.2,169.4 377.1,167.3 380.8,165.4 384.0,163.7 386.7,162.3 389.1,161.0 391.2,159.9 393.1,159.0 395.1,158.2 397.0,157.6 398.9,157.2 400.7,157.0 402.5,156.9 404.3,157.0 406.1,157.0 408.0,157.0 410.1,156.9 412.3,156.8 414.5,156.7 416.7,156.6 418.9,156.6 421.0,156.7 423.0,156.9 424.9,157.2 426.8,157.6 428.6,158.0 430.4,158.5 432.0,158.9 433.4,159.3 434.5,159.5 435.6,159.9 436.7,160.2 438.1,160.8 440.0,161.5 442.4,162.5 445.1,163.8 448.1,165.3 451.3,166.7 454.7,168.1 458.0,169.2 461.4,170.1 465.0,170.8 468.8,171.4 472.5,172.0 476.3,172.5 480.0,173.0 483.8,173.5 487.7,173.9 491.7,174.3 495.5,174.6 499.0,174.9 502.0,175.2 504.5,175.5 506.5,175.7 508.2,175.9 509.8,176.1 511.4,176.3 513.0,176.5 514.8,176.8 516.8,177.0 518.7,177.3 520.4,177.6 521.9,177.8 523.0,178.0" fill="none" stroke="#c00000" stroke-width="1"/></g><g clip-path="url(#cb)"><polyline points="591.0,207.7 593.3,206.9 596.4,205.7 600.1,204.3 604.1,202.9 608.2,201.4 612.0,200.0 615.6,198.7 619.3,197.5 622.9,196.3 626.6,195.0 630.3,193.7 634.0,192.3 637.8,190.8 641.7,189.1 645.7,187.4 649.5,185.7 653.0,184.0 656.0,182.4 658.5,180.9 660.5,179.4 662.2,178.0 663.7,176.6 665.3,175.1 667.0,173.6 668.8,172.0 670.6,170.3 672.4,168.5 674.3,166.8 676.1,165.2 678.0,163.7 679.9,162.4 681.7,161.3 683.6,160.2 685.6,159.2 687.7,158.0 690.0,156.7 692.5,155.1 695.1,153.4 697.9,151.6 700.8,149.8 703.8,148.0 707.0,146.2 710.5,144.5 714.3,142.7 718.2,141.0 722.1,139.3 725.8,137.7 729.0,136.3 731.8,135.0 734.3,133.7 736.5,132.5 738.6,131.5 740.6,130.8 742.6,130.3 744.5,130.2 746.3,130.4 748.0,130.8 749.6,131.3 751.3,131.9 753.0,132.5 754.7,132.9 756.3,133.4 757.8,133.8 759.6,134.4 761.6,135.2 764.0,136.3 767.0,137.8 770.4,139.7 774.1,141.8 777.9,144.0 781.6,146.1 785.0,148.0 788.0,149.6 790.8,151.0 793.4,152.4 796.1,153.8 798.9,155.3 802.0,157.0 805.5,159.1 809.5,161.4 813.5,163.9 817.5,166.4 821.0,168.5 824.0,170.3 826.2,171.6 827.7,172.7 828.9,173.6 830.0,174.2 831.1,174.6 832.7,174.7 834.7,174.5 836.9,174.0 839.2,173.3 841.6,172.4 843.9,171.5 846.0,170.8 848.0,170.2 849.8,169.6 851.6,169.1 853.4,168.5 855.2,167.8 857.0,167.0 858.8,166.1 860.6,165.1 862.4,164.0 864.3,162.9 866.1,161.7 868.0,160.4 870.0,159.0 872.1,157.5 874.3,156.0 876.4,154.5 878.3,153.0 880.0,151.6 881.3,150.4 882.3,149.2 883.1,148.2 883.9,147.1 884.8,146.1 886.0,145.0 887.5,143.9 889.3,142.8 891.2,141.6 893.1,140.5 895.1,139.5 897.0,138.5 898.8,137.6 900.7,136.8 902.5,136.0 904.3,135.2 906.2,134.6 908.0,134.0 909.7,133.5 911.3,133.1 913.0,132.8 914.7,132.5 916.7,132.2 919.0,131.9 921.9,131.6 925.2,131.2 928.7,130.9 932.3,130.6 935.7,130.4 938.7,130.3 941.3,130.3 943.7,130.4 945.8,130.5 947.9,130.7 949.9,130.9 952.0,131.2 954.2,131.5 956.5,131.9 958.8,132.4 960.9,132.8 962.7,133.1 964.0,133.4" fill="none" stroke="#c00000" stroke-width="1"/></g></svg>
<svg style="position:absolute;left:154px;top:105px" width="6" height="4"><path d="M0 0H6L3 3.5Z" fill="#fff"/></svg>
<span id="t131" style="transform:scaleX(0.8083);transform-origin:0 0;position:absolute;left:163.40px;top:103.00px;font-size:8.6px;line-height:9.606px;color:#e8e8e8;font-weight:normal;white-space:nowrap;font-family:'Liberation Sans', sans-serif;">EURUSD,M1&nbsp;&nbsp;0.97032 0.97064 0.97027 0.97063</span>
<span id="t132" style="transform:scaleX(0.8366);transform-origin:0 0;position:absolute;left:544.00px;top:112.00px;font-size:8.6px;line-height:9.606px;color:#e8e8e8;font-weight:normal;white-space:nowrap;font-family:'Liberation Sans', sans-serif;">0.97155</span>
<div style="position:absolute;left:541px;top:116px;width:2px;height:1px;background:#c8c8c8"></div>
<span id="t133" style="transform:scaleX(0.8542);transform-origin:0 0;position:absolute;left:544.00px;top:137.10px;font-size:8.6px;line-height:9.606px;color:#e8e8e8;font-weight:normal;white-space:nowrap;font-family:'Liberation Sans', sans-serif;">0.97110</span>
<div style="position:absolute;left:541px;top:141px;width:2px;height:1px;background:#c8c8c8"></div>
<span id="t134" style="transform:scaleX(0.8366);transform-origin:0 0;position:absolute;left:544.00px;top:187.30px;font-size:8.6px;line-height:9.606px;color:#e8e8e8;font-weight:normal;white-space:nowrap;font-family:'Liberation Sans', sans-serif;">0.97020</span>
<div style="position:absolute;left:541px;top:191px;width:2px;height:1px;background:#c8c8c8"></div>
<span id="t135" style="transform:scaleX(0.8366);transform-origin:0 0;position:absolute;left:544.00px;top:212.40px;font-size:8.6px;line-height:9.606px;color:#e8e8e8;font-weight:normal;white-space:nowrap;font-family:'Liberation Sans', sans-serif;">0.96975</span>
<div style="position:absolute;left:541px;top:216px;width:2px;height:1px;background:#c8c8c8"></div>
<div style="position:absolute;left:542px;top:163.3px;width:31px;height:8px;background:#fff"></div>
<span id="t136" style="transform:scaleX(0.8366);transform-origin:0 0;position:absolute;left:544.00px;top:163.30px;font-size:8.6px;line-height:9.606px;color:#000;font-weight:normal;white-space:nowrap;font-family:'Liberation Sans', sans-serif;">0.97063</span>
<span id="t137" style="transform:scaleX(0.8115);transform-origin:0 0;position:absolute;left:151.50px;top:222.20px;font-size:8.6px;line-height:9.606px;color:#e8e8e8;font-weight:normal;white-space:nowrap;font-family:'Liberation Sans', sans-serif;">12 Oct 2022</span>
<span id="t138" style="transform:scaleX(0.8229);transform-origin:0 0;position:absolute;left:199.50px;top:222.20px;font-size:8.6px;line-height:9.606px;color:#e8e8e8;font-weight:normal;white-space:nowrap;font-family:'Liberation Sans', sans-serif;">12 Oct 12:04</span>
<span id="t139" style="transform:scaleX(0.8229);transform-origin:0 0;position:absolute;left:247.50px;top:222.20px;font-size:8.6px;line-height:9.606px;color:#e8e8e8;font-weight:normal;white-space:nowrap;font-family:'Liberation Sans', sans-serif;">12 Oct 12:12</span>
<span id="t140" style="transform:scaleX(0.8229);transform-origin:0 0;position:absolute;left:295.50px;top:222.20px;font-size:8.6px;line-height:9.606px;color:#e8e8e8;font-weight:normal;white-space:nowrap;font-family:'Liberation Sans', sans-serif;">12 Oct 12:20</span>
<span id="t141" style="transform:scaleX(0.8229);transform-origin:0 0;position:absolute;left:343.50px;top:222.20px;font-size:8.6px;line-height:9.606px;color:#e8e8e8;font-weight:normal;white-space:nowrap;font-family:'Liberation Sans', sans-serif;">12 Oct 12:28</span>
<span id="t142" style="transform:scaleX(0.8229);transform-origin:0 0;position:absolute;left:391.50px;top:222.20px;font-size:8.6px;line-height:9.606px;color:#e8e8e8;font-weight:normal;white-space:nowrap;font-family:'Liberation Sans', sans-serif;">12 Oct 12:36</span>
<span id="t143" style="transform:scaleX(0.8229);transform-origin:0 0;position:absolute;left:439.50px;top:222.20px;font-size:8.6px;line-height:9.606px;color:#e8e8e8;font-weight:normal;white-space:nowrap;font-family:'Liberation Sans', sans-serif;">12 Oct 12:44</span>
<span id="t144" style="transform:scaleX(0.8229);transform-origin:0 0;position:absolute;left:487.50px;top:222.20px;font-size:8.6px;line-height:9.606px;color:#e8e8e8;font-weight:normal;white-space:nowrap;font-family:'Liberation Sans', sans-serif;">12 Oct 12:52</span>
<svg style="position:absolute;left:594px;top:105px" width="6" height="4"><path d="M0 0H6L3 3.5Z" fill="#fff"/></svg>
<span id="t145" style="transform:scaleX(0.8128);transform-origin:0 0;position:absolute;left:603.40px;top:103.00px;font-size:8.6px;line-height:9.606px;color:#e8e8e8;font-weight:normal;white-space:nowrap;font-family:'Liberation Sans', sans-serif;">USDJPY,M1&nbsp;&nbsp;146.377 146.393 146.373 146.373</span>
<span id="t146" style="transform:scaleX(0.7722);transform-origin:0 0;position:absolute;left:984.00px;top:108.00px;font-size:8.6px;line-height:9.606px;color:#e8e8e8;font-weight:normal;white-space:nowrap;font-family:'Liberation Sans', sans-serif;">146.425</span>
<div style="position:absolute;left:981px;top:112px;width:2px;height:1px;background:#c8c8c8"></div>
<span id="t147" style="transform:scaleX(0.7722);transform-origin:0 0;position:absolute;left:984.00px;top:133.60px;font-size:8.6px;line-height:9.606px;color:#e8e8e8;font-weight:normal;white-space:nowrap;font-family:'Liberation Sans', sans-serif;">146.385</span>
<div style="position:absolute;left:981px;top:138px;width:2px;height:1px;background:#c8c8c8"></div>
<span id="t148" style="transform:scaleX(0.7722);transform-origin:0 0;position:absolute;left:984.00px;top:159.50px;font-size:8.6px;line-height:9.606px;color:#e8e8e8;font-weight:normal;white-space:nowrap;font-family:'Liberation Sans', sans-serif;">146.345</span>
<div style="position:absolute;left:981px;top:164px;width:2px;height:1px;background:#c8c8c8"></div>
<span id="t149" style="transform:scaleX(0.7722);transform-origin:0 0;position:absolute;left:984.00px;top:186.00px;font-size:8.6px;line-height:9.606px;color:#e8e8e8;font-weight:normal;white-space:nowrap;font-family:'Liberation Sans', sans-serif;">146.305</span>
<div style="position:absolute;left:981px;top:190px;width:2px;height:1px;background:#c8c8c8"></div>
<span id="t150" style="transform:scaleX(0.7722);transform-origin:0 0;position:absolute;left:984.00px;top:211.50px;font-size:8.6px;line-height:9.606px;color:#e8e8e8;font-weight:normal;white-space:nowrap;font-family:'Liberation Sans', sans-serif;">146.265</span>
<div style="position:absolute;left:981px;top:216px;width:2px;height:1px;background:#c8c8c8"></div>
<div style="position:absolute;left:982px;top:141.7px;width:31px;height:8px;background:#fff"></div>
<span id="t151" style="transform:scaleX(0.8044);transform-origin:0 0;position:absolute;left:984.00px;top:141.70px;font-size:8.6px;line-height:9.606px;color:#000;font-weight:normal;white-space:nowrap;font-family:'Liberation Sans', sans-serif;">146.373</span>
<span id="t152" style="transform:scaleX(0.8115);transform-origin:0 0;position:absolute;left:591.50px;top:222.20px;font-size:8.6px;line-height:9.606px;color:#e8e8e8;font-weight:normal;white-space:nowrap;font-family:'Liberation Sans', sans-serif;">12 Oct 2022</span>
<span id="t153" style="transform:scaleX(0.8229);transform-origin:0 0;position:absolute;left:639.50px;top:222.20px;font-size:8.6px;line-height:9.606px;color:#e8e8e8;font-weight:normal;white-space:nowrap;font-family:'Liberation Sans', sans-serif;">12 Oct 12:04</span>
<span id="t154" style="transform:scaleX(0.8229);transform-origin:0 0;position:absolute;left:687.50px;top:222.20px;font-size:8.6px;line-height:9.606px;color:#e8e8e8;font-weight:normal;white-space:nowrap;font-family:'Liberation Sans', sans-serif;">12 Oct 12:12</span>
<span id="t155" style="transform:scaleX(0.8229);transform-origin:0 0;position:absolute;left:735.50px;top:222.20px;font-size:8.6px;line-height:9.606px;color:#e8e8e8;font-weight:normal;white-space:nowrap;font-family:'Liberation Sans', sans-serif;">12 Oct 12:20</span>
<span id="t156" style="transform:scaleX(0.8229);transform-origin:0 0;position:absolute;left:783.50px;top:222.20px;font-size:8.6px;line-height:9.606px;color:#e8e8e8;font-weight:normal;white-space:nowrap;font-family:'Liberation Sans', sans-serif;">12 Oct 12:28</span>
<span id="t157" style="transform:scaleX(0.8229);transform-origin:0 0;position:absolute;left:831.50px;top:222.20px;font-size:8.6px;line-height:9.606px;color:#e8e8e8;font-weight:normal;white-space:nowrap;font-family:'Liberation Sans', sans-serif;">12 Oct 12:36</span>
<span id="t158" style="transform:scaleX(0.8229);transform-origin:0 0;position:absolute;left:879.50px;top:222.20px;font-size:8.6px;line-height:9.606px;color:#e8e8e8;font-weight:normal;white-space:nowrap;font-family:'Liberation Sans', sans-serif;">12 Oct 12:44</span>
<span id="t159" style="transform:scaleX(0.8229);transform-origin:0 0;position:absolute;left:927.50px;top:222.20px;font-size:8.6px;line-height:9.606px;color:#e8e8e8;font-weight:normal;white-space:nowrap;font-family:'Liberation Sans', sans-serif;">12 Oct 12:52</span>
<svg style="position:absolute;left:0;top:0" width="1024" height="75"><rect x="1.5" y="36" width="2.5" height="1.6" fill="#b4b4b4"/><rect x="1.5" y="39" width="2.5" height="1.6" fill="#b4b4b4"/><rect x="1.5" y="42" width="2.5" height="1.6" fill="#b4b4b4"/><rect x="1.5" y="45" width="2.5" height="1.6" fill="#b4b4b4"/><rect x="1.5" y="48" width="2.5" height="1.6" fill="#b4b4b4"/><rect x="8.5" y="37.5" width="9.5" height="8.5" rx="1" fill="#eef4fb" stroke="#4f88d0" stroke-width="1"/><rect x="9" y="38" width="8.5" height="1.6" fill="#7fb0e8"/><rect x="10" y="40.5" width="1" height="4" fill="#7a8aa0"/><path d="M15.0 40.5H18.0V43.5H21.0V46.5H18.0V49.5H15.0V46.5H12.0V43.5H15.0Z" fill="#22cc22" stroke="#0a8a0a" stroke-width="0.8"/><path d="M25 43.3H29L27 45.5Z" fill="#111"/><rect x="36.5" y="37.7" width="10" height="8" rx="1" fill="#eef4fb" stroke="#4f88d0"/><rect x="38.8" y="41.5" width="10" height="8" rx="1" fill="#eef4fb" stroke="#4f88d0"/><rect x="39.5" y="42.2" width="8.6" height="1.4" fill="#9cc0ea"/><rect x="38" y="40" width="6" height="1" fill="#7a8aa0"/><path d="M52.7 43.3H56.7L54.7 45.5Z" fill="#111"/><rect x="62.0" y="35.5" width="1.2" height="15.5" fill="#9a9a9a"/><rect x="66" y="34.5" width="19" height="17.0" fill="#f6f6f6"/><rect x="66" y="34.5" width="1.3" height="17.0" fill="#a8a8a8"/><rect x="66" y="34.5" width="19" height="1.3" fill="#b0b0b0"/><rect x="69.5" y="38" width="11.5" height="11.5" rx="1.5" fill="#fff" stroke="#7eaee6" stroke-width="1.2"/><path d="M74 39.5L76.2 41.8L74 44L71.8 41.8Z" fill="#2fb02f"/><path d="M76.3 43.3L78.6 45.6L76.3 47.9L74 45.6Z" fill="#ee6a3a"/><circle cx="96.4" cy="43.7" r="4" fill="none" stroke="#8a98a8" stroke-width="1"/><path d="M96.4 38V49.4M90.8 43.7H102" stroke="#555" stroke-width="1.2"/><path d="M96.4 37.5l-1.5 2h3zM96.4 50l-1.5-2h3zM90.5 43.7l2-1.5v3zM102.3 43.7l-2-1.5v3z" fill="#555"/><rect x="108.5" y="34.5" width="18.5" height="17.0" fill="#f6f6f6"/><rect x="108.5" y="34.5" width="1.3" height="17.0" fill="#a8a8a8"/><rect x="108.5" y="34.5" width="18.5" height="1.3" fill="#b0b0b0"/><path d="M110.5 39h3l1 1h4v6h-8z" fill="#f6e48a" stroke="#caa84a" stroke-width="0.8"/><path d="M119.5 40.5l1.3 2.8 3 .3-2.3 2 .7 3-2.7-1.6-2.7 1.6.7-3-2.3-2 3-.3z" fill="#f5d040" stroke="#c89a2a" stroke-width="0.8"/><path d="M113.5 46.5v4" stroke="#777" stroke-width="0.8" stroke-dasharray="1,1"/><rect x="129.5" y="34.5" width="18.0" height="17.0" fill="#f6f6f6"/><rect x="129.5" y="34.5" width="1.3" height="17.0" fill="#a8a8a8"/><rect x="129.5" y="34.5" width="18.0" height="1.3" fill="#b0b0b0"/><rect x="132.5" y="38.5" width="11.5" height="10.5" rx="1" fill="#fff" stroke="#3a74c8" stroke-width="1.2"/><rect x="132.5" y="38.5" width="2.5" height="10.5" fill="#3a74c8"/><path d="M136.5 41.5h6M136.5 44h6M136.5 46.5h6" stroke="#a8c8ee" stroke-width="0.9"/><circle cx="136" cy="41.3" r="0.7" fill="#e05050"/><circle cx="136" cy="44" r="0.7" fill="#e05050"/><rect x="153.5" y="37.5" width="8.5" height="9.5" fill="#f4f4f4" stroke="#a09898" stroke-width="0.9"/><circle cx="159" cy="44.3" r="3.3" fill="#d8e8f8" stroke="#6aa0e0" stroke-width="1.1"/><path d="M161.5 47l3.8 3.6" stroke="#d0a030" stroke-width="2"/><rect x="172.0" y="35" width="1.2" height="16" fill="#9a9a9a"/><path d="M179.5 37.5h5.5l2.5 2.5v7.5h-8z" fill="#f8f8f8" stroke="#8a8a8a" stroke-width="0.9"/><path d="M181 40h3M181 42h4" stroke="#777" stroke-width="0.7"/><path d="M184.3 41.4H187.3V44.5H190.4V47.5H187.3V50.6H184.3V47.5H181.20000000000002V44.5H184.3Z" fill="#22cc22" stroke="#0a8a0a" stroke-width="0.8"/><path d="M248 38.5l9 4.5-3 6.5-9-4.5z" fill="#f0c830" stroke="#b88a20" stroke-width="0.9"/><path d="M246 44l8.5 4.5" stroke="#c89820" stroke-width="1"/><rect x="267.8" y="37.2" width="8.5" height="8" fill="#1f8ef0" stroke="#1a70c8" stroke-width="0.6"/><rect x="269.5" y="39" width="5" height="1.3" fill="#cfe8ff"/><path d="M266.5 49.5c-1.5 0-1.5-3 .8-3 .5-2 3.5-2.5 4.5-.8 1-1.2 4-1 4.5 1 2.5.2 2.2 2.8.2 2.8z" fill="#e4e8f0" stroke="#8898b0" stroke-width="0.9"/><circle cx="293.5" cy="43.5" r="6" fill="none" stroke="#a8c4e4" stroke-width="1.2"/><circle cx="293.5" cy="43.5" r="3.8" fill="none" stroke="#7aa6d8" stroke-width="1.1"/><circle cx="293.5" cy="43.5" r="1.3" fill="#1a5ac0"/><path d="M293.5 43.5L299 49.5L294 50z" fill="#40b040"/><path d="M308 42l6 7.5 5-3-1-4.5z" fill="#f2d040" stroke="#caa030" stroke-width="0.7"/><ellipse cx="313.5" cy="40.5" rx="5.8" ry="3" fill="#4aa8e0" stroke="#2a80c0" stroke-width="0.7"/><circle cx="316.8" cy="46.3" r="3.1" fill="#e02a20"/><circle cx="316.8" cy="46.3" r="1.3" fill="#fff"/><rect x="377.3" y="34" width="1" height="18" fill="#c8c8c8"/><rect x="380.5" y="36" width="2.5" height="1.6" fill="#b4b4b4"/><rect x="380.5" y="39" width="2.5" height="1.6" fill="#b4b4b4"/><rect x="380.5" y="42" width="2.5" height="1.6" fill="#b4b4b4"/><rect x="380.5" y="45" width="2.5" height="1.6" fill="#b4b4b4"/><rect x="380.5" y="48" width="2.5" height="1.6" fill="#b4b4b4"/><path d="M392 38.5V49.5M389 48H400" stroke="#555" stroke-width="1"/><path d="M391 39l1 -1 1 1zM399.5 48l1 0" stroke="#555" stroke-width="0.8"/><path d="M395.5 46.5V40M395.5 46.5h-1.5M395.5 40h2" stroke="#2aa02a" stroke-width="1.2"/><rect x="406" y="34.5" width="19" height="17.0" fill="#f6f6f6"/><rect x="406" y="34.5" width="1.3" height="17.0" fill="#a8a8a8"/><rect x="406" y="34.5" width="19" height="1.3" fill="#b0b0b0"/><path d="M412 39V49.5M409.5 48H420.5" stroke="#555" stroke-width="1"/><path d="M416.8 37.5V47" stroke="#2aa02a" stroke-width="0.9"/><rect x="415.2" y="39.5" width="3.2" height="6" rx="0.8" fill="#3ad03a" stroke="#1a901a" stroke-width="0.7"/><path d="M433.5 39V49.5M431 48H442" stroke="#555" stroke-width="1"/><path d="M432 46L436.5 41.5L441 45.5" stroke="#3aaa3a" stroke-width="1" fill="none"/><rect x="448.5" y="35" width="1.2" height="16" fill="#9a9a9a"/><path d="M463 45.7l4.2 4.5" stroke="#d0a840" stroke-width="2.3"/><circle cx="460" cy="42.7" r="4.6" fill="#e4f0fc" stroke="#78aee4" stroke-width="1.3"/><path d="M457.4 42.7H462.6M460 40.1V45.3" stroke="#5a98d8" stroke-width="1.5"/><path d="M484.3 45.7l4.2 4.5" stroke="#d0a840" stroke-width="2.3"/><circle cx="481.3" cy="42.7" r="4.6" fill="#e4f0fc" stroke="#78aee4" stroke-width="1.3"/><rect x="478.8" y="42" width="5" height="1.5" fill="#5a98d8"/><rect x="497.5" y="37.5" width="6" height="5.8" rx="1" fill="#30a030"/><rect x="504" y="37.5" width="6" height="5.8" rx="1" fill="#2a60c8"/><rect x="497.5" y="43.8" width="6" height="5.8" rx="1" fill="#2a60c8"/><rect x="504" y="43.8" width="6" height="5.8" rx="1" fill="#30a030"/><path d="M498.5 40.5h4M505 40.5h4M498.5 46.8h4M505 46.8h4" stroke="#e8f0f8" stroke-width="1.3"/><rect x="516.0" y="35" width="1.2" height="16" fill="#9a9a9a"/><rect x="520.5" y="34.5" width="18.0" height="17.0" fill="#f6f6f6"/><rect x="520.5" y="34.5" width="1.3" height="17.0" fill="#a8a8a8"/><rect x="520.5" y="34.5" width="18.0" height="1.3" fill="#b0b0b0"/><path d="M526 39V49.5M523.5 47.5H534.5" stroke="#555" stroke-width="1"/><path d="M529.6 41V45.2L533 43.1Z" fill="#30c030"/><path d="M547 39V49.5M544.5 47.5H555.5" stroke="#555" stroke-width="1"/><path d="M551.5 39V47" stroke="#3a7ad0" stroke-width="1"/><path d="M552.5 41.8V45l3-1.6z" fill="#e05a20"/><rect x="562.5" y="35" width="1.2" height="16" fill="#9a9a9a"/><path d="M570.5 37.5h5.5l2.5 2.5v7.5h-8z" fill="#f8f8f8" stroke="#8a8a8a" stroke-width="0.9"/><path d="M576.0 41.6H579.0V44.5H581.9V47.5H579.0V50.4H576.0V47.5H573.1V44.5H576.0Z" fill="#22cc22" stroke="#0a8a0a" stroke-width="0.8"/><path d="M585 43.3H589L587 45.5Z" fill="#111"/><circle cx="603" cy="43.3" r="5.4" fill="#f4f8fc" stroke="#1f6ad0" stroke-width="1.8"/><path d="M603 40V43.5L605 45" stroke="#777" stroke-width="0.9" fill="none"/><path d="M612.5 43.3H616.5L614.5 45.5Z" fill="#111"/><rect x="625.5" y="38.5" width="11" height="10.5" fill="#fff" stroke="#4a88d0" stroke-width="1.1"/><rect x="626" y="39" width="10" height="2" fill="#9cc4ee"/><path d="M627 44l2.5-1.5 2 .8 3-1.8" stroke="#d06a40" stroke-width="1" fill="none"/><path d="M627 47.5l2.5-1.2 2 .8 3-1.5" stroke="#40b040" stroke-width="1" fill="none"/><path d="M640.5 43.3H644.5L642.5 45.5Z" fill="#111"/><rect x="649.3" y="34" width="1" height="19" fill="#c8c8c8"/><rect x="0" y="52.3" width="650" height="1" fill="#cfcfcf"/><circle cx="990" cy="41" r="2.6" fill="none" stroke="#2a6ad8" stroke-width="1.6"/><path d="M988.2 43l-3.4 3.6" stroke="#2a6ad8" stroke-width="2"/><ellipse cx="1007.5" cy="46.5" rx="4" ry="3" fill="#f4f4f4" stroke="#b0b0b0" stroke-width="0.9"/><circle cx="1014.3" cy="41.7" r="5.8" fill="#e02818"/><rect x="1.5" y="55.5" width="2.5" height="1.6" fill="#b4b4b4"/><rect x="1.5" y="58.5" width="2.5" height="1.6" fill="#b4b4b4"/><rect x="1.5" y="61.5" width="2.5" height="1.6" fill="#b4b4b4"/><rect x="1.5" y="64.5" width="2.5" height="1.6" fill="#b4b4b4"/><rect x="1.5" y="67.5" width="2.5" height="1.6" fill="#b4b4b4"/><rect x="1.5" y="70.5" width="2.5" height="1.6" fill="#b4b4b4"/><rect x="6.3" y="55" width="18.2" height="17" fill="#f6f6f6"/><rect x="6.3" y="55" width="1.3" height="17" fill="#a8a8a8"/><rect x="6.3" y="55" width="18.2" height="1.3" fill="#b0b0b0"/><path d="M12 58.3V67.3L14.3 65.3L16.3 69L17.6 68.3L15.6 64.8H18.5Z" fill="#505050"/><path d="M36.3 58V62.5M36.3 65.5V70M31 64H35M37.6 64H42" stroke="#666" stroke-width="1.3"/><rect x="48.7" y="55.5" width="1.2" height="15.5" fill="#9a9a9a"/><rect x="61" y="59" width="1.6" height="10" fill="#808080"/><rect x="79" y="63.3" width="8.8" height="1.6" fill="#808080"/><path d="M99.5 68.8L109 59.5" stroke="#707880" stroke-width="1.2"/><path d="M119.5 67l7-7M121.5 69l7-7M119.5 63l4-4M124 68.5l5.5-5.5" stroke="#555" stroke-width="1.1"/><path d="M127.5 69.5h2.5M127.5 67.5v4" stroke="#666" stroke-width="0.8"/><path d="M141 58.5H151M141 61.3H151M141 64.3H151M141 67.3H151" stroke="#9a9a9a" stroke-width="0.9" stroke-dasharray="1.2,0.8"/><path d="M148.5 70l1.5-2.5" stroke="#555" stroke-width="1.2"/><path d="M164.3 67.5L167 60.8L169.7 67.5M165.3 65.3H168.7" stroke="#666" stroke-width="1.3" fill="none"/><rect x="183.5" y="58.8" width="9.3" height="10" fill="none" stroke="#888" stroke-width="0.8" stroke-dasharray="1,1"/><path d="M185.5 61H191M188.2 61V67.5" stroke="#444" stroke-width="1.4"/><path d="M207 59.5l2.3 2-2.3 2-2.5-2z" fill="#444"/><path d="M211.5 64.5l2.5 2-2.5 2.2-2.5-2.2z" fill="#444"/><path d="M206.5 65.5l1.5 1.5 2.5-2.5" stroke="#444" stroke-width="1" fill="none"/><path d="M218 63H222L220 65.2Z" fill="#111"/><rect x="226.3" y="54" width="1" height="18" fill="#c8c8c8"/><rect x="229.5" y="55.5" width="2.5" height="1.6" fill="#b4b4b4"/><rect x="229.5" y="58.5" width="2.5" height="1.6" fill="#b4b4b4"/><rect x="229.5" y="61.5" width="2.5" height="1.6" fill="#b4b4b4"/><rect x="229.5" y="64.5" width="2.5" height="1.6" fill="#b4b4b4"/><rect x="229.5" y="67.5" width="2.5" height="1.6" fill="#b4b4b4"/><rect x="229.5" y="70.5" width="2.5" height="1.6" fill="#b4b4b4"/><rect x="234.4" y="55" width="18.400000000000006" height="17" fill="#f6f6f6"/><rect x="234.4" y="55" width="1.3" height="17" fill="#a8a8a8"/><rect x="234.4" y="55" width="18.400000000000006" height="1.3" fill="#b0b0b0"/><rect x="422.5" y="54" width="1" height="18" fill="#c8c8c8"/></svg>
<span id="t160" style="transform:scaleX(0.9013);transform-origin:0 0;position:absolute;left:194.00px;top:37.74px;font-size:9.8px;line-height:10.947px;color:#1a1a1a;font-weight:normal;white-space:nowrap;font-family:'Liberation Sans', sans-serif;">New Order</span>
<span id="t161" style="transform:scaleX(0.9224);transform-origin:0 0;position:absolute;left:323.60px;top:37.74px;font-size:9.8px;line-height:10.947px;color:#1a1a1a;font-weight:normal;white-space:nowrap;font-family:'Liberation Sans', sans-serif;">AutoTrading</span>
<svg style="position:absolute;left:1008px;top:36px" width="12" height="12"><path d="M5.2 3.2V8.8M5.2 3.2L4 4.3" stroke="#fff" stroke-width="1.5" fill="none"/></svg>
<span id="t162" style="transform:scaleX(0.7339);transform-origin:0 0;position:absolute;left:238.00px;top:59.24px;font-size:9.8px;line-height:10.947px;color:#484848;font-weight:normal;white-space:nowrap;font-family:'Liberation Sans', sans-serif;">M1</span>
<span id="t163" style="transform:scaleX(0.7339);transform-origin:0 0;position:absolute;left:259.00px;top:59.24px;font-size:9.8px;line-height:10.947px;color:#484848;font-weight:normal;white-space:nowrap;font-family:'Liberation Sans', sans-serif;">M5</span>
<span id="t164" style="transform:scaleX(0.6820);transform-origin:0 0;position:absolute;left:279.00px;top:59.24px;font-size:9.8px;line-height:10.947px;color:#484848;font-weight:normal;white-space:nowrap;font-family:'Liberation Sans', sans-serif;">M15</span>
<span id="t165" style="transform:scaleX(0.6715);transform-origin:0 0;position:absolute;left:300.00px;top:59.24px;font-size:9.8px;line-height:10.947px;color:#484848;font-weight:normal;white-space:nowrap;font-family:'Liberation Sans', sans-serif;">M30</span>
<span id="t166" style="transform:scaleX(0.7262);transform-origin:0 0;position:absolute;left:322.70px;top:59.24px;font-size:9.8px;line-height:10.947px;color:#484848;font-weight:normal;white-space:nowrap;font-family:'Liberation Sans', sans-serif;">H1</span>
<span id="t167" style="transform:scaleX(0.7421);transform-origin:0 0;position:absolute;left:342.90px;top:59.24px;font-size:9.8px;line-height:10.947px;color:#484848;font-weight:normal;white-space:nowrap;font-family:'Liberation Sans', sans-serif;">H4</span>
<span id="t168" style="transform:scaleX(0.7182);transform-origin:0 0;position:absolute;left:364.80px;top:59.24px;font-size:9.8px;line-height:10.947px;color:#484848;font-weight:normal;white-space:nowrap;font-family:'Liberation Sans', sans-serif;">D1</span>
<span id="t169" style="transform:scaleX(0.7481);transform-origin:0 0;position:absolute;left:385.20px;top:59.24px;font-size:9.8px;line-height:10.947px;color:#484848;font-weight:normal;white-space:nowrap;font-family:'Liberation Sans', sans-serif;">W1</span>
<span id="t170" style="transform:scaleX(0.7541);transform-origin:0 0;position:absolute;left:405.50px;top:59.24px;font-size:9.8px;line-height:10.947px;color:#484848;font-weight:normal;white-space:nowrap;font-family:'Liberation Sans', sans-serif;">MN</span>
<svg style="position:absolute;left:0;top:260px" width="140" height="110"><path d="M13.5 17V92" stroke="#a0a0a0" stroke-width="1" stroke-dasharray="1,1"/><path d="M28.5 30V35M44.5 44V52H53" fill="none" stroke="#a0a0a0" stroke-width="1" stroke-dasharray="1,1"/><path d="M16.5 25H21.5" stroke="#a0a0a0" stroke-dasharray="1,1"/><path d="M16.5 65.60000000000002H21.5" stroke="#a0a0a0" stroke-dasharray="1,1"/><path d="M16.5 79.30000000000001H21.5" stroke="#a0a0a0" stroke-dasharray="1,1"/><path d="M16.5 92.80000000000001H21.5" stroke="#a0a0a0" stroke-dasharray="1,1"/><path d="M32 38H38" stroke="#a0a0a0" stroke-dasharray="1,1"/><rect x="10.0" y="21.7" width="6.4" height="6.6" rx="1" fill="#f4f6f8" stroke="#a8aeb8" stroke-width="0.9"/><rect x="11.2" y="24.5" width="4" height="1.2" fill="#4a5a8a"/><rect x="25.400000000000002" y="34.7" width="6.4" height="6.6" rx="1" fill="#f4f6f8" stroke="#a8aeb8" stroke-width="0.9"/><rect x="26.6" y="37.5" width="4" height="1.2" fill="#4a5a8a"/><rect x="10.0" y="62.300000000000026" width="6.4" height="6.6" rx="1" fill="#f4f6f8" stroke="#a8aeb8" stroke-width="0.9"/><rect x="11.2" y="65.10000000000002" width="4" height="1.2" fill="#4a5a8a"/><rect x="12.6" y="63.60000000000002" width="1.2" height="4" fill="#4a5a8a"/><rect x="10.0" y="76.00000000000001" width="6.4" height="6.6" rx="1" fill="#f4f6f8" stroke="#a8aeb8" stroke-width="0.9"/><rect x="11.2" y="78.80000000000001" width="4" height="1.2" fill="#4a5a8a"/><rect x="12.6" y="77.30000000000001" width="1.2" height="4" fill="#4a5a8a"/><rect x="10.0" y="89.50000000000001" width="6.4" height="6.6" rx="1" fill="#f4f6f8" stroke="#a8aeb8" stroke-width="0.9"/><rect x="11.2" y="92.30000000000001" width="4" height="1.2" fill="#4a5a8a"/><rect x="12.6" y="90.80000000000001" width="1.2" height="4" fill="#4a5a8a"/><rect x="8" y="5.5" width="7.5" height="6" rx="1" fill="#e8f2fc" stroke="#5a9ae0"/><rect x="10.5" y="9.5" width="7.5" height="6" rx="1" fill="#e8f2fc" stroke="#5a9ae0"/><rect x="11" y="10" width="6.5" height="1.5" fill="#8ec0f0"/><rect x="8.5" y="6" width="6.5" height="1.5" fill="#8ec0f0"/><circle cx="26" cy="21" r="2.8" fill="#f2c030" stroke="#b88a10" stroke-width="0.6"/><path d="M22 29.5c0-4 8-4 8 0z" fill="#2cb02c"/><rect x="27" y="20" width="7.5" height="10" rx="1.5" fill="#e8b828" stroke="#a88018" stroke-width="0.7"/><circle cx="30.5" cy="23.5" r="2" fill="#f8d860"/><path d="M40 33l2-1.5h5.8v12h-5.8l-2-1.5z" fill="#2a8ef0" stroke="#1a68c0" stroke-width="0.7"/><rect x="43.5" y="34.5" width="3" height="1" fill="#d0e8ff"/><rect x="43.5" y="36.5" width="3" height="1" fill="#d0e8ff"/><circle cx="60.4" cy="48.30000000000001" r="3" fill="#f0b828" stroke="#b08010" stroke-width="0.6"/><path d="M56 56c0-5 8.8-5 8.8 0z" fill="#2cb02c" stroke="#188818" stroke-width="0.6"/><rect x="22.8" y="59.30000000000001" width="10" height="9.8" rx="1.8" fill="#f6dc6a" stroke="#c8a030" stroke-width="0.9"/><path d="M29.5 61.5c-1.5-.5-2 0-2.3 1.5l-1 4.8c-.3 1.2-.8 1.4-1.8 1.1M26 63.80000000000001h3" stroke="#806010" stroke-width="0.9" fill="none"/><ellipse cx="28" cy="75" rx="5.8" ry="2.6" fill="#3aa0e0" stroke="#2a78b8" stroke-width="0.6"/><circle cx="27.5" cy="78" r="2.3" fill="#f0c838"/><path d="M31.5 78.5l2.5 2.5-2.5 2.5-2.5-2.5z" fill="#f0c838" stroke="#b88a18" stroke-width="0.7"/><path d="M23 86.5h8.5v7.5h-8.5z" fill="#f6dc80" stroke="#c8a040" stroke-width="0.8"/><path d="M31 91.5l2.5 2.5-2.5 2.5-2.5-2.5z" fill="#f0c838" stroke="#b88a18" stroke-width="0.7"/></svg>
</body></html>
